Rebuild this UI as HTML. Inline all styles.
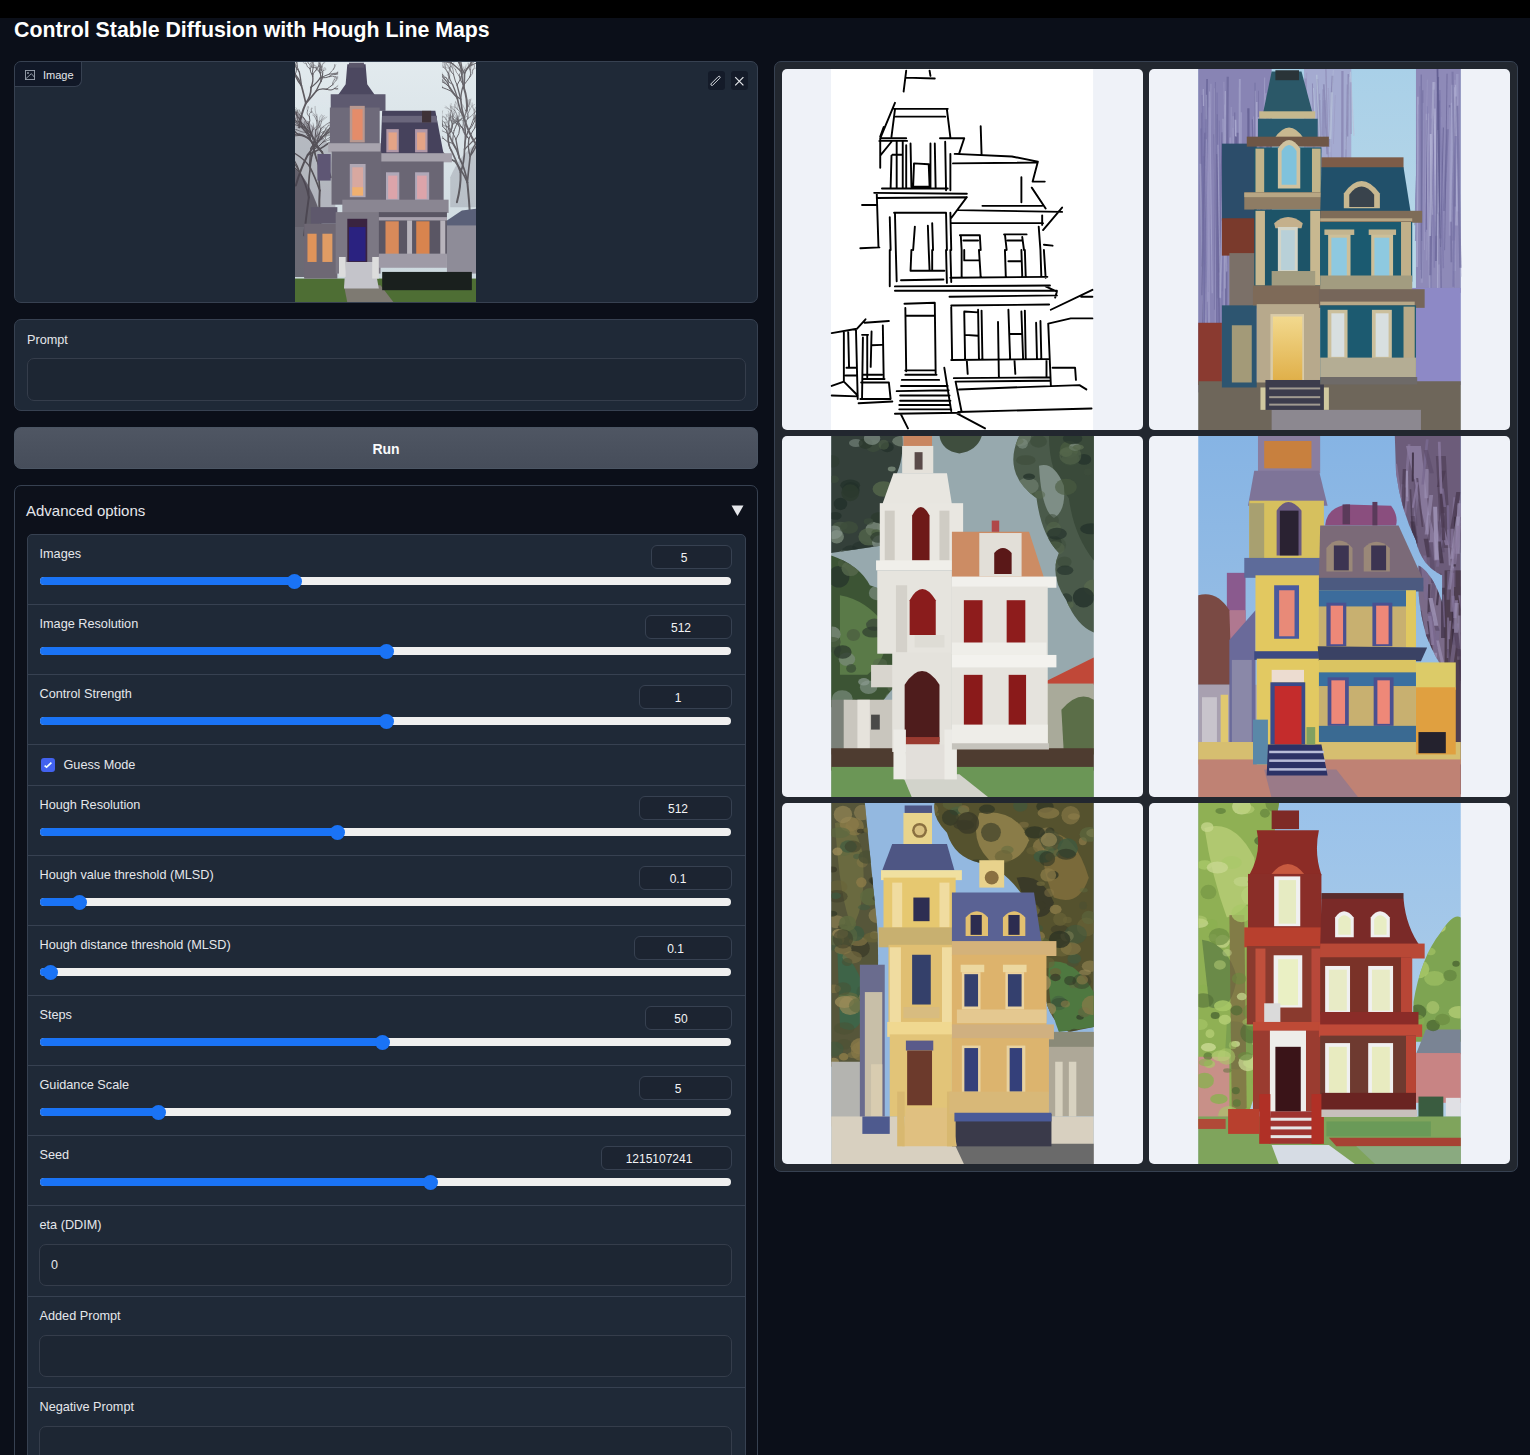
<!DOCTYPE html>
<html><head><meta charset="utf-8">
<style>
*{box-sizing:border-box;margin:0;padding:0}
html,body{width:1530px;height:1455px;overflow:hidden;background:#0b0f19;font-family:"Liberation Sans",sans-serif;color:#e5e7eb}
.abs{position:absolute}
#topbar{left:0;top:0;width:1530px;height:17.5px;background:#000}
#title{left:14px;top:17.5px;font-size:21.3px;font-weight:bold;color:#fff;white-space:nowrap;line-height:25px}
.block{position:absolute;background:#1f2937;border:1px solid #374151;border-radius:7px;overflow:hidden}
.lbl{position:absolute;font-size:12.7px;color:#e5e7eb;white-space:nowrap;line-height:15px}
.input{position:absolute;border:1px solid #353d4b;border-radius:7px;background:#1d2633}
.numbox{position:absolute;border:1px solid #374151;border-radius:6px;height:24px;font-size:12px;color:#f3f4f6;text-align:center;line-height:23px;padding-right:15px;padding-top:0.7px;background:#1c2431}
.track{position:absolute;left:40px;width:691px;height:8px;border-radius:4px;background:#efefef;overflow:hidden}
.fill{position:absolute;left:0;top:0;height:8px;background:#1a73f5}
.thumb{position:absolute;width:15px;height:15px;border-radius:7.5px;background:#1a73f5}
.sep{position:absolute;left:0;width:718px;height:1px;background:#374151}
.cell{position:absolute;width:361px;height:361px;background:#eff2f8;border-radius:5px;overflow:hidden}

</style></head><body>
<div id="topbar" class="abs"></div>
<div id="title" class="abs">Control Stable Diffusion with Hough Line Maps</div>

<!-- Image block -->
<div class="block" style="left:14px;top:61px;width:744px;height:242px;">
  <div class="abs" style="left:0;top:0;width:67px;height:25px;border-right:1px solid #374151;border-bottom:1px solid #374151;border-bottom-right-radius:7px;background:#111827"></div>
  <svg class="abs" style="left:9.5px;top:7.5px" width="10" height="10" viewBox="0 0 11 11"><rect x="0.5" y="0.5" width="10" height="10" fill="none" stroke="#9ca3af" stroke-width="1"/><circle cx="3.3" cy="3.3" r="1" fill="#9ca3af"/><path d="M0.5 10 L7 4 L10.5 8" fill="none" stroke="#9ca3af" stroke-width="1"/></svg>
  <div class="lbl" style="left:28px;top:5.5px;font-size:11px">Image</div>
  <svg class="abs" style="left:280px;top:0px;width:181px;height:240px" viewBox="5 6 1090 1445">
<defs><linearGradient id="ins" x1="0" y1="0" x2="0" y2="1"><stop offset="0" stop-color="#e2eaee"/><stop offset="1" stop-color="#c9d6dc"/></linearGradient></defs>
<rect x="5" y="0" width="1090" height="1455" fill="url(#ins)"/>
<!-- bare trees -->
<path d="M5,300 Q120,380 220,520 L250,900 L150,1000 L5,1000 Z" fill="#8a8690" opacity="0.45"/>
<path d="M1095,500 Q1000,560 940,700 L940,880 L1095,880 Z" fill="#8a8a94" opacity="0.35"/>
<defs><clipPath id="inL"><rect x="5" y="0" width="260" height="1300"/></clipPath><clipPath id="inR"><rect x="890" y="0" width="210" height="950"/></clipPath></defs><g stroke="#3e383e" fill="none" opacity="0.8" stroke-linecap="round" clip-path="url(#inL)"><path d="M60,1050 Q72,938 88,822" stroke-width="12.0"/><path d="M88,822 Q83,742 97,644" stroke-width="10.0"/><path d="M97,644 Q101,572 129,512" stroke-width="8.0"/><path d="M129,512 Q148,464 159,410" stroke-width="6.0"/><path d="M159,410 Q194,377 222,364" stroke-width="4.0"/><path d="M222,364 Q233,372 271,356" stroke-width="2.0"/><path d="M222,364 Q244,341 269,330" stroke-width="2.0"/><path d="M159,410 Q144,383 134,334" stroke-width="4.0"/><path d="M134,334 Q120,310 95,304" stroke-width="2.0"/><path d="M134,334 Q124,291 126,273" stroke-width="2.0"/><path d="M129,512 Q149,475 171,439" stroke-width="6.0"/><path d="M171,439 Q179,422 205,390" stroke-width="4.0"/><path d="M205,390 Q211,387 224,354" stroke-width="2.0"/><path d="M205,390 Q220,393 240,374" stroke-width="2.0"/><path d="M171,439 Q183,414 220,407" stroke-width="4.0"/><path d="M220,407 Q228,388 245,372" stroke-width="2.0"/><path d="M220,407 Q230,411 258,401" stroke-width="2.0"/><path d="M220,407 Q220,391 235,363" stroke-width="2.0"/><path d="M171,439 Q190,424 232,410" stroke-width="4.0"/><path d="M232,410 Q250,424 281,412" stroke-width="2.0"/><path d="M232,410 Q243,404 253,370" stroke-width="2.0"/><path d="M232,410 Q245,392 280,401" stroke-width="2.0"/><path d="M97,644 Q95,583 119,533" stroke-width="8.0"/><path d="M119,533 Q148,518 174,488" stroke-width="6.0"/><path d="M174,488 Q210,476 217,473" stroke-width="4.0"/><path d="M217,473 Q246,468 253,469" stroke-width="2.0"/><path d="M217,473 Q221,473 250,465" stroke-width="2.0"/><path d="M174,488 Q205,462 216,461" stroke-width="4.0"/><path d="M216,461 Q222,436 229,427" stroke-width="2.0"/><path d="M216,461 Q226,453 234,429" stroke-width="2.0"/><path d="M216,461 Q230,465 247,451" stroke-width="2.0"/><path d="M174,488 Q194,475 193,441" stroke-width="4.0"/><path d="M193,441 Q198,410 184,402" stroke-width="2.0"/><path d="M193,441 Q209,440 205,409" stroke-width="2.0"/><path d="M193,441 Q199,432 213,414" stroke-width="2.0"/><path d="M119,533 Q112,498 97,466" stroke-width="6.0"/><path d="M97,466 Q86,428 83,415" stroke-width="4.0"/><path d="M83,415 Q62,387 60,387" stroke-width="2.0"/><path d="M83,415 Q79,410 75,375" stroke-width="2.0"/><path d="M97,466 Q93,439 112,415" stroke-width="4.0"/><path d="M112,415 Q126,408 137,393" stroke-width="2.0"/><path d="M112,415 Q132,392 139,386" stroke-width="2.0"/><path d="M112,415 Q124,390 114,373" stroke-width="2.0"/><path d="M97,466 Q114,441 110,421" stroke-width="4.0"/><path d="M110,421 Q115,394 104,390" stroke-width="2.0"/><path d="M110,421 Q115,409 117,385" stroke-width="2.0"/><path d="M88,822 Q72,737 32,668" stroke-width="10.0"/><path d="M32,668 Q12,604 -31,558" stroke-width="8.0"/><path d="M-31,558 Q-22,504 -18,468" stroke-width="6.0"/><path d="M-18,468 Q-33,443 -40,416" stroke-width="4.0"/><path d="M-40,416 Q-38,400 -54,380" stroke-width="2.0"/><path d="M-40,416 Q-39,388 -32,374" stroke-width="2.0"/><path d="M-18,468 Q-24,441 -11,407" stroke-width="4.0"/><path d="M-11,407 Q-35,377 -30,365" stroke-width="2.0"/><path d="M-11,407 Q-7,396 -7,364" stroke-width="2.0"/><path d="M-18,468 Q-22,443 -7,410" stroke-width="4.0"/><path d="M-7,410 Q-10,394 -16,373" stroke-width="2.0"/><path d="M-7,410 Q4,382 -11,371" stroke-width="2.0"/><path d="M-7,410 Q-0,390 -13,373" stroke-width="2.0"/><path d="M-31,558 Q-39,508 -25,457" stroke-width="6.0"/><path d="M-25,457 Q-32,407 -20,383" stroke-width="4.0"/><path d="M-20,383 Q-32,371 -52,336" stroke-width="2.0"/><path d="M-20,383 Q-12,348 20,340" stroke-width="2.0"/><path d="M-25,457 Q-12,437 -12,396" stroke-width="4.0"/><path d="M-12,396 Q-14,387 -9,353" stroke-width="2.0"/><path d="M-12,396 Q-0,381 18,361" stroke-width="2.0"/><path d="M32,668 Q-27,619 -63,580" stroke-width="8.0"/><path d="M-63,580 Q-81,536 -115,497" stroke-width="6.0"/><path d="M-115,497 Q-152,464 -177,456" stroke-width="4.0"/><path d="M-177,456 Q-200,421 -195,400" stroke-width="2.0"/><path d="M-177,456 Q-209,439 -219,429" stroke-width="2.0"/><path d="M-115,497 Q-155,470 -170,459" stroke-width="4.0"/><path d="M-170,459 Q-175,446 -208,430" stroke-width="2.0"/><path d="M-170,459 Q-170,432 -195,425" stroke-width="2.0"/><path d="M-115,497 Q-142,466 -157,441" stroke-width="4.0"/><path d="M-157,441 Q-169,428 -191,410" stroke-width="2.0"/><path d="M-157,441 Q-172,425 -182,398" stroke-width="2.0"/><path d="M-63,580 Q-59,538 -80,500" stroke-width="6.0"/><path d="M-80,500 Q-110,462 -112,447" stroke-width="4.0"/><path d="M-112,447 Q-98,420 -111,407" stroke-width="2.0"/><path d="M-112,447 Q-126,436 -150,427" stroke-width="2.0"/><path d="M-112,447 Q-121,416 -116,408" stroke-width="2.0"/><path d="M-80,500 Q-85,477 -101,450" stroke-width="4.0"/><path d="M-101,450 Q-122,451 -128,425" stroke-width="2.0"/><path d="M-101,450 Q-123,433 -120,414" stroke-width="2.0"/><path d="M-101,450 Q-100,426 -91,412" stroke-width="2.0"/><path d="M-63,580 Q-73,528 -99,493" stroke-width="6.0"/><path d="M-99,493 Q-111,450 -102,427" stroke-width="4.0"/><path d="M-102,427 Q-102,418 -116,382" stroke-width="2.0"/><path d="M-102,427 Q-100,414 -102,382" stroke-width="2.0"/><path d="M-102,427 Q-105,414 -95,387" stroke-width="2.0"/><path d="M-99,493 Q-116,478 -139,440" stroke-width="4.0"/><path d="M-139,440 Q-131,411 -142,393" stroke-width="2.0"/><path d="M-139,440 Q-177,436 -187,422" stroke-width="2.0"/><path d="M-139,440 Q-142,433 -162,403" stroke-width="2.0"/><path d="M32,668 Q12,624 -29,585" stroke-width="8.0"/><path d="M-29,585 Q-62,540 -71,520" stroke-width="6.0"/><path d="M-71,520 Q-109,513 -118,497" stroke-width="4.0"/><path d="M-118,497 Q-140,475 -146,469" stroke-width="2.0"/><path d="M-118,497 Q-150,492 -155,480" stroke-width="2.0"/><path d="M-71,520 Q-64,504 -79,460" stroke-width="4.0"/><path d="M-79,460 Q-109,434 -109,432" stroke-width="2.0"/><path d="M-79,460 Q-80,441 -75,420" stroke-width="2.0"/><path d="M-79,460 Q-88,424 -76,415" stroke-width="2.0"/><path d="M-71,520 Q-91,508 -116,491" stroke-width="4.0"/><path d="M-116,491 Q-138,472 -142,468" stroke-width="2.0"/><path d="M-116,491 Q-133,475 -149,466" stroke-width="2.0"/><path d="M-29,585 Q-64,570 -76,537" stroke-width="6.0"/><path d="M-76,537 Q-77,500 -94,489" stroke-width="4.0"/><path d="M-94,489 Q-79,468 -87,450" stroke-width="2.0"/><path d="M-94,489 Q-93,476 -114,461" stroke-width="2.0"/><path d="M-76,537 Q-111,516 -125,518" stroke-width="4.0"/><path d="M-125,518 Q-157,516 -165,515" stroke-width="2.0"/><path d="M-125,518 Q-151,528 -158,527" stroke-width="2.0"/><path d="M-76,537 Q-89,503 -90,494" stroke-width="4.0"/><path d="M-90,494 Q-97,465 -77,463" stroke-width="2.0"/><path d="M-90,494 Q-102,474 -85,461" stroke-width="2.0"/><path d="M-29,585 Q-52,551 -55,510" stroke-width="6.0"/><path d="M-55,510 Q-46,480 -53,446" stroke-width="4.0"/><path d="M-53,446 Q-53,421 -66,407" stroke-width="2.0"/><path d="M-53,446 Q-76,434 -75,411" stroke-width="2.0"/><path d="M-55,510 Q-83,500 -108,474" stroke-width="4.0"/><path d="M-108,474 Q-116,458 -125,433" stroke-width="2.0"/><path d="M-108,474 Q-124,491 -152,478" stroke-width="2.0"/><path d="M-55,510 Q-82,481 -86,459" stroke-width="4.0"/><path d="M-86,459 Q-111,452 -114,431" stroke-width="2.0"/><path d="M-86,459 Q-89,458 -105,427" stroke-width="2.0"/><path d="M-86,459 Q-89,438 -92,422" stroke-width="2.0"/><path d="M160,1000 Q146,904 154,780" stroke-width="12.0"/><path d="M154,780 Q124,694 92,633" stroke-width="10.0"/><path d="M92,633 Q59,589 2,555" stroke-width="8.0"/><path d="M2,555 Q-50,559 -89,538" stroke-width="6.0"/><path d="M-89,538 Q-126,525 -143,506" stroke-width="4.0"/><path d="M-143,506 Q-154,508 -182,485" stroke-width="2.0"/><path d="M-143,506 Q-158,475 -168,473" stroke-width="2.0"/><path d="M-89,538 Q-137,545 -157,542" stroke-width="4.0"/><path d="M-157,542 Q-192,542 -204,551" stroke-width="2.0"/><path d="M-157,542 Q-169,518 -200,517" stroke-width="2.0"/><path d="M2,555 Q-23,523 -22,477" stroke-width="6.0"/><path d="M-22,477 Q-13,442 -20,418" stroke-width="4.0"/><path d="M-20,418 Q1,394 1,385" stroke-width="2.0"/><path d="M-20,418 Q-5,408 -16,375" stroke-width="2.0"/><path d="M-20,418 Q-0,386 -4,379" stroke-width="2.0"/><path d="M-22,477 Q-44,442 -55,434" stroke-width="4.0"/><path d="M-55,434 Q-63,418 -63,397" stroke-width="2.0"/><path d="M-55,434 Q-66,437 -93,417" stroke-width="2.0"/><path d="M92,633 Q96,569 101,525" stroke-width="8.0"/><path d="M101,525 Q130,490 151,474" stroke-width="6.0"/><path d="M151,474 Q180,474 191,447" stroke-width="4.0"/><path d="M191,447 Q198,452 227,445" stroke-width="2.0"/><path d="M191,447 Q213,442 221,437" stroke-width="2.0"/><path d="M151,474 Q163,472 187,444" stroke-width="4.0"/><path d="M187,444 Q200,430 202,418" stroke-width="2.0"/><path d="M187,444 Q194,446 215,428" stroke-width="2.0"/><path d="M187,444 Q210,429 215,435" stroke-width="2.0"/><path d="M101,525 Q108,506 141,469" stroke-width="6.0"/><path d="M141,469 Q136,441 159,424" stroke-width="4.0"/><path d="M159,424 Q183,401 179,397" stroke-width="2.0"/><path d="M159,424 Q166,399 160,388" stroke-width="2.0"/><path d="M159,424 Q158,397 176,391" stroke-width="2.0"/><path d="M141,469 Q149,451 180,451" stroke-width="4.0"/><path d="M180,451 Q187,434 210,439" stroke-width="2.0"/><path d="M180,451 Q196,455 212,449" stroke-width="2.0"/><path d="M180,451 Q183,430 194,425" stroke-width="2.0"/><path d="M101,525 Q131,475 133,454" stroke-width="6.0"/><path d="M133,454 Q150,434 174,426" stroke-width="4.0"/><path d="M174,426 Q199,432 214,426" stroke-width="2.0"/><path d="M174,426 Q196,424 192,398" stroke-width="2.0"/><path d="M133,454 Q149,429 144,398" stroke-width="4.0"/><path d="M144,398 Q157,374 150,358" stroke-width="2.0"/><path d="M144,398 Q130,378 134,361" stroke-width="2.0"/><path d="M154,780 Q147,688 146,622" stroke-width="10.0"/><path d="M146,622 Q119,562 121,520" stroke-width="8.0"/><path d="M121,520 Q117,474 104,445" stroke-width="6.0"/><path d="M104,445 Q107,419 84,400" stroke-width="4.0"/><path d="M84,400 Q68,376 80,362" stroke-width="2.0"/><path d="M84,400 Q80,385 88,364" stroke-width="2.0"/><path d="M104,445 Q93,411 79,398" stroke-width="4.0"/><path d="M79,398 Q71,378 65,366" stroke-width="2.0"/><path d="M79,398 Q59,378 63,366" stroke-width="2.0"/><path d="M79,398 Q88,393 86,363" stroke-width="2.0"/><path d="M121,520 Q98,492 89,446" stroke-width="6.0"/><path d="M89,446 Q72,420 61,404" stroke-width="4.0"/><path d="M61,404 Q70,378 52,371" stroke-width="2.0"/><path d="M61,404 Q61,377 62,365" stroke-width="2.0"/><path d="M89,446 Q81,420 52,405" stroke-width="4.0"/><path d="M52,405 Q22,390 21,385" stroke-width="2.0"/><path d="M52,405 Q51,387 23,376" stroke-width="2.0"/><path d="M52,405 Q33,400 17,397" stroke-width="2.0"/><path d="M146,622 Q121,552 116,501" stroke-width="8.0"/><path d="M116,501 Q94,479 70,431" stroke-width="6.0"/><path d="M70,431 Q52,431 14,414" stroke-width="4.0"/><path d="M14,414 Q4,418 -25,395" stroke-width="2.0"/><path d="M14,414 Q-17,407 -27,419" stroke-width="2.0"/><path d="M70,431 Q59,412 32,391" stroke-width="4.0"/><path d="M32,391 Q28,388 12,359" stroke-width="2.0"/><path d="M32,391 Q16,367 1,363" stroke-width="2.0"/><path d="M116,501 Q130,450 131,415" stroke-width="6.0"/><path d="M131,415 Q153,381 154,364" stroke-width="4.0"/><path d="M154,364 Q168,357 186,338" stroke-width="2.0"/><path d="M154,364 Q167,351 181,328" stroke-width="2.0"/><path d="M154,364 Q149,333 166,323" stroke-width="2.0"/><path d="M131,415 Q160,400 164,365" stroke-width="4.0"/><path d="M164,365 Q165,358 170,328" stroke-width="2.0"/><path d="M164,365 Q190,341 197,337" stroke-width="2.0"/><path d="M131,415 Q145,380 135,359" stroke-width="4.0"/><path d="M135,359 Q120,332 118,322" stroke-width="2.0"/><path d="M135,359 Q128,327 111,324" stroke-width="2.0"/><path d="M135,359 Q145,337 137,320" stroke-width="2.0"/><path d="M10,750 Q37,651 82,564" stroke-width="12.0"/><path d="M82,564 Q154,536 205,496" stroke-width="10.0"/><path d="M205,496 Q261,500 315,495" stroke-width="8.0"/><path d="M315,495 Q351,487 397,478" stroke-width="6.0"/><path d="M397,478 Q418,494 447,495" stroke-width="4.0"/><path d="M447,495 Q468,506 476,523" stroke-width="2.0"/><path d="M447,495 Q473,491 475,515" stroke-width="2.0"/><path d="M397,478 Q421,464 456,476" stroke-width="4.0"/><path d="M456,476 Q469,478 492,466" stroke-width="2.0"/><path d="M456,476 Q470,462 493,467" stroke-width="2.0"/><path d="M456,476 Q470,488 502,477" stroke-width="2.0"/><path d="M315,495 Q359,501 402,491" stroke-width="6.0"/><path d="M402,491 Q425,514 453,512" stroke-width="4.0"/><path d="M453,512 Q453,533 481,540" stroke-width="2.0"/><path d="M453,512 Q472,511 486,533" stroke-width="2.0"/><path d="M402,491 Q434,480 465,497" stroke-width="4.0"/><path d="M465,497 Q473,484 508,498" stroke-width="2.0"/><path d="M465,497 Q503,490 512,489" stroke-width="2.0"/><path d="M465,497 Q473,500 502,527" stroke-width="2.0"/><path d="M205,496 Q259,484 296,476" stroke-width="8.0"/><path d="M296,476 Q316,465 337,425" stroke-width="6.0"/><path d="M337,425 Q347,402 340,379" stroke-width="4.0"/><path d="M340,379 Q319,376 324,350" stroke-width="2.0"/><path d="M340,379 Q343,376 323,352" stroke-width="2.0"/><path d="M337,425 Q338,411 364,388" stroke-width="4.0"/><path d="M364,388 Q383,367 390,364" stroke-width="2.0"/><path d="M364,388 Q366,386 386,369" stroke-width="2.0"/><path d="M364,388 Q375,374 395,378" stroke-width="2.0"/><path d="M296,476 Q328,464 352,456" stroke-width="6.0"/><path d="M352,456 Q372,460 390,437" stroke-width="4.0"/><path d="M390,437 Q403,419 417,424" stroke-width="2.0"/><path d="M390,437 Q401,436 419,420" stroke-width="2.0"/><path d="M352,456 Q355,445 387,428" stroke-width="4.0"/><path d="M387,428 Q409,411 408,408" stroke-width="2.0"/><path d="M387,428 Q392,404 399,398" stroke-width="2.0"/><path d="M352,456 Q385,469 396,472" stroke-width="4.0"/><path d="M396,472 Q410,471 426,481" stroke-width="2.0"/><path d="M396,472 Q401,458 429,470" stroke-width="2.0"/><path d="M296,476 Q339,473 362,470" stroke-width="6.0"/><path d="M362,470 Q372,479 402,480" stroke-width="4.0"/><path d="M402,480 Q420,504 428,500" stroke-width="2.0"/><path d="M402,480 Q426,477 426,502" stroke-width="2.0"/><path d="M402,480 Q420,462 434,469" stroke-width="2.0"/><path d="M362,470 Q380,463 404,483" stroke-width="4.0"/><path d="M404,483 Q405,477 430,494" stroke-width="2.0"/><path d="M404,483 Q433,486 435,477" stroke-width="2.0"/><path d="M82,564 Q120,507 179,449" stroke-width="10.0"/><path d="M179,449 Q220,406 236,359" stroke-width="8.0"/><path d="M236,359 Q241,328 264,294" stroke-width="6.0"/><path d="M264,294 Q284,285 305,268" stroke-width="4.0"/><path d="M305,268 Q323,281 340,269" stroke-width="2.0"/><path d="M305,268 Q309,255 320,234" stroke-width="2.0"/><path d="M305,268 Q317,250 335,250" stroke-width="2.0"/><path d="M264,294 Q282,267 286,248" stroke-width="4.0"/><path d="M286,248 Q303,254 314,233" stroke-width="2.0"/><path d="M286,248 Q288,225 309,225" stroke-width="2.0"/><path d="M286,248 Q310,233 313,224" stroke-width="2.0"/><path d="M264,294 Q255,261 267,249" stroke-width="4.0"/><path d="M267,249 Q279,222 274,222" stroke-width="2.0"/><path d="M267,249 Q271,234 256,219" stroke-width="2.0"/><path d="M236,359 Q274,335 296,317" stroke-width="6.0"/><path d="M296,317 Q321,319 349,297" stroke-width="4.0"/><path d="M349,297 Q370,287 370,267" stroke-width="2.0"/><path d="M349,297 Q362,289 385,302" stroke-width="2.0"/><path d="M349,297 Q374,301 386,306" stroke-width="2.0"/><path d="M296,317 Q322,302 343,304" stroke-width="4.0"/><path d="M343,304 Q357,316 378,310" stroke-width="2.0"/><path d="M343,304 Q364,302 373,317" stroke-width="2.0"/><path d="M179,449 Q216,419 269,406" stroke-width="8.0"/><path d="M269,406 Q282,378 301,349" stroke-width="6.0"/><path d="M301,349 Q318,318 321,311" stroke-width="4.0"/><path d="M321,311 Q342,295 334,287" stroke-width="2.0"/><path d="M321,311 Q321,309 346,290" stroke-width="2.0"/><path d="M301,349 Q292,343 302,307" stroke-width="4.0"/><path d="M302,307 Q320,299 311,279" stroke-width="2.0"/><path d="M302,307 Q312,298 298,279" stroke-width="2.0"/><path d="M269,406 Q293,394 317,360" stroke-width="6.0"/><path d="M317,360 Q329,341 363,346" stroke-width="4.0"/><path d="M363,346 Q382,336 389,321" stroke-width="2.0"/><path d="M363,346 Q386,354 394,335" stroke-width="2.0"/><path d="M363,346 Q375,337 398,357" stroke-width="2.0"/><path d="M317,360 Q334,339 355,339" stroke-width="4.0"/><path d="M355,339 Q384,343 389,344" stroke-width="2.0"/><path d="M355,339 Q373,330 379,325" stroke-width="2.0"/><path d="M355,339 Q381,332 382,340" stroke-width="2.0"/><path d="M269,406 Q320,397 345,417" stroke-width="6.0"/><path d="M345,417 Q373,446 397,450" stroke-width="4.0"/><path d="M397,450 Q405,482 413,486" stroke-width="2.0"/><path d="M397,450 Q406,462 433,467" stroke-width="2.0"/><path d="M345,417 Q366,409 396,417" stroke-width="4.0"/><path d="M396,417 Q404,408 426,393" stroke-width="2.0"/><path d="M396,417 Q410,402 427,404" stroke-width="2.0"/><path d="M220,700 Q196,626 168,549" stroke-width="12.0"/><path d="M168,549 Q125,506 94,473" stroke-width="10.0"/><path d="M94,473 Q56,448 33,448" stroke-width="8.0"/><path d="M33,448 Q9,430 1,418" stroke-width="6.0"/><path d="M1,418 Q1,424 -24,401" stroke-width="4.0"/><path d="M-24,401 Q-22,383 -30,381" stroke-width="2.0"/><path d="M-24,401 Q-49,395 -44,389" stroke-width="2.0"/><path d="M1,418 Q-22,408 -29,409" stroke-width="4.0"/><path d="M-29,409 Q-29,415 -42,393" stroke-width="2.0"/><path d="M-29,409 Q-41,407 -45,392" stroke-width="2.0"/><path d="M33,448 Q11,438 -1,422" stroke-width="6.0"/><path d="M-1,422 Q-11,421 -25,404" stroke-width="4.0"/><path d="M-25,404 Q-30,386 -44,397" stroke-width="2.0"/><path d="M-25,404 Q-40,392 -31,382" stroke-width="2.0"/><path d="M-25,404 Q-19,391 -30,385" stroke-width="2.0"/><path d="M-1,422 Q-7,424 -9,397" stroke-width="4.0"/><path d="M-9,397 Q-19,373 -10,378" stroke-width="2.0"/><path d="M-9,397 Q-2,378 -9,379" stroke-width="2.0"/><path d="M-9,397 Q0,381 -15,380" stroke-width="2.0"/><path d="M33,448 Q0,452 -17,451" stroke-width="6.0"/><path d="M-17,451 Q-29,452 -50,444" stroke-width="4.0"/><path d="M-50,444 Q-62,457 -74,445" stroke-width="2.0"/><path d="M-50,444 Q-65,445 -70,438" stroke-width="2.0"/><path d="M-17,451 Q-40,473 -47,475" stroke-width="4.0"/><path d="M-47,475 Q-55,485 -63,500" stroke-width="2.0"/><path d="M-47,475 Q-54,489 -70,493" stroke-width="2.0"/><path d="M94,473 Q90,445 67,398" stroke-width="8.0"/><path d="M67,398 Q52,367 24,363" stroke-width="6.0"/><path d="M24,363 Q18,347 13,323" stroke-width="4.0"/><path d="M13,323 Q23,295 24,292" stroke-width="2.0"/><path d="M13,323 Q21,314 17,296" stroke-width="2.0"/><path d="M13,323 Q15,307 8,291" stroke-width="2.0"/><path d="M24,363 Q23,334 16,327" stroke-width="4.0"/><path d="M16,327 Q6,305 11,303" stroke-width="2.0"/><path d="M16,327 Q7,313 11,301" stroke-width="2.0"/><path d="M67,398 Q42,381 15,365" stroke-width="6.0"/><path d="M15,365 Q11,350 -19,342" stroke-width="4.0"/><path d="M-19,342 Q-44,333 -43,333" stroke-width="2.0"/><path d="M-19,342 Q-26,329 -29,318" stroke-width="2.0"/><path d="M15,365 Q8,362 -2,328" stroke-width="4.0"/><path d="M-2,328 Q1,325 -25,315" stroke-width="2.0"/><path d="M-2,328 Q-8,323 -22,305" stroke-width="2.0"/><path d="M-2,328 Q-12,302 -25,306" stroke-width="2.0"/><path d="M15,365 Q-6,356 -21,337" stroke-width="4.0"/><path d="M-21,337 Q-40,324 -34,307" stroke-width="2.0"/><path d="M-21,337 Q-47,342 -50,321" stroke-width="2.0"/><path d="M-21,337 Q-38,329 -56,327" stroke-width="2.0"/><path d="M94,473 Q68,448 33,441" stroke-width="8.0"/><path d="M33,441 Q5,429 -17,430" stroke-width="6.0"/><path d="M-17,430 Q-24,426 -53,424" stroke-width="4.0"/><path d="M-53,424 Q-55,432 -76,414" stroke-width="2.0"/><path d="M-53,424 Q-71,426 -76,422" stroke-width="2.0"/><path d="M-17,430 Q-25,431 -49,446" stroke-width="4.0"/><path d="M-49,446 Q-66,467 -71,462" stroke-width="2.0"/><path d="M-49,446 Q-54,457 -74,454" stroke-width="2.0"/><path d="M-49,446 Q-52,447 -74,448" stroke-width="2.0"/><path d="M33,441 Q19,445 -18,440" stroke-width="6.0"/><path d="M-18,440 Q-30,417 -52,418" stroke-width="4.0"/><path d="M-52,418 Q-50,413 -77,404" stroke-width="2.0"/><path d="M-52,418 Q-52,403 -72,396" stroke-width="2.0"/><path d="M-18,440 Q-27,447 -53,445" stroke-width="4.0"/><path d="M-53,445 Q-75,438 -74,456" stroke-width="2.0"/><path d="M-53,445 Q-52,446 -72,464" stroke-width="2.0"/><path d="M-53,445 Q-54,448 -73,465" stroke-width="2.0"/><path d="M168,549 Q137,511 110,453" stroke-width="10.0"/><path d="M110,453 Q94,425 88,384" stroke-width="8.0"/><path d="M88,384 Q100,359 92,335" stroke-width="6.0"/><path d="M92,335 Q72,323 80,299" stroke-width="4.0"/><path d="M80,299 Q95,271 82,272" stroke-width="2.0"/><path d="M80,299 Q71,274 85,277" stroke-width="2.0"/><path d="M92,335 Q84,313 106,306" stroke-width="4.0"/><path d="M106,306 Q100,280 109,284" stroke-width="2.0"/><path d="M106,306 Q96,295 104,282" stroke-width="2.0"/><path d="M88,384 Q75,378 58,343" stroke-width="6.0"/><path d="M58,343 Q41,337 30,322" stroke-width="4.0"/><path d="M30,322 Q13,325 14,306" stroke-width="2.0"/><path d="M30,322 Q37,320 20,297" stroke-width="2.0"/><path d="M58,343 Q43,325 41,316" stroke-width="4.0"/><path d="M41,316 Q47,316 31,298" stroke-width="2.0"/><path d="M41,316 Q26,304 31,294" stroke-width="2.0"/><path d="M110,453 Q85,410 53,396" stroke-width="8.0"/><path d="M53,396 Q41,360 24,339" stroke-width="6.0"/><path d="M24,339 Q9,308 -9,300" stroke-width="4.0"/><path d="M-9,300 Q-15,285 -39,287" stroke-width="2.0"/><path d="M-9,300 Q-33,293 -37,287" stroke-width="2.0"/><path d="M-9,300 Q-18,306 -38,290" stroke-width="2.0"/><path d="M24,339 Q20,317 -12,311" stroke-width="4.0"/><path d="M-12,311 Q-38,299 -40,301" stroke-width="2.0"/><path d="M-12,311 Q-16,299 -33,288" stroke-width="2.0"/><path d="M53,396 Q29,390 -1,382" stroke-width="6.0"/><path d="M-1,382 Q-8,377 -40,391" stroke-width="4.0"/><path d="M-40,391 Q-45,407 -58,415" stroke-width="2.0"/><path d="M-40,391 Q-49,412 -57,412" stroke-width="2.0"/><path d="M-40,391 Q-41,391 -65,407" stroke-width="2.0"/><path d="M-1,382 Q-24,379 -34,395" stroke-width="4.0"/><path d="M-34,395 Q-43,388 -54,406" stroke-width="2.0"/><path d="M-34,395 Q-59,413 -56,413" stroke-width="2.0"/><path d="M110,453 Q68,435 47,399" stroke-width="8.0"/><path d="M47,399 Q45,366 34,348" stroke-width="6.0"/><path d="M34,348 Q32,337 13,313" stroke-width="4.0"/><path d="M13,313 Q12,314 -10,298" stroke-width="2.0"/><path d="M13,313 Q9,311 1,286" stroke-width="2.0"/><path d="M13,313 Q3,295 -11,300" stroke-width="2.0"/><path d="M34,348 Q42,321 21,309" stroke-width="4.0"/><path d="M21,309 Q17,288 11,281" stroke-width="2.0"/><path d="M21,309 Q2,316 -3,294" stroke-width="2.0"/><path d="M47,399 Q17,381 -0,360" stroke-width="6.0"/><path d="M-0,360 Q-22,356 -42,341" stroke-width="4.0"/><path d="M-42,341 Q-38,316 -61,312" stroke-width="2.0"/><path d="M-42,341 Q-70,318 -71,318" stroke-width="2.0"/><path d="M-0,360 Q-6,333 -39,333" stroke-width="4.0"/><path d="M-39,333 Q-68,323 -70,334" stroke-width="2.0"/><path d="M-39,333 Q-50,320 -54,299" stroke-width="2.0"/><path d="M-39,333 Q-57,326 -63,304" stroke-width="2.0"/><path d="M30,400 Q40,321 70,255" stroke-width="12.0"/><path d="M70,255 Q62,217 44,149" stroke-width="10.0"/><path d="M44,149 Q24,126 4,83" stroke-width="8.0"/><path d="M4,83 Q20,61 10,27" stroke-width="6.0"/><path d="M10,27 Q8,11 -7,-6" stroke-width="4.0"/><path d="M-7,-6 Q-3,-30 -3,-31" stroke-width="2.0"/><path d="M-7,-6 Q-21,-6 -5,-30" stroke-width="2.0"/><path d="M-7,-6 Q-19,-24 -11,-32" stroke-width="2.0"/><path d="M10,27 Q-10,-7 -6,-13" stroke-width="4.0"/><path d="M-6,-13 Q-3,-18 -24,-38" stroke-width="2.0"/><path d="M-6,-13 Q-1,-30 -22,-42" stroke-width="2.0"/><path d="M-6,-13 Q-17,-30 -1,-46" stroke-width="2.0"/><path d="M4,83 Q-8,71 -42,54" stroke-width="6.0"/><path d="M-42,54 Q-55,45 -64,24" stroke-width="4.0"/><path d="M-64,24 Q-74,10 -84,12" stroke-width="2.0"/><path d="M-64,24 Q-59,19 -82,7" stroke-width="2.0"/><path d="M-64,24 Q-58,8 -69,-4" stroke-width="2.0"/><path d="M-42,54 Q-60,51 -69,28" stroke-width="4.0"/><path d="M-69,28 Q-79,19 -84,3" stroke-width="2.0"/><path d="M-69,28 Q-67,20 -74,1" stroke-width="2.0"/><path d="M-69,28 Q-69,34 -96,23" stroke-width="2.0"/><path d="M44,149 Q37,94 31,67" stroke-width="8.0"/><path d="M31,67 Q13,29 -11,20" stroke-width="6.0"/><path d="M-11,20 Q-33,5 -43,-12" stroke-width="4.0"/><path d="M-43,-12 Q-62,-9 -73,-31" stroke-width="2.0"/><path d="M-43,-12 Q-69,-0 -73,-18" stroke-width="2.0"/><path d="M-11,20 Q-28,20 -46,-2" stroke-width="4.0"/><path d="M-46,-2 Q-52,-5 -65,-27" stroke-width="2.0"/><path d="M-46,-2 Q-52,-16 -55,-27" stroke-width="2.0"/><path d="M-46,-2 Q-45,-18 -69,-17" stroke-width="2.0"/><path d="M31,67 Q15,37 16,10" stroke-width="6.0"/><path d="M16,10 Q1,-0 -17,-17" stroke-width="4.0"/><path d="M-17,-17 Q-43,-12 -39,-37" stroke-width="2.0"/><path d="M-17,-17 Q-33,-43 -31,-46" stroke-width="2.0"/><path d="M-17,-17 Q-36,-38 -30,-47" stroke-width="2.0"/><path d="M16,10 Q21,1 3,-35" stroke-width="4.0"/><path d="M3,-35 Q-10,-50 -17,-57" stroke-width="2.0"/><path d="M3,-35 Q-12,-60 -10,-62" stroke-width="2.0"/><path d="M3,-35 Q-9,-40 -17,-60" stroke-width="2.0"/><path d="M44,149 Q31,107 4,77" stroke-width="8.0"/><path d="M4,77 Q-22,68 -23,31" stroke-width="6.0"/><path d="M-23,31 Q-8,25 -20,-7" stroke-width="4.0"/><path d="M-20,-7 Q-0,-27 -6,-30" stroke-width="2.0"/><path d="M-20,-7 Q-14,-21 -30,-36" stroke-width="2.0"/><path d="M-23,31 Q-43,19 -59,13" stroke-width="4.0"/><path d="M-59,13 Q-77,-10 -79,-7" stroke-width="2.0"/><path d="M-59,13 Q-73,-8 -84,-1" stroke-width="2.0"/><path d="M4,77 Q-19,49 -41,51" stroke-width="6.0"/><path d="M-41,51 Q-58,30 -76,39" stroke-width="4.0"/><path d="M-76,39 Q-85,24 -103,33" stroke-width="2.0"/><path d="M-76,39 Q-79,27 -93,18" stroke-width="2.0"/><path d="M-41,51 Q-50,47 -62,20" stroke-width="4.0"/><path d="M-62,20 Q-56,-1 -77,-1" stroke-width="2.0"/><path d="M-62,20 Q-58,6 -78,-0" stroke-width="2.0"/><path d="M-62,20 Q-75,6 -61,-7" stroke-width="2.0"/><path d="M70,255 Q103,219 132,182" stroke-width="10.0"/><path d="M132,182 Q146,150 162,122" stroke-width="8.0"/><path d="M162,122 Q174,112 171,81" stroke-width="6.0"/><path d="M171,81 Q167,72 166,54" stroke-width="4.0"/><path d="M166,54 Q161,48 168,34" stroke-width="2.0"/><path d="M166,54 Q151,56 152,41" stroke-width="2.0"/><path d="M166,54 Q161,57 165,36" stroke-width="2.0"/><path d="M171,81 Q180,58 162,55" stroke-width="4.0"/><path d="M162,55 Q179,55 170,34" stroke-width="2.0"/><path d="M162,55 Q162,49 148,44" stroke-width="2.0"/><path d="M162,55 Q173,53 160,37" stroke-width="2.0"/><path d="M171,81 Q159,65 178,55" stroke-width="4.0"/><path d="M178,55 Q198,59 189,43" stroke-width="2.0"/><path d="M178,55 Q177,34 185,39" stroke-width="2.0"/><path d="M162,122 Q169,95 156,70" stroke-width="6.0"/><path d="M156,70 Q146,61 156,32" stroke-width="4.0"/><path d="M156,32 Q164,24 152,8" stroke-width="2.0"/><path d="M156,32 Q152,2 155,2" stroke-width="2.0"/><path d="M156,70 Q144,62 128,40" stroke-width="4.0"/><path d="M128,40 Q112,44 100,31" stroke-width="2.0"/><path d="M128,40 Q113,37 104,24" stroke-width="2.0"/><path d="M128,40 Q108,46 101,34" stroke-width="2.0"/><path d="M162,122 Q161,100 157,71" stroke-width="6.0"/><path d="M157,71 Q145,53 136,42" stroke-width="4.0"/><path d="M136,42 Q143,29 121,23" stroke-width="2.0"/><path d="M136,42 Q138,47 119,23" stroke-width="2.0"/><path d="M157,71 Q146,68 158,38" stroke-width="4.0"/><path d="M158,38 Q156,37 149,15" stroke-width="2.0"/><path d="M158,38 Q163,14 157,18" stroke-width="2.0"/><path d="M157,71 Q150,52 166,32" stroke-width="4.0"/><path d="M166,32 Q169,8 185,10" stroke-width="2.0"/><path d="M166,32 Q177,5 182,5" stroke-width="2.0"/><path d="M132,182 Q152,162 196,170" stroke-width="8.0"/><path d="M196,170 Q212,158 233,142" stroke-width="6.0"/><path d="M233,142 Q240,129 251,118" stroke-width="4.0"/><path d="M251,118 Q246,116 268,101" stroke-width="2.0"/><path d="M251,118 Q255,96 259,97" stroke-width="2.0"/><path d="M233,142 Q224,139 242,112" stroke-width="4.0"/><path d="M242,112 Q238,117 260,96" stroke-width="2.0"/><path d="M242,112 Q248,95 236,91" stroke-width="2.0"/><path d="M196,170 Q225,182 242,166" stroke-width="6.0"/><path d="M242,166 Q249,174 278,161" stroke-width="4.0"/><path d="M278,161 Q296,158 302,160" stroke-width="2.0"/><path d="M278,161 Q285,151 307,167" stroke-width="2.0"/><path d="M242,166 Q259,154 269,144" stroke-width="4.0"/><path d="M269,144 Q274,129 291,143" stroke-width="2.0"/><path d="M269,144 Q275,120 282,125" stroke-width="2.0"/><path d="M242,166 Q267,164 275,179" stroke-width="4.0"/><path d="M275,179 Q286,176 300,177" stroke-width="2.0"/><path d="M275,179 Q298,181 295,197" stroke-width="2.0"/><path d="M70,255 Q101,214 102,158" stroke-width="10.0"/><path d="M102,158 Q140,129 156,102" stroke-width="8.0"/><path d="M156,102 Q173,94 213,78" stroke-width="6.0"/><path d="M213,78 Q225,76 258,72" stroke-width="4.0"/><path d="M258,72 Q282,72 287,65" stroke-width="2.0"/><path d="M258,72 Q279,58 292,71" stroke-width="2.0"/><path d="M258,72 Q261,57 280,52" stroke-width="2.0"/><path d="M213,78 Q227,56 237,49" stroke-width="4.0"/><path d="M237,49 Q242,41 245,20" stroke-width="2.0"/><path d="M237,49 Q247,28 251,22" stroke-width="2.0"/><path d="M237,49 Q253,35 244,22" stroke-width="2.0"/><path d="M156,102 Q197,102 212,94" stroke-width="6.0"/><path d="M212,94 Q233,88 248,95" stroke-width="4.0"/><path d="M248,95 Q271,99 271,93" stroke-width="2.0"/><path d="M248,95 Q263,102 274,97" stroke-width="2.0"/><path d="M248,95 Q254,115 266,109" stroke-width="2.0"/><path d="M212,94 Q220,74 246,78" stroke-width="4.0"/><path d="M246,78 Q264,85 272,75" stroke-width="2.0"/><path d="M246,78 Q245,87 268,69" stroke-width="2.0"/><path d="M246,78 Q263,78 267,63" stroke-width="2.0"/><path d="M212,94 Q227,77 246,81" stroke-width="4.0"/><path d="M246,81 Q263,87 273,75" stroke-width="2.0"/><path d="M246,81 Q251,85 270,67" stroke-width="2.0"/><path d="M102,158 Q118,115 111,91" stroke-width="8.0"/><path d="M111,91 Q95,62 95,46" stroke-width="6.0"/><path d="M95,46 Q112,43 101,16" stroke-width="4.0"/><path d="M101,16 Q110,16 91,-5" stroke-width="2.0"/><path d="M101,16 Q111,8 103,-5" stroke-width="2.0"/><path d="M95,46 Q103,21 85,12" stroke-width="4.0"/><path d="M85,12 Q70,1 72,-7" stroke-width="2.0"/><path d="M85,12 Q73,2 82,-15" stroke-width="2.0"/><path d="M95,46 Q77,42 72,16" stroke-width="4.0"/><path d="M72,16 Q52,20 53,-2" stroke-width="2.0"/><path d="M72,16 Q59,14 72,-7" stroke-width="2.0"/><path d="M111,91 Q107,71 114,39" stroke-width="6.0"/><path d="M114,39 Q125,25 107,2" stroke-width="4.0"/><path d="M107,2 Q111,-21 105,-28" stroke-width="2.0"/><path d="M107,2 Q108,-9 94,-19" stroke-width="2.0"/><path d="M114,39 Q107,25 117,-1" stroke-width="4.0"/><path d="M117,-1 Q99,-23 109,-31" stroke-width="2.0"/><path d="M117,-1 Q107,-25 124,-25" stroke-width="2.0"/><path d="M117,-1 Q117,-6 133,-25" stroke-width="2.0"/><path d="M111,91 Q110,73 132,54" stroke-width="6.0"/><path d="M132,54 Q126,39 150,32" stroke-width="4.0"/><path d="M150,32 Q167,29 169,27" stroke-width="2.0"/><path d="M150,32 Q164,35 159,17" stroke-width="2.0"/><path d="M150,32 Q144,19 154,11" stroke-width="2.0"/><path d="M132,54 Q146,41 147,29" stroke-width="4.0"/><path d="M147,29 Q162,19 150,10" stroke-width="2.0"/><path d="M147,29 Q141,25 147,8" stroke-width="2.0"/><path d="M147,29 Q151,5 158,10" stroke-width="2.0"/></g><g stroke="#3e383e" fill="none" opacity="0.75" stroke-linecap="round" clip-path="url(#inR)"><path d="M1060,950 Q1054,839 1043,731" stroke-width="12.0"/><path d="M1043,731 Q1051,650 1060,572" stroke-width="10.0"/><path d="M1060,572 Q1044,531 1052,468" stroke-width="8.0"/><path d="M1052,468 Q1072,422 1088,402" stroke-width="6.0"/><path d="M1088,402 Q1093,378 1095,348" stroke-width="4.0"/><path d="M1095,348 Q1119,320 1118,321" stroke-width="2.0"/><path d="M1095,348 Q1110,338 1108,309" stroke-width="2.0"/><path d="M1088,402 Q1101,376 1096,353" stroke-width="4.0"/><path d="M1096,353 Q1087,353 1079,325" stroke-width="2.0"/><path d="M1096,353 Q1095,352 1116,323" stroke-width="2.0"/><path d="M1052,468 Q1021,432 1015,404" stroke-width="6.0"/><path d="M1015,404 Q1001,397 976,363" stroke-width="4.0"/><path d="M976,363 Q963,358 945,347" stroke-width="2.0"/><path d="M976,363 Q949,359 948,332" stroke-width="2.0"/><path d="M1015,404 Q996,398 970,371" stroke-width="4.0"/><path d="M970,371 Q942,351 931,358" stroke-width="2.0"/><path d="M970,371 Q971,358 947,339" stroke-width="2.0"/><path d="M970,371 Q941,349 936,351" stroke-width="2.0"/><path d="M1052,468 Q1021,446 1014,407" stroke-width="6.0"/><path d="M1014,407 Q1009,383 978,377" stroke-width="4.0"/><path d="M978,377 Q980,374 958,346" stroke-width="2.0"/><path d="M978,377 Q978,368 950,360" stroke-width="2.0"/><path d="M1014,407 Q1021,372 1017,358" stroke-width="4.0"/><path d="M1017,358 Q1021,339 1039,331" stroke-width="2.0"/><path d="M1017,358 Q1022,352 1037,333" stroke-width="2.0"/><path d="M1017,358 Q1013,339 1025,325" stroke-width="2.0"/><path d="M1060,572 Q1071,526 1102,481" stroke-width="8.0"/><path d="M1102,481 Q1120,441 1127,413" stroke-width="6.0"/><path d="M1127,413 Q1115,396 1109,360" stroke-width="4.0"/><path d="M1109,360 Q1118,347 1105,321" stroke-width="2.0"/><path d="M1109,360 Q1109,330 1109,320" stroke-width="2.0"/><path d="M1127,413 Q1123,383 1136,365" stroke-width="4.0"/><path d="M1136,365 Q1131,354 1134,330" stroke-width="2.0"/><path d="M1136,365 Q1128,345 1144,330" stroke-width="2.0"/><path d="M1102,481 Q1126,456 1129,419" stroke-width="6.0"/><path d="M1129,419 Q1143,418 1158,387" stroke-width="4.0"/><path d="M1158,387 Q1166,380 1172,359" stroke-width="2.0"/><path d="M1158,387 Q1171,383 1170,358" stroke-width="2.0"/><path d="M1158,387 Q1176,369 1169,362" stroke-width="2.0"/><path d="M1129,419 Q1156,392 1155,384" stroke-width="4.0"/><path d="M1155,384 Q1156,370 1160,356" stroke-width="2.0"/><path d="M1155,384 Q1181,364 1181,365" stroke-width="2.0"/><path d="M1155,384 Q1167,379 1165,358" stroke-width="2.0"/><path d="M1129,419 Q1155,402 1167,381" stroke-width="4.0"/><path d="M1167,381 Q1179,366 1171,344" stroke-width="2.0"/><path d="M1167,381 Q1183,384 1201,367" stroke-width="2.0"/><path d="M1167,381 Q1163,362 1180,346" stroke-width="2.0"/><path d="M1060,572 Q1096,527 1111,467" stroke-width="8.0"/><path d="M1111,467 Q1123,423 1140,399" stroke-width="6.0"/><path d="M1140,399 Q1147,386 1169,350" stroke-width="4.0"/><path d="M1169,350 Q1183,351 1199,326" stroke-width="2.0"/><path d="M1169,350 Q1167,338 1173,311" stroke-width="2.0"/><path d="M1140,399 Q1174,368 1181,365" stroke-width="4.0"/><path d="M1181,365 Q1184,360 1215,357" stroke-width="2.0"/><path d="M1181,365 Q1198,353 1219,365" stroke-width="2.0"/><path d="M1111,467 Q1128,433 1158,393" stroke-width="6.0"/><path d="M1158,393 Q1184,361 1184,329" stroke-width="4.0"/><path d="M1184,329 Q1215,327 1220,295" stroke-width="2.0"/><path d="M1184,329 Q1187,304 1182,285" stroke-width="2.0"/><path d="M1158,393 Q1169,394 1210,366" stroke-width="4.0"/><path d="M1210,366 Q1238,370 1245,351" stroke-width="2.0"/><path d="M1210,366 Q1214,339 1243,338" stroke-width="2.0"/><path d="M1111,467 Q1109,415 1130,390" stroke-width="6.0"/><path d="M1130,390 Q1132,353 1154,338" stroke-width="4.0"/><path d="M1154,338 Q1167,323 1165,300" stroke-width="2.0"/><path d="M1154,338 Q1158,315 1156,297" stroke-width="2.0"/><path d="M1130,390 Q1124,365 1143,332" stroke-width="4.0"/><path d="M1143,332 Q1150,316 1175,302" stroke-width="2.0"/><path d="M1143,332 Q1153,321 1164,294" stroke-width="2.0"/><path d="M1043,731 Q1009,655 967,604" stroke-width="10.0"/><path d="M967,604 Q913,572 885,542" stroke-width="8.0"/><path d="M885,542 Q853,539 819,528" stroke-width="6.0"/><path d="M819,528 Q790,525 780,516" stroke-width="4.0"/><path d="M780,516 Q775,518 753,498" stroke-width="2.0"/><path d="M780,516 Q760,516 747,516" stroke-width="2.0"/><path d="M780,516 Q786,509 764,494" stroke-width="2.0"/><path d="M819,528 Q786,517 782,499" stroke-width="4.0"/><path d="M782,499 Q776,493 747,488" stroke-width="2.0"/><path d="M782,499 Q764,483 765,471" stroke-width="2.0"/><path d="M885,542 Q837,538 811,542" stroke-width="6.0"/><path d="M811,542 Q798,536 760,524" stroke-width="4.0"/><path d="M760,524 Q745,509 737,493" stroke-width="2.0"/><path d="M760,524 Q737,519 731,507" stroke-width="2.0"/><path d="M760,524 Q743,519 724,517" stroke-width="2.0"/><path d="M811,542 Q802,542 766,517" stroke-width="4.0"/><path d="M766,517 Q751,529 731,523" stroke-width="2.0"/><path d="M766,517 Q739,523 725,521" stroke-width="2.0"/><path d="M885,542 Q880,518 868,479" stroke-width="6.0"/><path d="M868,479 Q857,447 870,435" stroke-width="4.0"/><path d="M870,435 Q871,407 880,405" stroke-width="2.0"/><path d="M870,435 Q881,433 890,413" stroke-width="2.0"/><path d="M868,479 Q851,460 833,442" stroke-width="4.0"/><path d="M833,442 Q831,437 827,402" stroke-width="2.0"/><path d="M833,442 Q822,422 799,427" stroke-width="2.0"/><path d="M833,442 Q810,438 814,416" stroke-width="2.0"/><path d="M868,479 Q879,442 863,428" stroke-width="4.0"/><path d="M863,428 Q867,395 843,392" stroke-width="2.0"/><path d="M863,428 Q843,418 846,396" stroke-width="2.0"/><path d="M967,604 Q915,579 861,557" stroke-width="8.0"/><path d="M861,557 Q813,557 783,543" stroke-width="6.0"/><path d="M783,543 Q757,554 739,565" stroke-width="4.0"/><path d="M739,565 Q722,577 707,585" stroke-width="2.0"/><path d="M739,565 Q715,563 718,589" stroke-width="2.0"/><path d="M739,565 Q733,592 715,595" stroke-width="2.0"/><path d="M783,543 Q741,538 724,560" stroke-width="4.0"/><path d="M724,560 Q703,577 692,587" stroke-width="2.0"/><path d="M724,560 Q703,547 685,551" stroke-width="2.0"/><path d="M861,557 Q818,574 771,575" stroke-width="6.0"/><path d="M771,575 Q748,610 726,624" stroke-width="4.0"/><path d="M726,624 Q720,635 686,640" stroke-width="2.0"/><path d="M726,624 Q730,651 704,667" stroke-width="2.0"/><path d="M726,624 Q698,640 677,636" stroke-width="2.0"/><path d="M771,575 Q734,584 702,576" stroke-width="4.0"/><path d="M702,576 Q692,583 665,602" stroke-width="2.0"/><path d="M702,576 Q690,564 660,555" stroke-width="2.0"/><path d="M771,575 Q746,551 716,545" stroke-width="4.0"/><path d="M716,545 Q699,532 690,502" stroke-width="2.0"/><path d="M716,545 Q690,519 687,504" stroke-width="2.0"/><path d="M1043,731 Q1028,645 995,584" stroke-width="10.0"/><path d="M995,584 Q982,530 954,487" stroke-width="8.0"/><path d="M954,487 Q956,446 963,418" stroke-width="6.0"/><path d="M963,418 Q975,387 983,372" stroke-width="4.0"/><path d="M983,372 Q984,356 1009,344" stroke-width="2.0"/><path d="M983,372 Q987,359 1009,354" stroke-width="2.0"/><path d="M963,418 Q973,395 983,372" stroke-width="4.0"/><path d="M983,372 Q990,352 985,335" stroke-width="2.0"/><path d="M983,372 Q983,374 1010,351" stroke-width="2.0"/><path d="M954,487 Q931,452 936,415" stroke-width="6.0"/><path d="M936,415 Q956,403 947,362" stroke-width="4.0"/><path d="M947,362 Q951,352 932,326" stroke-width="2.0"/><path d="M947,362 Q964,357 959,328" stroke-width="2.0"/><path d="M936,415 Q908,393 905,369" stroke-width="4.0"/><path d="M905,369 Q889,362 875,338" stroke-width="2.0"/><path d="M905,369 Q875,359 875,338" stroke-width="2.0"/><path d="M995,584 Q984,532 974,472" stroke-width="8.0"/><path d="M974,472 Q964,444 929,396" stroke-width="6.0"/><path d="M929,396 Q904,398 878,371" stroke-width="4.0"/><path d="M878,371 Q853,357 845,343" stroke-width="2.0"/><path d="M878,371 Q844,376 836,378" stroke-width="2.0"/><path d="M878,371 Q871,357 841,373" stroke-width="2.0"/><path d="M929,396 Q935,363 937,340" stroke-width="4.0"/><path d="M937,340 Q961,332 968,311" stroke-width="2.0"/><path d="M937,340 Q939,314 928,300" stroke-width="2.0"/><path d="M974,472 Q998,436 997,405" stroke-width="6.0"/><path d="M997,405 Q983,373 980,359" stroke-width="4.0"/><path d="M980,359 Q952,353 951,335" stroke-width="2.0"/><path d="M980,359 Q965,358 952,339" stroke-width="2.0"/><path d="M980,359 Q971,353 980,327" stroke-width="2.0"/><path d="M997,405 Q984,387 989,349" stroke-width="4.0"/><path d="M989,349 Q977,346 963,317" stroke-width="2.0"/><path d="M989,349 Q999,316 990,309" stroke-width="2.0"/><path d="M995,584 Q985,540 954,496" stroke-width="8.0"/><path d="M954,496 Q918,491 899,467" stroke-width="6.0"/><path d="M899,467 Q866,465 856,455" stroke-width="4.0"/><path d="M856,455 Q852,440 835,434" stroke-width="2.0"/><path d="M856,455 Q846,449 824,448" stroke-width="2.0"/><path d="M899,467 Q886,446 874,428" stroke-width="4.0"/><path d="M874,428 Q867,422 846,412" stroke-width="2.0"/><path d="M874,428 Q875,398 858,396" stroke-width="2.0"/><path d="M954,496 Q937,455 928,440" stroke-width="6.0"/><path d="M928,440 Q904,424 886,418" stroke-width="4.0"/><path d="M886,418 Q876,418 855,417" stroke-width="2.0"/><path d="M886,418 Q872,431 856,424" stroke-width="2.0"/><path d="M928,440 Q911,425 917,397" stroke-width="4.0"/><path d="M917,397 Q902,366 917,366" stroke-width="2.0"/><path d="M917,397 Q929,379 915,364" stroke-width="2.0"/><path d="M980,850 Q1005,756 1002,671" stroke-width="12.0"/><path d="M1002,671 Q1025,611 1026,532" stroke-width="10.0"/><path d="M1026,532 Q1075,483 1100,458" stroke-width="8.0"/><path d="M1100,458 Q1150,456 1172,435" stroke-width="6.0"/><path d="M1172,435 Q1190,428 1217,405" stroke-width="4.0"/><path d="M1217,405 Q1238,403 1259,397" stroke-width="2.0"/><path d="M1217,405 Q1238,402 1260,406" stroke-width="2.0"/><path d="M1172,435 Q1189,427 1227,421" stroke-width="4.0"/><path d="M1227,421 Q1256,417 1270,419" stroke-width="2.0"/><path d="M1227,421 Q1246,405 1255,387" stroke-width="2.0"/><path d="M1172,435 Q1201,436 1223,421" stroke-width="4.0"/><path d="M1223,421 Q1241,407 1259,404" stroke-width="2.0"/><path d="M1223,421 Q1234,408 1258,395" stroke-width="2.0"/><path d="M1223,421 Q1240,427 1258,414" stroke-width="2.0"/><path d="M1100,458 Q1102,435 1113,385" stroke-width="6.0"/><path d="M1113,385 Q1134,358 1134,332" stroke-width="4.0"/><path d="M1134,332 Q1130,310 1140,297" stroke-width="2.0"/><path d="M1134,332 Q1120,299 1127,288" stroke-width="2.0"/><path d="M1113,385 Q1106,370 1117,333" stroke-width="4.0"/><path d="M1117,333 Q1143,308 1138,308" stroke-width="2.0"/><path d="M1117,333 Q1126,325 1138,307" stroke-width="2.0"/><path d="M1026,532 Q1028,465 1047,425" stroke-width="8.0"/><path d="M1047,425 Q1074,393 1088,361" stroke-width="6.0"/><path d="M1088,361 Q1083,348 1107,311" stroke-width="4.0"/><path d="M1107,311 Q1118,293 1129,287" stroke-width="2.0"/><path d="M1107,311 Q1116,305 1111,274" stroke-width="2.0"/><path d="M1088,361 Q1080,339 1102,308" stroke-width="4.0"/><path d="M1102,308 Q1096,289 1111,271" stroke-width="2.0"/><path d="M1102,308 Q1109,303 1125,275" stroke-width="2.0"/><path d="M1047,425 Q1068,389 1079,353" stroke-width="6.0"/><path d="M1079,353 Q1094,344 1104,308" stroke-width="4.0"/><path d="M1104,308 Q1123,309 1127,281" stroke-width="2.0"/><path d="M1104,308 Q1118,292 1129,276" stroke-width="2.0"/><path d="M1079,353 Q1095,342 1121,309" stroke-width="4.0"/><path d="M1121,309 Q1144,295 1139,272" stroke-width="2.0"/><path d="M1121,309 Q1136,280 1130,268" stroke-width="2.0"/><path d="M1121,309 Q1143,300 1164,300" stroke-width="2.0"/><path d="M1079,353 Q1090,320 1084,295" stroke-width="4.0"/><path d="M1084,295 Q1089,280 1107,263" stroke-width="2.0"/><path d="M1084,295 Q1068,265 1071,252" stroke-width="2.0"/><path d="M1084,295 Q1061,268 1063,258" stroke-width="2.0"/><path d="M1026,532 Q1031,477 1031,420" stroke-width="8.0"/><path d="M1031,420 Q1015,364 1026,336" stroke-width="6.0"/><path d="M1026,336 Q1014,319 982,289" stroke-width="4.0"/><path d="M982,289 Q974,271 941,277" stroke-width="2.0"/><path d="M982,289 Q987,263 974,248" stroke-width="2.0"/><path d="M982,289 Q962,279 972,242" stroke-width="2.0"/><path d="M1026,336 Q1043,314 1041,274" stroke-width="4.0"/><path d="M1041,274 Q1047,249 1045,234" stroke-width="2.0"/><path d="M1041,274 Q1036,266 1054,232" stroke-width="2.0"/><path d="M1026,336 Q1031,295 1047,275" stroke-width="4.0"/><path d="M1047,275 Q1043,265 1060,234" stroke-width="2.0"/><path d="M1047,275 Q1066,249 1065,228" stroke-width="2.0"/><path d="M1047,275 Q1064,239 1058,232" stroke-width="2.0"/><path d="M1031,420 Q1024,372 1046,345" stroke-width="6.0"/><path d="M1046,345 Q1040,316 1058,290" stroke-width="4.0"/><path d="M1058,290 Q1051,267 1057,249" stroke-width="2.0"/><path d="M1058,290 Q1069,267 1086,261" stroke-width="2.0"/><path d="M1046,345 Q1063,340 1086,312" stroke-width="4.0"/><path d="M1086,312 Q1098,296 1099,279" stroke-width="2.0"/><path d="M1086,312 Q1091,299 1117,288" stroke-width="2.0"/><path d="M1086,312 Q1093,310 1104,284" stroke-width="2.0"/><path d="M1046,345 Q1049,307 1032,298" stroke-width="4.0"/><path d="M1032,298 Q1043,293 1045,261" stroke-width="2.0"/><path d="M1032,298 Q1017,271 1015,264" stroke-width="2.0"/><path d="M1032,298 Q1044,294 1039,267" stroke-width="2.0"/><path d="M1031,420 Q1000,398 984,352" stroke-width="6.0"/><path d="M984,352 Q952,339 948,301" stroke-width="4.0"/><path d="M948,301 Q938,299 912,271" stroke-width="2.0"/><path d="M948,301 Q938,281 945,256" stroke-width="2.0"/><path d="M948,301 Q939,286 908,280" stroke-width="2.0"/><path d="M984,352 Q989,333 967,298" stroke-width="4.0"/><path d="M967,298 Q969,277 966,262" stroke-width="2.0"/><path d="M967,298 Q954,280 939,267" stroke-width="2.0"/><path d="M967,298 Q946,283 938,274" stroke-width="2.0"/><path d="M1002,671 Q976,598 947,540" stroke-width="10.0"/><path d="M947,540 Q923,501 927,445" stroke-width="8.0"/><path d="M927,445 Q954,422 954,379" stroke-width="6.0"/><path d="M954,379 Q933,354 941,326" stroke-width="4.0"/><path d="M941,326 Q937,299 953,294" stroke-width="2.0"/><path d="M941,326 Q943,291 944,283" stroke-width="2.0"/><path d="M954,379 Q968,354 984,343" stroke-width="4.0"/><path d="M984,343 Q997,323 1011,329" stroke-width="2.0"/><path d="M984,343 Q1001,318 996,310" stroke-width="2.0"/><path d="M954,379 Q964,354 953,333" stroke-width="4.0"/><path d="M953,333 Q952,323 968,305" stroke-width="2.0"/><path d="M953,333 Q948,321 961,299" stroke-width="2.0"/><path d="M927,445 Q949,427 953,383" stroke-width="6.0"/><path d="M953,383 Q973,358 994,361" stroke-width="4.0"/><path d="M994,361 Q1014,337 1021,342" stroke-width="2.0"/><path d="M994,361 Q1007,352 1017,339" stroke-width="2.0"/><path d="M953,383 Q971,366 997,355" stroke-width="4.0"/><path d="M997,355 Q1006,351 1025,339" stroke-width="2.0"/><path d="M997,355 Q1018,350 1010,320" stroke-width="2.0"/><path d="M947,540 Q925,506 929,453" stroke-width="8.0"/><path d="M929,453 Q921,411 894,392" stroke-width="6.0"/><path d="M894,392 Q899,379 878,348" stroke-width="4.0"/><path d="M878,348 Q853,343 846,328" stroke-width="2.0"/><path d="M878,348 Q869,334 849,327" stroke-width="2.0"/><path d="M894,392 Q891,367 890,339" stroke-width="4.0"/><path d="M890,339 Q885,328 894,300" stroke-width="2.0"/><path d="M890,339 Q868,324 875,301" stroke-width="2.0"/><path d="M929,453 Q920,420 933,391" stroke-width="6.0"/><path d="M933,391 Q923,373 933,346" stroke-width="4.0"/><path d="M933,346 Q933,344 913,320" stroke-width="2.0"/><path d="M933,346 Q951,339 941,320" stroke-width="2.0"/><path d="M933,346 Q933,344 928,316" stroke-width="2.0"/><path d="M933,391 Q925,357 915,351" stroke-width="4.0"/><path d="M915,351 Q910,343 921,322" stroke-width="2.0"/><path d="M915,351 Q909,338 892,333" stroke-width="2.0"/><path d="M915,351 Q913,334 896,331" stroke-width="2.0"/><path d="M1095,500 Q1050,437 1024,345" stroke-width="12.0"/><path d="M1024,345 Q1007,286 1003,230" stroke-width="10.0"/><path d="M1003,230 Q967,211 947,182" stroke-width="8.0"/><path d="M947,182 Q930,166 926,133" stroke-width="6.0"/><path d="M926,133 Q923,119 903,103" stroke-width="4.0"/><path d="M903,103 Q902,85 890,77" stroke-width="2.0"/><path d="M903,103 Q884,107 894,80" stroke-width="2.0"/><path d="M903,103 Q905,83 877,88" stroke-width="2.0"/><path d="M926,133 Q936,105 935,98" stroke-width="4.0"/><path d="M935,98 Q917,83 926,78" stroke-width="2.0"/><path d="M935,98 Q945,77 928,72" stroke-width="2.0"/><path d="M926,133 Q920,114 931,96" stroke-width="4.0"/><path d="M931,96 Q932,97 927,71" stroke-width="2.0"/><path d="M931,96 Q927,75 924,68" stroke-width="2.0"/><path d="M947,182 Q917,168 894,160" stroke-width="6.0"/><path d="M894,160 Q888,159 852,163" stroke-width="4.0"/><path d="M852,163 Q848,169 824,173" stroke-width="2.0"/><path d="M852,163 Q847,167 824,179" stroke-width="2.0"/><path d="M852,163 Q848,167 819,165" stroke-width="2.0"/><path d="M894,160 Q883,132 874,126" stroke-width="4.0"/><path d="M874,126 Q854,119 862,100" stroke-width="2.0"/><path d="M874,126 Q861,125 852,112" stroke-width="2.0"/><path d="M1003,230 Q994,194 981,145" stroke-width="8.0"/><path d="M981,145 Q1003,110 1006,93" stroke-width="6.0"/><path d="M1006,93 Q1016,78 1025,53" stroke-width="4.0"/><path d="M1025,53 Q1030,49 1053,38" stroke-width="2.0"/><path d="M1025,53 Q1036,40 1036,23" stroke-width="2.0"/><path d="M1006,93 Q1015,62 1023,59" stroke-width="4.0"/><path d="M1023,59 Q1017,35 1019,34" stroke-width="2.0"/><path d="M1023,59 Q1036,55 1030,36" stroke-width="2.0"/><path d="M981,145 Q970,127 960,82" stroke-width="6.0"/><path d="M960,82 Q946,73 936,40" stroke-width="4.0"/><path d="M936,40 Q921,31 916,13" stroke-width="2.0"/><path d="M936,40 Q935,27 916,14" stroke-width="2.0"/><path d="M936,40 Q950,33 938,7" stroke-width="2.0"/><path d="M960,82 Q948,74 933,44" stroke-width="4.0"/><path d="M933,44 Q919,43 905,34" stroke-width="2.0"/><path d="M933,44 Q923,30 912,14" stroke-width="2.0"/><path d="M960,82 Q960,48 950,36" stroke-width="4.0"/><path d="M950,36 Q950,19 962,8" stroke-width="2.0"/><path d="M950,36 Q933,10 945,6" stroke-width="2.0"/><path d="M1003,230 Q1006,174 1020,147" stroke-width="8.0"/><path d="M1020,147 Q1039,123 1058,96" stroke-width="6.0"/><path d="M1058,96 Q1070,68 1062,50" stroke-width="4.0"/><path d="M1062,50 Q1054,26 1064,13" stroke-width="2.0"/><path d="M1062,50 Q1061,39 1079,20" stroke-width="2.0"/><path d="M1058,96 Q1082,77 1076,54" stroke-width="4.0"/><path d="M1076,54 Q1094,27 1082,18" stroke-width="2.0"/><path d="M1076,54 Q1094,40 1085,26" stroke-width="2.0"/><path d="M1076,54 Q1078,44 1108,38" stroke-width="2.0"/><path d="M1058,96 Q1069,78 1056,48" stroke-width="4.0"/><path d="M1056,48 Q1045,40 1049,12" stroke-width="2.0"/><path d="M1056,48 Q1067,40 1056,13" stroke-width="2.0"/><path d="M1056,48 Q1052,29 1046,13" stroke-width="2.0"/><path d="M1020,147 Q996,111 993,88" stroke-width="6.0"/><path d="M993,88 Q971,66 971,51" stroke-width="4.0"/><path d="M971,51 Q964,44 955,25" stroke-width="2.0"/><path d="M971,51 Q970,52 947,31" stroke-width="2.0"/><path d="M993,88 Q1009,72 998,48" stroke-width="4.0"/><path d="M998,48 Q996,46 984,23" stroke-width="2.0"/><path d="M998,48 Q1006,34 1008,24" stroke-width="2.0"/><path d="M1024,345 Q995,294 983,226" stroke-width="10.0"/><path d="M983,226 Q969,206 937,159" stroke-width="8.0"/><path d="M937,159 Q913,134 890,124" stroke-width="6.0"/><path d="M890,124 Q857,107 846,109" stroke-width="4.0"/><path d="M846,109 Q834,127 814,119" stroke-width="2.0"/><path d="M846,109 Q837,113 825,89" stroke-width="2.0"/><path d="M890,124 Q856,116 847,108" stroke-width="4.0"/><path d="M847,108 Q827,91 822,93" stroke-width="2.0"/><path d="M847,108 Q840,95 818,95" stroke-width="2.0"/><path d="M937,159 Q931,137 910,115" stroke-width="6.0"/><path d="M910,115 Q911,114 887,86" stroke-width="4.0"/><path d="M887,86 Q899,90 887,63" stroke-width="2.0"/><path d="M887,86 Q892,66 868,73" stroke-width="2.0"/><path d="M910,115 Q896,107 879,88" stroke-width="4.0"/><path d="M879,88 Q864,79 861,65" stroke-width="2.0"/><path d="M879,88 Q862,85 866,59" stroke-width="2.0"/><path d="M879,88 Q865,85 871,63" stroke-width="2.0"/><path d="M937,159 Q925,148 893,114" stroke-width="6.0"/><path d="M893,114 Q866,106 859,92" stroke-width="4.0"/><path d="M859,92 Q867,93 848,64" stroke-width="2.0"/><path d="M859,92 Q847,82 848,64" stroke-width="2.0"/><path d="M859,92 Q840,86 833,76" stroke-width="2.0"/><path d="M893,114 Q868,99 855,86" stroke-width="4.0"/><path d="M855,86 Q828,72 822,80" stroke-width="2.0"/><path d="M855,86 Q855,85 825,65" stroke-width="2.0"/><path d="M855,86 Q861,59 837,55" stroke-width="2.0"/><path d="M983,226 Q977,197 954,142" stroke-width="8.0"/><path d="M954,142 Q933,108 930,76" stroke-width="6.0"/><path d="M930,76 Q923,53 902,40" stroke-width="4.0"/><path d="M902,40 Q888,44 878,19" stroke-width="2.0"/><path d="M902,40 Q895,30 895,10" stroke-width="2.0"/><path d="M902,40 Q892,39 884,9" stroke-width="2.0"/><path d="M930,76 Q932,65 941,33" stroke-width="4.0"/><path d="M941,33 Q939,31 950,-0" stroke-width="2.0"/><path d="M941,33 Q924,15 934,-2" stroke-width="2.0"/><path d="M930,76 Q913,65 908,24" stroke-width="4.0"/><path d="M908,24 Q897,13 899,-11" stroke-width="2.0"/><path d="M908,24 Q913,1 892,-9" stroke-width="2.0"/><path d="M954,142 Q931,134 915,101" stroke-width="6.0"/><path d="M915,101 Q887,99 885,73" stroke-width="4.0"/><path d="M885,73 Q860,66 856,60" stroke-width="2.0"/><path d="M885,73 Q862,61 865,55" stroke-width="2.0"/><path d="M915,101 Q905,87 882,74" stroke-width="4.0"/><path d="M882,74 Q872,49 874,42" stroke-width="2.0"/><path d="M882,74 Q883,57 867,50" stroke-width="2.0"/><path d="M882,74 Q881,79 858,57" stroke-width="2.0"/><path d="M1040,300 Q1045,230 1022,161" stroke-width="12.0"/><path d="M1022,161 Q1025,132 1026,74" stroke-width="10.0"/><path d="M1026,74 Q1041,40 1068,24" stroke-width="8.0"/><path d="M1068,24 Q1089,16 1112,7" stroke-width="6.0"/><path d="M1112,7 Q1139,14 1143,9" stroke-width="4.0"/><path d="M1143,9 Q1149,12 1166,9" stroke-width="2.0"/><path d="M1143,9 Q1161,-1 1164,18" stroke-width="2.0"/><path d="M1112,7 Q1116,7 1147,2" stroke-width="4.0"/><path d="M1147,2 Q1172,-7 1175,2" stroke-width="2.0"/><path d="M1147,2 Q1152,-18 1167,-16" stroke-width="2.0"/><path d="M1068,24 Q1074,-2 1105,-6" stroke-width="6.0"/><path d="M1105,-6 Q1126,-6 1140,-19" stroke-width="4.0"/><path d="M1140,-19 Q1140,-13 1164,-26" stroke-width="2.0"/><path d="M1140,-19 Q1148,-30 1164,-38" stroke-width="2.0"/><path d="M1105,-6 Q1119,-29 1116,-41" stroke-width="4.0"/><path d="M1116,-41 Q1125,-62 1119,-66" stroke-width="2.0"/><path d="M1116,-41 Q1126,-50 1125,-63" stroke-width="2.0"/><path d="M1026,74 Q999,32 996,12" stroke-width="8.0"/><path d="M996,12 Q981,-22 969,-30" stroke-width="6.0"/><path d="M969,-30 Q955,-49 941,-47" stroke-width="4.0"/><path d="M941,-47 Q945,-68 920,-60" stroke-width="2.0"/><path d="M941,-47 Q941,-40 926,-61" stroke-width="2.0"/><path d="M969,-30 Q951,-42 957,-63" stroke-width="4.0"/><path d="M957,-63 Q945,-65 950,-85" stroke-width="2.0"/><path d="M957,-63 Q950,-67 960,-87" stroke-width="2.0"/><path d="M996,12 Q968,-13 971,-25" stroke-width="6.0"/><path d="M971,-25 Q959,-39 940,-41" stroke-width="4.0"/><path d="M940,-41 Q937,-33 917,-46" stroke-width="2.0"/><path d="M940,-41 Q926,-39 918,-39" stroke-width="2.0"/><path d="M940,-41 Q930,-33 919,-51" stroke-width="2.0"/><path d="M971,-25 Q960,-54 963,-55" stroke-width="4.0"/><path d="M963,-55 Q950,-52 945,-68" stroke-width="2.0"/><path d="M963,-55 Q972,-59 962,-79" stroke-width="2.0"/><path d="M1026,74 Q1044,36 1061,21" stroke-width="8.0"/><path d="M1061,21 Q1060,16 1086,-13" stroke-width="6.0"/><path d="M1086,-13 Q1088,-35 1111,-36" stroke-width="4.0"/><path d="M1111,-36 Q1132,-39 1134,-38" stroke-width="2.0"/><path d="M1111,-36 Q1110,-50 1124,-53" stroke-width="2.0"/><path d="M1086,-13 Q1110,-28 1110,-32" stroke-width="4.0"/><path d="M1110,-32 Q1129,-32 1122,-48" stroke-width="2.0"/><path d="M1110,-32 Q1114,-45 1122,-53" stroke-width="2.0"/><path d="M1061,21 Q1075,0 1075,-23" stroke-width="6.0"/><path d="M1075,-23 Q1086,-26 1096,-45" stroke-width="4.0"/><path d="M1096,-45 Q1099,-58 1115,-51" stroke-width="2.0"/><path d="M1096,-45 Q1115,-46 1109,-64" stroke-width="2.0"/><path d="M1075,-23 Q1082,-53 1085,-54" stroke-width="4.0"/><path d="M1085,-54 Q1086,-51 1099,-68" stroke-width="2.0"/><path d="M1085,-54 Q1097,-51 1083,-75" stroke-width="2.0"/><path d="M1061,21 Q1072,-12 1068,-24" stroke-width="6.0"/><path d="M1068,-24 Q1080,-24 1064,-52" stroke-width="4.0"/><path d="M1064,-52 Q1078,-65 1073,-73" stroke-width="2.0"/><path d="M1064,-52 Q1083,-61 1073,-69" stroke-width="2.0"/><path d="M1068,-24 Q1062,-47 1076,-56" stroke-width="4.0"/><path d="M1076,-56 Q1067,-65 1076,-77" stroke-width="2.0"/><path d="M1076,-56 Q1062,-66 1071,-77" stroke-width="2.0"/><path d="M1076,-56 Q1086,-53 1083,-79" stroke-width="2.0"/><path d="M1022,161 Q1009,102 1009,67" stroke-width="10.0"/><path d="M1009,67 Q1001,23 990,8" stroke-width="8.0"/><path d="M990,8 Q973,-22 969,-29" stroke-width="6.0"/><path d="M969,-29 Q955,-27 950,-54" stroke-width="4.0"/><path d="M950,-54 Q956,-53 948,-76" stroke-width="2.0"/><path d="M950,-54 Q933,-65 945,-74" stroke-width="2.0"/><path d="M950,-54 Q937,-64 933,-67" stroke-width="2.0"/><path d="M969,-29 Q957,-51 948,-52" stroke-width="4.0"/><path d="M948,-52 Q950,-67 926,-62" stroke-width="2.0"/><path d="M948,-52 Q941,-50 932,-71" stroke-width="2.0"/><path d="M990,8 Q984,-22 967,-30" stroke-width="6.0"/><path d="M967,-30 Q965,-59 961,-58" stroke-width="4.0"/><path d="M961,-58 Q964,-74 961,-78" stroke-width="2.0"/><path d="M961,-58 Q963,-66 964,-77" stroke-width="2.0"/><path d="M967,-30 Q950,-39 962,-65" stroke-width="4.0"/><path d="M962,-65 Q970,-67 957,-88" stroke-width="2.0"/><path d="M962,-65 Q948,-87 952,-85" stroke-width="2.0"/><path d="M962,-65 Q959,-78 948,-87" stroke-width="2.0"/><path d="M1009,67 Q1014,47 1002,0" stroke-width="8.0"/><path d="M1002,0 Q1019,-11 1020,-38" stroke-width="6.0"/><path d="M1020,-38 Q1020,-48 1029,-66" stroke-width="4.0"/><path d="M1029,-66 Q1050,-70 1043,-84" stroke-width="2.0"/><path d="M1029,-66 Q1032,-66 1032,-89" stroke-width="2.0"/><path d="M1020,-38 Q1004,-43 1014,-72" stroke-width="4.0"/><path d="M1014,-72 Q1022,-90 1025,-93" stroke-width="2.0"/><path d="M1014,-72 Q1030,-82 1021,-98" stroke-width="2.0"/><path d="M1014,-72 Q1020,-94 1004,-93" stroke-width="2.0"/><path d="M1002,0 Q1001,-19 1019,-40" stroke-width="6.0"/><path d="M1019,-40 Q1033,-55 1031,-73" stroke-width="4.0"/><path d="M1031,-73 Q1047,-73 1038,-98" stroke-width="2.0"/><path d="M1031,-73 Q1024,-78 1043,-93" stroke-width="2.0"/><path d="M1019,-40 Q1023,-45 1014,-68" stroke-width="4.0"/><path d="M1014,-68 Q1012,-87 1021,-84" stroke-width="2.0"/><path d="M1014,-68 Q1015,-86 1014,-87" stroke-width="2.0"/><path d="M1009,67 Q980,38 954,16" stroke-width="8.0"/><path d="M954,16 Q936,5 919,-30" stroke-width="6.0"/><path d="M919,-30 Q893,-38 885,-53" stroke-width="4.0"/><path d="M885,-53 Q862,-55 860,-70" stroke-width="2.0"/><path d="M885,-53 Q885,-50 865,-73" stroke-width="2.0"/><path d="M919,-30 Q897,-53 890,-56" stroke-width="4.0"/><path d="M890,-56 Q884,-74 875,-78" stroke-width="2.0"/><path d="M890,-56 Q868,-45 866,-61" stroke-width="2.0"/><path d="M954,16 Q925,1 906,-10" stroke-width="6.0"/><path d="M906,-10 Q881,-8 862,-13" stroke-width="4.0"/><path d="M862,-13 Q842,-34 834,-27" stroke-width="2.0"/><path d="M862,-13 Q855,-11 831,-16" stroke-width="2.0"/><path d="M862,-13 Q862,-3 837,3" stroke-width="2.0"/><path d="M906,-10 Q893,-38 891,-45" stroke-width="4.0"/><path d="M891,-45 Q898,-71 896,-69" stroke-width="2.0"/><path d="M891,-45 Q898,-56 888,-70" stroke-width="2.0"/><path d="M891,-45 Q881,-45 889,-72" stroke-width="2.0"/><path d="M906,-10 Q886,-27 884,-39" stroke-width="4.0"/><path d="M884,-39 Q866,-36 862,-54" stroke-width="2.0"/><path d="M884,-39 Q873,-39 875,-61" stroke-width="2.0"/><path d="M954,16 Q935,8 902,4" stroke-width="6.0"/><path d="M902,4 Q896,1 863,-12" stroke-width="4.0"/><path d="M863,-12 Q841,-19 847,-32" stroke-width="2.0"/><path d="M863,-12 Q837,-21 833,-10" stroke-width="2.0"/><path d="M902,4 Q889,6 863,10" stroke-width="4.0"/><path d="M863,10 Q839,19 839,20" stroke-width="2.0"/><path d="M863,10 Q856,4 837,19" stroke-width="2.0"/><path d="M863,10 Q854,2 834,17" stroke-width="2.0"/><path d="M902,4 Q893,-13 863,-9" stroke-width="4.0"/><path d="M863,-9 Q846,3 835,-5" stroke-width="2.0"/><path d="M863,-9 Q835,-22 834,-14" stroke-width="2.0"/></g>
<path d="M5,650 Q80,700 150,900 L150,1300 L5,1300 Z" fill="#4a4450" opacity="0.75"/>
<!-- right bg house -->
<polygon points="920,960 1010,900 1095,890 1095,1000 920,1000" fill="#5a6078"/>
<rect x="920" y="990" width="175" height="290" fill="#8e8c98"/>
<!-- grass -->
<rect x="5" y="1310" width="1090" height="145" fill="#4e6e34"/>
<polygon points="300,1350 520,1350 600,1455 320,1455" fill="#7e7a72"/>
<rect x="530" y="1270" width="540" height="110" fill="#1a201e"/>
<!-- house main -->
<polygon points="310,140 320,20 430,20 440,140 490,210 260,210" fill="#4c4860"/>
<rect x="330" y="10" width="90" height="30" fill="#5a566a"/>
<rect x="220" y="200" width="330" height="100" fill="#5e5a70"/>
<rect x="215" y="280" width="300" height="220" fill="#6e6a7a"/>
<rect x="335" y="270" width="90" height="220" fill="#b89890"/>
<rect x="350" y="290" width="62" height="185" fill="#e48c6a"/>
<rect x="205" y="495" width="350" height="55" fill="#a8a4ae"/>
<polygon points="530,300 850,300 900,560 520,560" fill="#46425c"/>
<rect x="530" y="330" width="330" height="40" fill="#6a667c"/>
<rect x="555" y="410" width="75" height="140" fill="#b098a8"/>
<rect x="568" y="430" width="50" height="105" fill="#e4a486"/>
<rect x="728" y="410" width="75" height="140" fill="#b098a8"/>
<rect x="740" y="430" width="50" height="105" fill="#e4a486"/>
<rect x="770" y="300" width="55" height="70" fill="#3e3238"/>
<rect x="520" y="555" width="430" height="55" fill="#a6a2ac"/>
<rect x="140" y="560" width="80" height="160" fill="#5e5674"/>
<rect x="225" y="545" width="300" height="320" fill="#6c6876"/>
<rect x="335" y="620" width="95" height="200" fill="#b0a8b4"/>
<rect x="350" y="640" width="65" height="170" fill="#d8a8a0"/>
<rect x="350" y="760" width="65" height="50" fill="#f0b070"/>
<rect x="520" y="605" width="380" height="245" fill="#6a6674"/>
<rect x="553" y="670" width="80" height="170" fill="#b0a8b8"/>
<rect x="566" y="690" width="55" height="140" fill="#dca4aa"/>
<rect x="728" y="670" width="85" height="170" fill="#b0a8b8"/>
<rect x="740" y="690" width="58" height="140" fill="#dca4aa"/>
<rect x="290" y="835" width="640" height="80" fill="#8a8692"/>
<rect x="100" y="880" width="160" height="100" fill="#5e586c"/>
<rect x="60" y="980" width="200" height="330" fill="#6e6874"/>
<rect x="80" y="1040" width="55" height="170" fill="#e0945a"/>
<rect x="170" y="1040" width="60" height="170" fill="#e09c64"/>
<rect x="250" y="910" width="270" height="370" fill="#7c7884"/>
<rect x="320" y="950" width="120" height="260" fill="#3a2440"/>
<rect x="330" y="1000" width="100" height="205" fill="#2a2280"/>
<rect x="510" y="910" width="410" height="260" fill="#5a5664"/>
<rect x="510" y="940" width="410" height="20" fill="#a8a2ae"/>
<rect x="550" y="965" width="80" height="200" fill="#d88a5a"/>
<rect x="735" y="965" width="80" height="200" fill="#d8844e"/>
<rect x="680" y="960" width="30" height="250" fill="#b8b4bc"/>
<rect x="880" y="960" width="30" height="250" fill="#b8b4bc"/>
<rect x="510" y="1160" width="410" height="85" fill="#9e9aa6"/>
<polygon points="310,1210 480,1210 510,1370 300,1370" fill="#c4c4ca"/>
<rect x="270" y="1180" width="40" height="120" fill="#dcdcdc"/>
<rect x="470" y="1180" width="40" height="130" fill="#dcdcdc"/>
</svg>

  <div class="abs" style="left:693px;top:8.5px;width:17px;height:19px;background:#141b29;border-radius:3px"></div>
  <div class="abs" style="left:716px;top:8.5px;width:17px;height:19px;background:#141b29;border-radius:3px"></div>
  <svg class="abs" style="left:693px;top:8.5px" width="17" height="19" viewBox="0 0 17 19"><path d="M3.2 14.2 L2.8 13 L10.2 5.6 Q11.2 4.8 11.9 5.6 Q12.6 6.4 11.6 7.3 L4.4 14.5 Z" fill="none" stroke="#d1d5db" stroke-width="1"/></svg>
  <svg class="abs" style="left:716px;top:8.5px" width="17" height="19" viewBox="0 0 17 19"><path d="M4.2 6.2 L12.4 14.4 M12.4 6.2 L4.2 14.4" stroke="#e5e7eb" stroke-width="1.2"/></svg>
</div>

<!-- Prompt block -->
<div class="block" style="left:14px;top:319px;width:744px;height:92px;">
  <div class="lbl" style="left:12px;top:13px">Prompt</div>
  <div class="input" style="left:12px;top:38px;width:719px;height:43px"></div>
</div>

<!-- Run button -->
<div class="abs" style="left:14px;top:427px;width:744px;height:42px;border-radius:7px;background:linear-gradient(to bottom,#4f5663,#464d5a);border:1px solid #4b5563">
  <div class="abs" style="left:0;top:13px;width:742px;text-align:center;font-weight:bold;font-size:14px;color:#f9fafb;line-height:17px">Run</div>
</div>

<!-- Accordion -->
<div class="abs" style="left:14px;top:485px;width:744px;height:1000px;border:1px solid #374151;border-radius:7px;background:#0d111b">
  <div class="lbl" style="left:11px;top:15.7px;font-size:15px;line-height:18px;color:#e5e7eb">Advanced options</div>
  <svg class="abs" style="left:716px;top:19px" width="13" height="12" viewBox="0 0 13 12"><path d="M0.5 0.5 L12.5 0.5 L6.5 11 Z" fill="#e5e7eb"/></svg>
</div>

<div id="group" class="abs" style="left:27px;top:534px;width:719px;height:1000px;border:1px solid #374151;border-radius:5px;background:#1f2937;overflow:hidden">
<div class="lbl" style="left:11.5px;top:12.3px">Images</div>
<div class="numbox" style="left:623px;top:10px;width:81px">5</div>
<div class="track" style="left:12px;top:42px"><div class="fill" style="width:254px"></div></div>
<div class="thumb" style="left:258.5px;top:38.5px"></div>
<div class="lbl" style="left:11.5px;top:82.3px">Image Resolution</div>
<div class="numbox" style="left:617px;top:80px;width:87px">512</div>
<div class="track" style="left:12px;top:112px"><div class="fill" style="width:346px"></div></div>
<div class="thumb" style="left:350.5px;top:108.5px"></div>
<div class="lbl" style="left:11.5px;top:152.3px">Control Strength</div>
<div class="numbox" style="left:611px;top:150px;width:93px">1</div>
<div class="track" style="left:12px;top:182px"><div class="fill" style="width:346px"></div></div>
<div class="thumb" style="left:350.5px;top:178.5px"></div>
<div class="lbl" style="left:11.5px;top:263.3px">Hough Resolution</div>
<div class="numbox" style="left:611px;top:261px;width:93px">512</div>
<div class="track" style="left:12px;top:293px"><div class="fill" style="width:297px"></div></div>
<div class="thumb" style="left:301.5px;top:289.5px"></div>
<div class="lbl" style="left:11.5px;top:333.3px">Hough value threshold (MLSD)</div>
<div class="numbox" style="left:611px;top:331px;width:93px">0.1</div>
<div class="track" style="left:12px;top:363px"><div class="fill" style="width:39px"></div></div>
<div class="thumb" style="left:43.5px;top:359.5px"></div>
<div class="lbl" style="left:11.5px;top:403.3px">Hough distance threshold (MLSD)</div>
<div class="numbox" style="left:606px;top:401px;width:98px">0.1</div>
<div class="track" style="left:12px;top:433px"><div class="fill" style="width:10px"></div></div>
<div class="thumb" style="left:14.5px;top:429.5px"></div>
<div class="lbl" style="left:11.5px;top:473.3px">Steps</div>
<div class="numbox" style="left:617px;top:471px;width:87px">50</div>
<div class="track" style="left:12px;top:503px"><div class="fill" style="width:342px"></div></div>
<div class="thumb" style="left:346.5px;top:499.5px"></div>
<div class="lbl" style="left:11.5px;top:543.3px">Guidance Scale</div>
<div class="numbox" style="left:611px;top:541px;width:93px">5</div>
<div class="track" style="left:12px;top:573px"><div class="fill" style="width:118px"></div></div>
<div class="thumb" style="left:122.5px;top:569.5px"></div>
<div class="lbl" style="left:11.5px;top:613.3px">Seed</div>
<div class="numbox" style="left:573px;top:611px;width:131px">1215107241</div>
<div class="track" style="left:12px;top:643px"><div class="fill" style="width:390px"></div></div>
<div class="thumb" style="left:394.5px;top:639.5px"></div>
<div class="sep" style="top:69px"></div>
<div class="sep" style="top:139px"></div>
<div class="sep" style="top:209px"></div>
<div class="sep" style="top:250px"></div>
<div class="sep" style="top:320px"></div>
<div class="sep" style="top:390px"></div>
<div class="sep" style="top:460px"></div>
<div class="sep" style="top:530px"></div>
<div class="sep" style="top:600px"></div>
<div class="sep" style="top:670px"></div>
<div class="sep" style="top:761px"></div>
<div class="sep" style="top:852px"></div>
<div class="abs" style="left:13px;top:223px;width:14px;height:14px;border-radius:3px;background:#4262ef"></div>
<svg class="abs" style="left:13px;top:223px" width="14" height="14" viewBox="0 0 14 14"><path d="M3.6 7.6 L5.6 9.2 L10.4 4.6" fill="none" stroke="#f0ffff" stroke-width="1.7"/></svg>
<div class="lbl" style="left:35.5px;top:222.5px">Guess Mode</div>
<div class="lbl" style="left:11.5px;top:683px">eta (DDIM)</div>
<div class="input" style="left:11px;top:709px;width:693px;height:42px"></div>
<div class="lbl" style="left:23px;top:723px;font-size:12.5px">0</div>
<div class="lbl" style="left:11.5px;top:774px">Added Prompt</div>
<div class="input" style="left:11px;top:800px;width:693px;height:42px"></div>
<div class="lbl" style="left:11.5px;top:865px">Negative Prompt</div>
<div class="input" style="left:11px;top:891px;width:693px;height:42px"></div>
</div>

<!-- Gallery -->
<div class="block" style="left:774px;top:61px;width:744px;height:1111px;background:#22272f">
<div class="cell" style="left:7px;top:7px"><svg style="position:absolute;left:48px;top:0;width:265px;height:362px" viewBox="0 0 1530 2090"><rect x="6" y="0" width="1513" height="2090" fill="#fff"/><path d="M440 10 L425 130 M435 50 L605 55 M575 10 L580 40 M375 195 L290 400 M370 230 L680 230 M380 275 L665 275 M375 235 L355 390 M675 235 L695 395 M290 400 L440 400 M635 400 L775 400 M285 415 L445 415 M310 335 L290 390 M355 420 L290 500 M290 400 L290 570 M355 500 L350 690 M385 420 L385 690 M420 420 L420 690 M440 440 L440 690 M465 430 L470 680 M580 430 L580 690 M605 430 L610 690 M665 420 L670 700 M695 490 L695 700 M485 545 L570 550 L575 680 L480 680 L485 545 M360 495 L420 495 M300 690 L680 690 M775 400 L745 490 L720 490 M720 490 L1050 505 L1200 535 M710 545 L1190 540 M1200 535 L1170 650 L1240 650 M870 330 L875 490 M1105 625 L1105 770 M1165 685 L1245 805 M880 790 L1225 790 M255 715 L790 720 M270 745 L790 740 M790 740 L700 860 M270 720 L280 1030 M185 785 L270 785 M175 1035 L285 1030 M740 815 L1340 825 M700 890 L1230 890 M1340 800 L1230 930 M1205 910 L1215 1045 M1225 845 L1225 900 M370 830 L670 830 M375 830 L380 1045 M345 855 L350 1045 M670 830 L675 1045 M695 830 L700 1045 M490 910 L480 1045 M565 905 L570 1045 M590 890 L595 1045 M750 960 L865 960 M755 960 L760 1045 M865 960 L870 1045 M770 990 L855 990 M1005 955 L1135 955 M1010 955 L1020 1045 M1110 970 L1120 1045 M1025 990 L1105 990 M1235 1015 L1285 1020 M345 1045 L345 1255 M380 1045 L385 1225 M470 1045 L465 1165 L660 1165 M570 1045 L575 1165 M590 1045 L590 1165 M410 1220 L655 1215 M670 1045 L675 1235 M695 1045 L700 1230 M695 1205 L1255 1200 M760 1045 L760 1205 M775 1045 L775 1105 L860 1105 M860 1045 L870 1200 M1010 1045 L1015 1200 M1030 1110 L1105 1110 M1105 1045 L1110 1200 M1125 1045 L1130 1200 M1215 1045 L1220 1195 M1235 1045 L1245 1205 M375 1255 L1270 1250 M375 1280 L1310 1280 M690 1315 L1310 1307 M1245 1255 L1310 1285 L1300 1320 M1275 1390 L1515 1275 M1450 1315 L1515 1315 M430 1355 L605 1350 M435 1380 L440 1745 M440 1425 L600 1425 M605 1350 L610 1755 M435 1740 L610 1740 M700 1365 L1265 1360 M700 1375 L705 1680 M700 1680 L1260 1675 M775 1400 L855 1405 M775 1405 L780 1675 M780 1535 L855 1540 M855 1390 L860 1675 M875 1395 L880 1675 M970 1460 L975 1775 M1030 1390 L1040 1675 M1040 1530 L1105 1530 M1105 1400 L1115 1675 M1125 1395 L1130 1670 M1190 1465 L1195 1670 M1215 1455 L1220 1670 M1260 1470 L1390 1440 L1515 1440 M1260 1470 L1275 1825 M790 1685 L795 1760 M1065 1680 L1070 1760 M1250 1680 L1250 1775 M715 1785 L1270 1780 M725 1805 L760 1980 M725 1805 L1265 1800 M745 1850 L1440 1825 L1480 1850 M1285 1725 L1415 1725 L1420 1795 M740 1980 L1510 1960 M375 1990 L750 1985 M410 1995 L450 2075 M735 1990 L895 2075 M660 1725 L700 1975 M435 1765 L615 1765 M415 1795 L630 1795 M410 1830 L680 1830 M385 1860 L685 1855 M405 1885 L690 1885 M405 1915 L695 1915 M400 1940 L695 1940 M400 1965 L700 1965 M10 1525 L155 1500 L205 1445 M200 1465 L340 1455 M80 1515 L80 1805 M105 1515 L110 1725 M150 1505 L160 1905 M185 1535 L220 1535 M190 1550 L185 1905 M215 1535 L215 1780 M240 1515 L235 1720 M240 1595 L300 1593 M305 1480 L310 1790 M95 1725 L150 1725 M90 1770 L150 1770 M190 1765 L300 1765 M195 1790 L315 1790 M10 1830 L80 1805 L160 1885 M10 1885 L160 1890 M180 1810 L340 1810 L350 1905 L175 1905 M165 1930 L360 1920" fill="none" stroke="#000" stroke-width="11" stroke-linecap="round" stroke-linejoin="round"/></svg></div>
<div class="cell" style="left:374px;top:7px"><svg style="position:absolute;left:48px;top:0;width:265px;height:362px" viewBox="0 0 1065 1455">
<defs>
<linearGradient id="i1sky" x1="0" y1="0" x2="0" y2="1"><stop offset="0" stop-color="#a9d0e8"/><stop offset="1" stop-color="#c6dde6"/></linearGradient>
<linearGradient id="i1door" x1="0" y1="0" x2="0" y2="1"><stop offset="0" stop-color="#f2d98e"/><stop offset="1" stop-color="#e0b04a"/></linearGradient>
<pattern id="i1streak" width="46" height="1455" patternUnits="userSpaceOnUse"><rect width="46" height="1455" fill="#8c88b6"/><rect x="4" width="9" height="1455" fill="#a09fc6"/><rect x="22" width="6" height="1455" fill="#7c78aa"/><rect x="34" width="7" height="1455" fill="#9896c0"/></pattern>
<filter id="i1turb" x="0" y="0" width="100%" height="100%"><feTurbulence type="turbulence" baseFrequency="0.05 0.003" numOctaves="2" seed="4"/><feColorMatrix type="matrix" values="0 0 0 0 0.40  0 0 0 0 0.38  0 0 0 0 0.58  4 0 0 0 -0.6"/></filter></defs>
<rect x="5" y="0" width="1055" height="1455" fill="url(#i1sky)"/>
<rect x="5" y="0" width="295" height="1300" fill="#8884b4"/><path d="M99,254 L103,254 L91,818 L87,818 Z" fill="#605c90" opacity="0.73"/><path d="M270,34 L274,34 L262,997 L257,997 Z" fill="#a6a6cc" opacity="0.67"/><path d="M246,87 L249,87 L252,1106 L248,1106 Z" fill="#6e6a9c" opacity="0.66"/><path d="M289,335 L292,335 L294,931 L290,931 Z" fill="#a6a6cc" opacity="0.73"/><path d="M168,40 L176,40 L172,1077 L164,1077 Z" fill="#a6a6cc" opacity="0.72"/><path d="M23,80 L27,80 L35,1134 L32,1134 Z" fill="#b4b4d6" opacity="0.69"/><path d="M274,97 L279,97 L267,873 L261,873 Z" fill="#a6a6cc" opacity="0.62"/><path d="M149,175 L154,175 L143,1097 L138,1097 Z" fill="#6e6a9c" opacity="0.67"/><path d="M225,191 L229,191 L217,800 L213,800 Z" fill="#9c9ac4" opacity="0.72"/><path d="M235,133 L243,133 L246,962 L237,962 Z" fill="#b4b4d6" opacity="0.68"/><path d="M249,185 L259,185 L266,1125 L256,1125 Z" fill="#6e6a9c" opacity="0.62"/><path d="M173,174 L181,174 L176,1153 L169,1153 Z" fill="#9c9ac4" opacity="0.88"/><path d="M108,193 L116,193 L105,893 L97,893 Z" fill="#7a76aa" opacity="0.60"/><path d="M119,31 L128,31 L121,1014 L112,1014 Z" fill="#605c90" opacity="0.55"/><path d="M130,275 L137,275 L149,1293 L142,1293 Z" fill="#9c9ac4" opacity="0.88"/><path d="M49,90 L53,90 L63,901 L59,901 Z" fill="#b4b4d6" opacity="0.57"/><path d="M87,208 L91,208 L105,1097 L101,1097 Z" fill="#7a76aa" opacity="0.78"/><path d="M155,264 L162,264 L171,808 L164,808 Z" fill="#9c9ac4" opacity="0.66"/><path d="M121,247 L125,247 L139,812 L136,812 Z" fill="#6e6a9c" opacity="0.68"/><path d="M37,40 L44,40 L32,1075 L25,1075 Z" fill="#605c90" opacity="0.65"/><path d="M12,239 L22,239 L35,857 L26,857 Z" fill="#7a76aa" opacity="0.74"/><path d="M143,190 L147,190 L146,1288 L142,1288 Z" fill="#b4b4d6" opacity="0.53"/><path d="M35,103 L40,103 L41,1211 L35,1211 Z" fill="#a6a6cc" opacity="0.58"/><path d="M282,269 L288,269 L282,1255 L276,1255 Z" fill="#605c90" opacity="0.76"/><path d="M31,202 L40,202 L49,1252 L40,1252 Z" fill="#7a76aa" opacity="0.71"/><path d="M232,87 L237,87 L246,1202 L241,1202 Z" fill="#a6a6cc" opacity="0.83"/><path d="M220,202 L225,202 L240,965 L235,965 Z" fill="#6e6a9c" opacity="0.82"/><path d="M142,236 L147,236 L161,959 L157,959 Z" fill="#9c9ac4" opacity="0.88"/><path d="M111,88 L116,88 L115,882 L111,882 Z" fill="#a6a6cc" opacity="0.89"/><path d="M183,355 L186,355 L173,959 L170,959 Z" fill="#9c9ac4" opacity="0.76"/><path d="M270,293 L278,293 L276,1029 L268,1029 Z" fill="#a6a6cc" opacity="0.75"/><path d="M30,282 L40,282 L53,1021 L44,1021 Z" fill="#9c9ac4" opacity="0.79"/><path d="M54,59 L58,59 L48,1251 L44,1251 Z" fill="#9c9ac4" opacity="0.83"/><path d="M290,137 L298,137 L284,1065 L276,1065 Z" fill="#a6a6cc" opacity="0.82"/><path d="M216,292 L220,292 L230,852 L226,852 Z" fill="#a6a6cc" opacity="0.58"/><path d="M78,94 L83,94 L85,1085 L80,1085 Z" fill="#7a76aa" opacity="0.83"/><path d="M23,350 L31,350 L29,1124 L20,1124 Z" fill="#605c90" opacity="0.87"/><path d="M151,204 L158,204 L166,790 L159,790 Z" fill="#b4b4d6" opacity="0.74"/><path d="M231,55 L235,55 L237,1102 L233,1102 Z" fill="#6e6a9c" opacity="0.63"/><path d="M156,306 L163,306 L149,835 L143,835 Z" fill="#605c90" opacity="0.58"/><path d="M17,176 L21,176 L19,794 L16,794 Z" fill="#6e6a9c" opacity="0.75"/><path d="M152,270 L159,270 L168,1015 L161,1015 Z" fill="#605c90" opacity="0.70"/><path d="M77,342 L84,342 L96,1262 L89,1262 Z" fill="#605c90" opacity="0.58"/><path d="M135,153 L141,153 L133,944 L127,944 Z" fill="#9c9ac4" opacity="0.53"/><path d="M200,350 L208,350 L213,860 L204,860 Z" fill="#9c9ac4" opacity="0.65"/><path d="M79,182 L83,182 L80,1168 L76,1168 Z" fill="#6e6a9c" opacity="0.69"/><path d="M293,63 L302,63 L299,1004 L290,1004 Z" fill="#605c90" opacity="0.67"/><path d="M109,143 L112,143 L111,956 L107,956 Z" fill="#b4b4d6" opacity="0.51"/><path d="M101,200 L109,200 L123,813 L116,813 Z" fill="#a6a6cc" opacity="0.54"/><path d="M82,304 L86,304 L95,921 L92,921 Z" fill="#a6a6cc" opacity="0.84"/><path d="M202,158 L211,158 L213,1059 L204,1059 Z" fill="#605c90" opacity="0.78"/><path d="M31,268 L34,268 L28,1001 L24,1001 Z" fill="#6e6a9c" opacity="0.51"/><path d="M31,237 L36,237 L46,896 L42,896 Z" fill="#7a76aa" opacity="0.68"/><path d="M104,361 L111,361 L97,919 L90,919 Z" fill="#a6a6cc" opacity="0.78"/><path d="M278,102 L288,102 L292,874 L282,874 Z" fill="#7a76aa" opacity="0.71"/><path d="M65,262 L71,262 L86,921 L80,921 Z" fill="#6e6a9c" opacity="0.51"/><path d="M10,381 L17,381 L30,1047 L23,1047 Z" fill="#a6a6cc" opacity="0.54"/><path d="M243,193 L249,193 L263,1214 L257,1214 Z" fill="#b4b4d6" opacity="0.62"/><path d="M68,77 L72,77 L76,1239 L72,1239 Z" fill="#9c9ac4" opacity="0.66"/><path d="M106,51 L110,51 L121,817 L118,817 Z" fill="#9c9ac4" opacity="0.67"/><path d="M21,149 L29,149 L32,1043 L24,1043 Z" fill="#7a76aa" opacity="0.78"/><path d="M18,105 L22,105 L36,782 L32,782 Z" fill="#7a76aa" opacity="0.89"/><path d="M164,377 L169,377 L159,941 L155,941 Z" fill="#7a76aa" opacity="0.63"/><path d="M29,256 L34,256 L22,909 L17,909 Z" fill="#6e6a9c" opacity="0.83"/><path d="M47,154 L54,154 L46,936 L39,936 Z" fill="#9c9ac4" opacity="0.73"/><path d="M159,256 L167,256 L164,1152 L156,1152 Z" fill="#605c90" opacity="0.63"/><path d="M292,282 L296,282 L305,1114 L301,1114 Z" fill="#6e6a9c" opacity="0.79"/><path d="M154,273 L160,273 L168,1043 L162,1043 Z" fill="#605c90" opacity="0.73"/><path d="M242,268 L245,268 L250,1195 L247,1195 Z" fill="#9c9ac4" opacity="0.78"/><path d="M72,52 L75,52 L71,968 L68,968 Z" fill="#6e6a9c" opacity="0.68"/>
<rect x="430" y="0" width="190" height="420" fill="#a4aad0"/><path d="M466,76 L470,76 L483,313 L480,313 Z" fill="#b8c4dc" opacity="0.75"/><path d="M479,40 L487,40 L493,298 L485,298 Z" fill="#8a88b4" opacity="0.74"/><path d="M580,8 L589,8 L589,391 L579,391 Z" fill="#8a88b4" opacity="0.88"/><path d="M607,32 L613,32 L602,324 L596,324 Z" fill="#b8c4dc" opacity="0.70"/><path d="M432,38 L441,38 L444,368 L435,368 Z" fill="#8a88b4" opacity="0.63"/><path d="M489,99 L495,99 L492,265 L486,265 Z" fill="#8a88b4" opacity="0.56"/><path d="M506,61 L513,61 L528,343 L520,343 Z" fill="#8a88b4" opacity="0.85"/><path d="M614,11 L619,11 L633,268 L628,268 Z" fill="#b8c4dc" opacity="0.89"/><path d="M462,58 L466,58 L474,402 L470,402 Z" fill="#8a88b4" opacity="0.84"/><path d="M554,106 L557,106 L550,301 L547,301 Z" fill="#9a98c0" opacity="0.60"/><path d="M478,23 L484,23 L496,292 L490,292 Z" fill="#b8c4dc" opacity="0.73"/><path d="M491,125 L496,125 L501,337 L495,337 Z" fill="#8a88b4" opacity="0.54"/><path d="M516,1 L520,1 L530,400 L527,400 Z" fill="#8a88b4" opacity="0.87"/><path d="M438,15 L443,15 L433,284 L428,284 Z" fill="#9a98c0" opacity="0.53"/><path d="M525,76 L530,76 L543,382 L539,382 Z" fill="#9a98c0" opacity="0.54"/><path d="M541,27 L548,27 L535,314 L527,314 Z" fill="#8a88b4" opacity="0.90"/><path d="M437,115 L445,115 L443,389 L434,389 Z" fill="#b8c4dc" opacity="0.65"/><path d="M546,4 L549,4 L536,335 L532,335 Z" fill="#b8c4dc" opacity="0.54"/><path d="M504,81 L510,81 L507,267 L500,267 Z" fill="#8a88b4" opacity="0.61"/><path d="M614,53 L621,53 L623,261 L616,261 Z" fill="#9a98c0" opacity="0.64"/><path d="M507,126 L517,126 L513,313 L504,313 Z" fill="#8a88b4" opacity="0.66"/><path d="M605,20 L611,20 L608,271 L602,271 Z" fill="#8a88b4" opacity="0.85"/><path d="M516,2 L520,2 L529,345 L525,345 Z" fill="#9a98c0" opacity="0.66"/><path d="M537,93 L546,93 L540,281 L530,281 Z" fill="#b8c4dc" opacity="0.71"/><path d="M602,62 L606,62 L600,387 L596,387 Z" fill="#8a88b4" opacity="0.83"/>
<rect x="880" y="0" width="180" height="900" fill="#8e8ab8"/><path d="M889,143 L892,143 L877,628 L874,628 Z" fill="#7a76aa" opacity="0.82"/><path d="M1012,145 L1018,145 L1026,777 L1019,777 Z" fill="#6e6a9c" opacity="0.69"/><path d="M1022,63 L1031,63 L1039,812 L1030,812 Z" fill="#a6a6cc" opacity="0.89"/><path d="M967,129 L973,129 L976,786 L970,786 Z" fill="#6e6a9c" opacity="0.76"/><path d="M894,69 L898,69 L901,808 L897,808 Z" fill="#7a76aa" opacity="0.55"/><path d="M965,263 L971,263 L977,576 L970,576 Z" fill="#a6a6cc" opacity="0.62"/><path d="M971,126 L977,126 L968,583 L962,583 Z" fill="#605c90" opacity="0.89"/><path d="M1045,124 L1048,124 L1063,835 L1060,835 Z" fill="#b4b4d6" opacity="0.65"/><path d="M1041,20 L1051,20 L1052,573 L1042,573 Z" fill="#9c9ac4" opacity="0.88"/><path d="M903,137 L912,137 L908,859 L899,859 Z" fill="#9c9ac4" opacity="0.70"/><path d="M1034,43 L1040,43 L1038,882 L1033,882 Z" fill="#9c9ac4" opacity="0.62"/><path d="M905,85 L910,85 L905,842 L900,842 Z" fill="#6e6a9c" opacity="0.64"/><path d="M950,53 L960,53 L953,544 L944,544 Z" fill="#9c9ac4" opacity="0.65"/><path d="M949,159 L959,159 L967,670 L957,670 Z" fill="#b4b4d6" opacity="0.84"/><path d="M929,179 L933,179 L925,769 L922,769 Z" fill="#a6a6cc" opacity="0.61"/><path d="M970,101 L974,101 L984,884 L979,884 Z" fill="#6e6a9c" opacity="0.75"/><path d="M1041,148 L1050,148 L1063,799 L1054,799 Z" fill="#6e6a9c" opacity="0.66"/><path d="M988,235 L992,235 L981,715 L977,715 Z" fill="#605c90" opacity="0.69"/><path d="M940,200 L946,200 L943,891 L938,891 Z" fill="#7a76aa" opacity="0.60"/><path d="M965,32 L973,32 L964,772 L956,772 Z" fill="#6e6a9c" opacity="0.86"/><path d="M967,245 L972,245 L970,899 L965,899 Z" fill="#b4b4d6" opacity="0.72"/><path d="M923,150 L927,150 L920,655 L916,655 Z" fill="#7a76aa" opacity="0.73"/><path d="M1036,111 L1044,111 L1036,689 L1027,689 Z" fill="#605c90" opacity="0.61"/><path d="M1012,155 L1019,155 L1019,670 L1012,670 Z" fill="#9c9ac4" opacity="0.75"/><path d="M1032,73 L1036,73 L1041,629 L1036,629 Z" fill="#b4b4d6" opacity="0.67"/><path d="M935,261 L944,261 L950,586 L941,586 Z" fill="#b4b4d6" opacity="0.86"/><path d="M963,0 L970,0 L981,681 L974,681 Z" fill="#605c90" opacity="0.89"/><path d="M924,42 L927,42 L916,728 L912,728 Z" fill="#9c9ac4" opacity="0.83"/><path d="M1003,242 L1012,242 L997,571 L988,571 Z" fill="#6e6a9c" opacity="0.55"/><path d="M980,193 L983,193 L976,886 L973,886 Z" fill="#9c9ac4" opacity="0.75"/><path d="M1003,19 L1007,19 L997,729 L994,729 Z" fill="#605c90" opacity="0.60"/><path d="M1019,145 L1022,145 L1036,899 L1033,899 Z" fill="#7a76aa" opacity="0.76"/><path d="M1036,63 L1042,63 L1048,629 L1042,629 Z" fill="#b4b4d6" opacity="0.62"/><path d="M884,182 L890,182 L882,691 L876,691 Z" fill="#7a76aa" opacity="0.67"/><path d="M945,188 L952,188 L957,799 L951,799 Z" fill="#7a76aa" opacity="0.58"/><path d="M1020,136 L1028,136 L1023,614 L1015,614 Z" fill="#a6a6cc" opacity="0.83"/><path d="M921,205 L925,205 L925,646 L920,646 Z" fill="#605c90" opacity="0.57"/><path d="M919,180 L925,180 L938,882 L932,882 Z" fill="#a6a6cc" opacity="0.52"/><path d="M884,112 L891,112 L888,796 L881,796 Z" fill="#a6a6cc" opacity="0.86"/><path d="M1036,269 L1044,269 L1034,875 L1026,875 Z" fill="#7a76aa" opacity="0.76"/><path d="M972,84 L979,84 L993,801 L987,801 Z" fill="#7a76aa" opacity="0.68"/><path d="M899,22 L903,22 L905,691 L901,691 Z" fill="#6e6a9c" opacity="0.80"/><path d="M947,83 L955,83 L942,829 L933,829 Z" fill="#6e6a9c" opacity="0.69"/><path d="M946,52 L955,52 L941,671 L932,671 Z" fill="#b4b4d6" opacity="0.66"/><path d="M1023,11 L1031,11 L1040,553 L1032,553 Z" fill="#6e6a9c" opacity="0.52"/>
<rect x="860" y="880" width="200" height="390" fill="#8d89c6"/>
<rect x="5" y="1020" width="95" height="250" fill="#8a3a30"/>
<rect x="5" y="1255" width="1055" height="200" fill="#6e665a"/>
<rect x="300" y="1370" width="600" height="85" fill="#8c8890"/>
<!-- left side -->
<rect x="100" y="300" width="140" height="310" fill="#2c4d6a"/>
<rect x="100" y="600" width="140" height="150" fill="#7a3a2c"/>
<rect x="130" y="740" width="110" height="220" fill="#7b7068"/>
<rect x="100" y="950" width="140" height="330" fill="#2d5570"/>
<rect x="140" y="1030" width="80" height="230" fill="#a39a78"/>
<!-- tower -->
<polygon points="300,10 420,10 465,180 265,180" fill="#2b5868"/>
<rect x="315" y="5" width="95" height="40" fill="#2a3438"/>
<rect x="250" y="170" width="225" height="30" fill="#c5b88e"/>
<rect x="245" y="200" width="240" height="90" fill="#285a6e"/>
<path d="M310,280 Q370,190 430,280 Z" fill="#c8b890"/>
<rect x="200" y="272" width="330" height="40" fill="#6e5646"/>
<rect x="230" y="315" width="270" height="190" fill="#1f586c"/>
<rect x="235" y="320" width="35" height="180" fill="#c2b48a"/>
<rect x="462" y="320" width="35" height="180" fill="#c2b48a"/>
<path d="M325,480 L325,320 Q370,250 415,320 L415,480 Z" fill="#cfc2a0"/>
<path d="M340,465 L340,330 Q370,280 400,330 L400,465 Z" fill="#7fc2dc"/>
<rect x="190" y="495" width="350" height="70" fill="#8e7c64"/><rect x="190" y="497" width="350" height="18" fill="#b8a684"/>
<rect x="230" y="565" width="270" height="310" fill="#1d5468"/>
<rect x="235" y="570" width="38" height="300" fill="#c8b890"/>
<rect x="455" y="570" width="40" height="300" fill="#c8b890"/>
<path d="M310,620 Q365,570 425,620 L420,640 L315,640 Z" fill="#c4b08c"/>
<rect x="325" y="635" width="80" height="180" fill="#d2d4c8"/>
<rect x="338" y="648" width="55" height="160" fill="#b8d0d8"/>
<rect x="300" y="812" width="175" height="60" fill="#a29c80"/>
<rect x="225" y="870" width="285" height="80" fill="#7e6a58"/>
<rect x="240" y="945" width="255" height="315" fill="#b7a98c"/>
<rect x="295" y="985" width="135" height="270" fill="#d9cba8"/>
<rect x="305" y="995" width="118" height="255" fill="url(#i1door)"/>
<rect x="275" y="1250" width="235" height="120" fill="#3c3c4c"/>
<rect x="290" y="1280" width="205" height="8" fill="#a09a90"/>
<rect x="290" y="1315" width="205" height="8" fill="#a09a90"/>
<rect x="290" y="1345" width="205" height="8" fill="#a09a90"/>
<rect x="255" y="1280" width="20" height="90" fill="#d0c8a0"/>
<rect x="510" y="1280" width="20" height="90" fill="#d0c8a0"/>
<!-- right wing -->
<rect x="500" y="355" width="330" height="45" fill="#7d5c48"/>
<polygon points="500,395 830,395 860,585 495,585" fill="#21506a"/>
<path d="M590,560 L590,500 Q660,400 735,500 L735,560 Z" fill="#c8b890"/>
<path d="M612,555 L612,505 Q660,440 712,505 L712,555 Z" fill="#39434c"/>
<rect x="495" y="570" width="410" height="48" fill="#7e6c58"/><rect x="495" y="600" width="370" height="12" fill="#b8a684"/>
<rect x="495" y="615" width="370" height="240" fill="#1b5a70"/>
<rect x="820" y="615" width="40" height="240" fill="#c0b08a"/>
<rect x="512" y="645" width="120" height="22" fill="#c4b58f"/>
<rect x="690" y="645" width="110" height="22" fill="#c4b58f"/>
<rect x="527" y="665" width="90" height="175" fill="#cdbf98"/>
<rect x="540" y="678" width="62" height="155" fill="#8ec9e0"/>
<rect x="700" y="665" width="88" height="175" fill="#cdbf98"/>
<rect x="713" y="678" width="60" height="155" fill="#8ec9e0"/>
<rect x="495" y="830" width="370" height="60" fill="#a29c80"/>
<rect x="490" y="885" width="425" height="75" fill="#76665a"/><rect x="495" y="935" width="380" height="15" fill="#b8a888"/>
<rect x="495" y="950" width="385" height="310" fill="#1c5a70"/>
<rect x="830" y="955" width="45" height="220" fill="#b8aa88"/>
<rect x="525" y="968" width="80" height="195" fill="#cbbf9c"/>
<rect x="540" y="982" width="52" height="175" fill="#d8dfe0"/>
<rect x="703" y="968" width="80" height="195" fill="#cbbf9c"/>
<rect x="718" y="982" width="52" height="175" fill="#d8dfe0"/>
<rect x="495" y="1160" width="385" height="80" fill="#b4ad94"/>
<rect x="495" y="1238" width="390" height="30" fill="#6e6a68"/>
</svg>
</div>
<div class="cell" style="left:7px;top:374px"><svg style="position:absolute;left:48px;top:0;width:265px;height:362px" viewBox="0 0 1065 1455">
<rect x="5" y="0" width="1055" height="1455" fill="#97a9ae"/>
<!-- trees -->
<path d="M5,0 L290,0 Q300,120 240,200 Q280,300 210,440 L5,470 Z" fill="#34403a"/>
<path d="M5,480 Q120,520 160,600 Q300,640 350,800 Q330,900 280,980 L200,1080 L5,1090 Z" fill="#3c5434"/>
<path d="M40,640 Q150,660 220,760 Q250,880 150,960 L40,960 Z" fill="#5a7a48"/>
<path d="M760,0 L1060,0 L1060,790 Q990,760 950,660 Q880,560 920,470 Q850,400 830,250 Q690,150 760,0 Z" fill="#4a5a4a"/><path d="M880,0 L1060,0 L1060,500 Q980,400 960,250 Q880,150 880,0 Z" fill="#3a4a3a"/>
<path d="M840,120 Q900,100 940,200 Q950,300 900,330 Q850,300 840,120 Z" fill="#7e8e86"/>
<path d="M440,0 L610,0 Q590,60 520,70 Q450,60 440,0 Z" fill="#3f4e3e"/>
<!-- background right building --><defs><clipPath id="t2"><path d="M5,0 L290,0 Q300,120 240,200 Q280,300 210,440 L5,470 Z"/><path d="M5,480 Q120,520 160,600 Q300,640 350,800 Q330,900 280,980 L200,1080 L5,1090 Z"/><path d="M760,0 L1060,0 L1060,790 Q990,760 950,660 Q880,560 920,470 Q850,400 830,250 Q690,150 760,0 Z"/><path d="M880,0 L1060,0 L1060,500 Q980,400 960,250 Q880,150 880,0 Z"/></clipPath></defs><g clip-path="url(#t2)"><ellipse cx="179" cy="759" rx="34" ry="25" fill="#3e4e3c" opacity="0.85"/><ellipse cx="506" cy="1060" rx="21" ry="16" fill="#8a9a90" opacity="0.45"/><ellipse cx="396" cy="644" rx="17" ry="15" fill="#3e4e3c" opacity="0.82"/><ellipse cx="737" cy="481" rx="45" ry="40" fill="#7a8a7a" opacity="0.70"/><ellipse cx="41" cy="362" rx="30" ry="17" fill="#56684c" opacity="0.46"/><ellipse cx="787" cy="97" rx="39" ry="20" fill="#3e4e3c" opacity="0.67"/><ellipse cx="367" cy="533" rx="21" ry="11" fill="#8a9a90" opacity="0.78"/><ellipse cx="84" cy="217" rx="35" ry="32" fill="#22302a" opacity="0.75"/><ellipse cx="810" cy="639" rx="37" ry="21" fill="#7a8a7a" opacity="0.67"/><ellipse cx="414" cy="375" rx="19" ry="15" fill="#56684c" opacity="0.60"/><ellipse cx="481" cy="424" rx="45" ry="31" fill="#2c3a2e" opacity="0.78"/><ellipse cx="173" cy="788" rx="44" ry="22" fill="#2c3a2e" opacity="0.67"/><ellipse cx="794" cy="244" rx="33" ry="26" fill="#4a5c40" opacity="0.50"/><ellipse cx="712" cy="689" rx="40" ry="27" fill="#8a9a90" opacity="0.69"/><ellipse cx="328" cy="114" rx="17" ry="15" fill="#8a9a90" opacity="0.62"/><ellipse cx="174" cy="40" rx="31" ry="25" fill="#3e4e3c" opacity="0.61"/><ellipse cx="1049" cy="1058" rx="33" ry="31" fill="#7a8a7a" opacity="0.65"/><ellipse cx="709" cy="1030" rx="22" ry="17" fill="#7a8a7a" opacity="0.77"/><ellipse cx="821" cy="531" rx="40" ry="21" fill="#56684c" opacity="0.71"/><ellipse cx="42" cy="273" rx="27" ry="25" fill="#22302a" opacity="0.81"/><ellipse cx="1043" cy="820" rx="29" ry="18" fill="#22302a" opacity="0.66"/><ellipse cx="774" cy="31" rx="21" ry="20" fill="#8a9a90" opacity="0.51"/><ellipse cx="394" cy="850" rx="30" ry="28" fill="#7a8a7a" opacity="0.57"/><ellipse cx="569" cy="304" rx="38" ry="19" fill="#22302a" opacity="0.50"/><ellipse cx="760" cy="291" rx="25" ry="15" fill="#4a5c40" opacity="0.62"/><ellipse cx="726" cy="827" rx="39" ry="22" fill="#3e4e3c" opacity="0.49"/><ellipse cx="104" cy="28" rx="28" ry="16" fill="#8a9a90" opacity="0.50"/><ellipse cx="302" cy="334" rx="43" ry="30" fill="#3e4e3c" opacity="0.70"/><ellipse cx="197" cy="943" rx="21" ry="18" fill="#8a9a90" opacity="0.47"/><ellipse cx="755" cy="961" rx="38" ry="34" fill="#2c3a2e" opacity="0.61"/><ellipse cx="917" cy="438" rx="32" ry="30" fill="#3e4e3c" opacity="0.55"/><ellipse cx="740" cy="345" rx="16" ry="11" fill="#56684c" opacity="0.74"/><ellipse cx="1050" cy="899" rx="39" ry="29" fill="#4a5c40" opacity="0.49"/><ellipse cx="639" cy="559" rx="37" ry="36" fill="#56684c" opacity="0.57"/><ellipse cx="664" cy="834" rx="21" ry="17" fill="#56684c" opacity="0.84"/><ellipse cx="380" cy="350" rx="45" ry="25" fill="#2c3a2e" opacity="0.71"/><ellipse cx="666" cy="888" rx="44" ry="33" fill="#2c3a2e" opacity="0.72"/><ellipse cx="749" cy="518" rx="30" ry="29" fill="#2c3a2e" opacity="0.54"/><ellipse cx="57" cy="477" rx="22" ry="19" fill="#8a9a90" opacity="0.61"/><ellipse cx="456" cy="877" rx="27" ry="18" fill="#3e4e3c" opacity="0.70"/><ellipse cx="1021" cy="94" rx="29" ry="22" fill="#22302a" opacity="0.69"/><ellipse cx="233" cy="495" rx="34" ry="28" fill="#22302a" opacity="0.79"/><ellipse cx="742" cy="751" rx="22" ry="21" fill="#7a8a7a" opacity="0.57"/><ellipse cx="408" cy="577" rx="36" ry="35" fill="#3e4e3c" opacity="0.58"/><ellipse cx="334" cy="430" rx="19" ry="15" fill="#2c3a2e" opacity="0.66"/><ellipse cx="659" cy="413" rx="37" ry="37" fill="#3e4e3c" opacity="0.73"/><ellipse cx="222" cy="369" rx="34" ry="29" fill="#56684c" opacity="0.48"/><ellipse cx="35" cy="566" rx="43" ry="43" fill="#22302a" opacity="0.65"/><ellipse cx="256" cy="757" rx="36" ry="21" fill="#7a8a7a" opacity="0.64"/><ellipse cx="466" cy="679" rx="23" ry="14" fill="#7a8a7a" opacity="0.70"/><ellipse cx="109" cy="1073" rx="21" ry="14" fill="#22302a" opacity="0.82"/><ellipse cx="748" cy="21" rx="30" ry="16" fill="#4a5c40" opacity="0.63"/><ellipse cx="479" cy="1090" rx="43" ry="25" fill="#56684c" opacity="0.53"/><ellipse cx="396" cy="3" rx="20" ry="16" fill="#8a9a90" opacity="0.62"/><ellipse cx="892" cy="340" rx="28" ry="26" fill="#3e4e3c" opacity="0.54"/><ellipse cx="852" cy="928" rx="43" ry="40" fill="#2c3a2e" opacity="0.71"/><ellipse cx="82" cy="479" rx="40" ry="40" fill="#22302a" opacity="0.53"/><ellipse cx="68" cy="897" rx="33" ry="27" fill="#7a8a7a" opacity="0.72"/><ellipse cx="718" cy="168" rx="20" ry="13" fill="#22302a" opacity="0.70"/><ellipse cx="944" cy="78" rx="17" ry="13" fill="#22302a" opacity="0.78"/><ellipse cx="385" cy="388" rx="20" ry="16" fill="#56684c" opacity="0.72"/><ellipse cx="694" cy="174" rx="18" ry="17" fill="#4a5c40" opacity="0.55"/><ellipse cx="215" cy="213" rx="44" ry="31" fill="#56684c" opacity="0.78"/><ellipse cx="230" cy="45" rx="26" ry="20" fill="#22302a" opacity="0.71"/><ellipse cx="27" cy="405" rx="29" ry="27" fill="#7a8a7a" opacity="0.77"/><ellipse cx="961" cy="747" rx="22" ry="19" fill="#4a5c40" opacity="0.66"/><ellipse cx="963" cy="1067" rx="27" ry="26" fill="#22302a" opacity="0.77"/><ellipse cx="17" cy="387" rx="33" ry="27" fill="#8a9a90" opacity="0.60"/><ellipse cx="795" cy="201" rx="44" ry="33" fill="#7a8a7a" opacity="0.53"/><ellipse cx="1058" cy="610" rx="38" ry="33" fill="#56684c" opacity="0.81"/><ellipse cx="258" cy="659" rx="26" ry="21" fill="#8a9a90" opacity="0.59"/><ellipse cx="143" cy="30" rx="28" ry="22" fill="#2c3a2e" opacity="0.84"/><ellipse cx="786" cy="816" rx="21" ry="16" fill="#56684c" opacity="0.81"/><ellipse cx="547" cy="135" rx="22" ry="16" fill="#22302a" opacity="0.64"/><ellipse cx="527" cy="210" rx="21" ry="13" fill="#8a9a90" opacity="0.60"/><ellipse cx="522" cy="292" rx="31" ry="23" fill="#2c3a2e" opacity="0.77"/><ellipse cx="360" cy="484" rx="24" ry="14" fill="#3e4e3c" opacity="0.85"/><ellipse cx="403" cy="433" rx="15" ry="13" fill="#4a5c40" opacity="0.57"/><ellipse cx="883" cy="504" rx="30" ry="28" fill="#4a5c40" opacity="0.77"/><ellipse cx="514" cy="60" rx="26" ry="24" fill="#7a8a7a" opacity="0.58"/><ellipse cx="379" cy="619" rx="28" ry="24" fill="#2c3a2e" opacity="0.80"/><ellipse cx="798" cy="412" rx="23" ry="20" fill="#8a9a90" opacity="0.50"/><ellipse cx="949" cy="655" rx="25" ry="23" fill="#22302a" opacity="0.57"/><ellipse cx="674" cy="161" rx="40" ry="25" fill="#22302a" opacity="0.70"/><ellipse cx="687" cy="565" rx="19" ry="17" fill="#7a8a7a" opacity="0.54"/><ellipse cx="729" cy="369" rx="34" ry="24" fill="#3e4e3c" opacity="0.79"/><ellipse cx="304" cy="289" rx="40" ry="21" fill="#8a9a90" opacity="0.80"/><ellipse cx="696" cy="23" rx="37" ry="29" fill="#7a8a7a" opacity="0.65"/><ellipse cx="572" cy="604" rx="28" ry="14" fill="#56684c" opacity="0.51"/><ellipse cx="429" cy="488" rx="34" ry="30" fill="#4a5c40" opacity="0.54"/><ellipse cx="838" cy="22" rx="34" ry="25" fill="#3e4e3c" opacity="0.76"/><ellipse cx="957" cy="824" rx="25" ry="15" fill="#2c3a2e" opacity="0.77"/><ellipse cx="350" cy="361" rx="21" ry="11" fill="#3e4e3c" opacity="0.53"/><ellipse cx="16" cy="174" rx="20" ry="15" fill="#3e4e3c" opacity="0.66"/><ellipse cx="127" cy="446" rx="38" ry="23" fill="#22302a" opacity="0.53"/><ellipse cx="24" cy="858" rx="22" ry="17" fill="#3e4e3c" opacity="0.53"/><ellipse cx="613" cy="900" rx="31" ry="25" fill="#2c3a2e" opacity="0.61"/><ellipse cx="1017" cy="887" rx="36" ry="34" fill="#7a8a7a" opacity="0.46"/><ellipse cx="531" cy="981" rx="38" ry="30" fill="#3e4e3c" opacity="0.47"/><ellipse cx="681" cy="857" rx="23" ry="17" fill="#56684c" opacity="0.66"/><ellipse cx="178" cy="375" rx="35" ry="29" fill="#7a8a7a" opacity="0.82"/><ellipse cx="314" cy="127" rx="33" ry="24" fill="#8a9a90" opacity="0.77"/><ellipse cx="800" cy="164" rx="24" ry="13" fill="#22302a" opacity="0.72"/><ellipse cx="961" cy="54" rx="37" ry="34" fill="#4a5c40" opacity="0.73"/><ellipse cx="667" cy="521" rx="32" ry="22" fill="#3e4e3c" opacity="0.47"/><ellipse cx="666" cy="669" rx="28" ry="25" fill="#2c3a2e" opacity="0.62"/><ellipse cx="216" cy="35" rx="21" ry="20" fill="#56684c" opacity="0.46"/><ellipse cx="821" cy="935" rx="44" ry="27" fill="#56684c" opacity="0.66"/><ellipse cx="401" cy="308" rx="33" ry="30" fill="#22302a" opacity="0.60"/><ellipse cx="156" cy="405" rx="42" ry="35" fill="#56684c" opacity="0.72"/><ellipse cx="820" cy="743" rx="44" ry="41" fill="#3e4e3c" opacity="0.74"/><ellipse cx="326" cy="616" rx="40" ry="35" fill="#22302a" opacity="0.61"/><ellipse cx="665" cy="300" rx="23" ry="21" fill="#4a5c40" opacity="0.76"/><ellipse cx="248" cy="133" rx="16" ry="10" fill="#7a8a7a" opacity="0.84"/><ellipse cx="532" cy="772" rx="30" ry="30" fill="#22302a" opacity="0.81"/><ellipse cx="407" cy="1021" rx="38" ry="29" fill="#2c3a2e" opacity="0.50"/><ellipse cx="9" cy="102" rx="29" ry="25" fill="#2c3a2e" opacity="0.48"/><ellipse cx="351" cy="194" rx="32" ry="27" fill="#8a9a90" opacity="0.73"/><ellipse cx="441" cy="431" rx="37" ry="21" fill="#56684c" opacity="0.45"/><ellipse cx="437" cy="871" rx="41" ry="30" fill="#56684c" opacity="0.80"/><ellipse cx="285" cy="384" rx="31" ry="26" fill="#22302a" opacity="0.59"/><ellipse cx="672" cy="900" rx="23" ry="21" fill="#2c3a2e" opacity="0.84"/><ellipse cx="51" cy="868" rx="36" ry="27" fill="#2c3a2e" opacity="0.77"/><ellipse cx="188" cy="631" rx="32" ry="29" fill="#8a9a90" opacity="0.58"/><ellipse cx="762" cy="668" rx="21" ry="12" fill="#22302a" opacity="0.57"/><ellipse cx="272" cy="238" rx="27" ry="24" fill="#8a9a90" opacity="0.57"/><ellipse cx="984" cy="45" rx="24" ry="15" fill="#8a9a90" opacity="0.62"/><ellipse cx="928" cy="1096" rx="18" ry="17" fill="#7a8a7a" opacity="0.63"/><ellipse cx="736" cy="863" rx="21" ry="17" fill="#2c3a2e" opacity="0.80"/><ellipse cx="967" cy="93" rx="36" ry="27" fill="#3e4e3c" opacity="0.78"/><ellipse cx="964" cy="678" rx="15" ry="13" fill="#56684c" opacity="0.66"/><ellipse cx="766" cy="2" rx="42" ry="39" fill="#7a8a7a" opacity="0.49"/><ellipse cx="435" cy="1082" rx="41" ry="37" fill="#7a8a7a" opacity="0.75"/><ellipse cx="202" cy="328" rx="38" ry="23" fill="#2c3a2e" opacity="0.82"/><ellipse cx="155" cy="1010" rx="35" ry="27" fill="#8a9a90" opacity="0.59"/><ellipse cx="572" cy="128" rx="31" ry="16" fill="#2c3a2e" opacity="0.71"/><ellipse cx="942" cy="506" rx="29" ry="22" fill="#3e4e3c" opacity="0.71"/><ellipse cx="504" cy="849" rx="36" ry="23" fill="#4a5c40" opacity="0.69"/><ellipse cx="515" cy="462" rx="22" ry="21" fill="#8a9a90" opacity="0.56"/><ellipse cx="714" cy="1075" rx="31" ry="29" fill="#2c3a2e" opacity="0.83"/><ellipse cx="201" cy="916" rx="29" ry="23" fill="#56684c" opacity="0.55"/><ellipse cx="276" cy="952" rx="34" ry="28" fill="#2c3a2e" opacity="0.79"/><ellipse cx="599" cy="69" rx="45" ry="26" fill="#2c3a2e" opacity="0.65"/><ellipse cx="590" cy="1067" rx="38" ry="24" fill="#7a8a7a" opacity="0.73"/><ellipse cx="1056" cy="932" rx="27" ry="22" fill="#3e4e3c" opacity="0.62"/><ellipse cx="21" cy="321" rx="26" ry="16" fill="#22302a" opacity="0.71"/><ellipse cx="280" cy="793" rx="35" ry="24" fill="#56684c" opacity="0.68"/><ellipse cx="948" cy="66" rx="26" ry="18" fill="#56684c" opacity="0.66"/><ellipse cx="547" cy="290" rx="20" ry="19" fill="#8a9a90" opacity="0.52"/><ellipse cx="358" cy="876" rx="22" ry="19" fill="#3e4e3c" opacity="0.58"/><ellipse cx="560" cy="1011" rx="33" ry="17" fill="#2c3a2e" opacity="0.79"/><ellipse cx="512" cy="945" rx="33" ry="19" fill="#7a8a7a" opacity="0.60"/><ellipse cx="324" cy="864" rx="44" ry="25" fill="#4a5c40" opacity="0.60"/><ellipse cx="665" cy="180" rx="39" ry="27" fill="#2c3a2e" opacity="0.72"/><ellipse cx="221" cy="565" rx="20" ry="11" fill="#56684c" opacity="0.47"/><ellipse cx="1024" cy="881" rx="25" ry="18" fill="#22302a" opacity="0.64"/><ellipse cx="94" cy="800" rx="27" ry="24" fill="#4a5c40" opacity="0.68"/><ellipse cx="160" cy="568" rx="18" ry="16" fill="#7a8a7a" opacity="0.61"/><ellipse cx="697" cy="898" rx="38" ry="36" fill="#8a9a90" opacity="0.47"/><ellipse cx="262" cy="1000" rx="38" ry="33" fill="#4a5c40" opacity="0.56"/><ellipse cx="503" cy="299" rx="39" ry="28" fill="#8a9a90" opacity="0.83"/><ellipse cx="783" cy="478" rx="42" ry="40" fill="#8a9a90" opacity="0.53"/><ellipse cx="387" cy="867" rx="38" ry="24" fill="#7a8a7a" opacity="0.46"/><ellipse cx="670" cy="1080" rx="17" ry="10" fill="#7a8a7a" opacity="0.83"/><ellipse cx="500" cy="869" rx="44" ry="29" fill="#3e4e3c" opacity="0.66"/><ellipse cx="85" cy="934" rx="20" ry="18" fill="#2c3a2e" opacity="0.53"/><ellipse cx="668" cy="583" rx="44" ry="33" fill="#7a8a7a" opacity="0.49"/><ellipse cx="550" cy="990" rx="18" ry="14" fill="#22302a" opacity="0.84"/><ellipse cx="525" cy="458" rx="22" ry="14" fill="#3e4e3c" opacity="0.46"/><ellipse cx="689" cy="223" rx="25" ry="17" fill="#22302a" opacity="0.74"/><ellipse cx="604" cy="1020" rx="23" ry="13" fill="#4a5c40" opacity="0.82"/><ellipse cx="930" cy="839" rx="16" ry="14" fill="#8a9a90" opacity="0.55"/><ellipse cx="517" cy="421" rx="25" ry="17" fill="#7a8a7a" opacity="0.75"/><ellipse cx="292" cy="21" rx="42" ry="22" fill="#7a8a7a" opacity="0.67"/><ellipse cx="627" cy="347" rx="36" ry="31" fill="#2c3a2e" opacity="0.68"/><ellipse cx="290" cy="691" rx="17" ry="14" fill="#56684c" opacity="0.52"/><ellipse cx="49" cy="1055" rx="42" ry="33" fill="#8a9a90" opacity="0.56"/><ellipse cx="900" cy="428" rx="31" ry="27" fill="#2c3a2e" opacity="0.55"/><ellipse cx="737" cy="860" rx="39" ry="26" fill="#7a8a7a" opacity="0.64"/><ellipse cx="966" cy="78" rx="44" ry="38" fill="#56684c" opacity="0.55"/><ellipse cx="707" cy="239" rx="20" ry="15" fill="#22302a" opacity="0.70"/><ellipse cx="422" cy="638" rx="15" ry="8" fill="#56684c" opacity="0.83"/><ellipse cx="81" cy="198" rx="40" ry="23" fill="#22302a" opacity="0.68"/><ellipse cx="509" cy="702" rx="40" ry="24" fill="#56684c" opacity="0.79"/><ellipse cx="336" cy="951" rx="19" ry="13" fill="#7a8a7a" opacity="0.72"/><ellipse cx="300" cy="396" rx="26" ry="24" fill="#4a5c40" opacity="0.52"/><ellipse cx="899" cy="375" rx="31" ry="30" fill="#56684c" opacity="0.55"/><ellipse cx="278" cy="596" rx="40" ry="25" fill="#4a5c40" opacity="0.58"/><ellipse cx="169" cy="10" rx="33" ry="26" fill="#8a9a90" opacity="0.63"/><ellipse cx="526" cy="466" rx="40" ry="23" fill="#4a5c40" opacity="0.62"/><ellipse cx="727" cy="251" rx="31" ry="31" fill="#4a5c40" opacity="0.47"/><ellipse cx="513" cy="1040" rx="44" ry="32" fill="#56684c" opacity="0.62"/><ellipse cx="136" cy="988" rx="23" ry="15" fill="#8a9a90" opacity="0.72"/><ellipse cx="76" cy="368" rx="37" ry="25" fill="#3e4e3c" opacity="0.84"/><ellipse cx="912" cy="393" rx="40" ry="24" fill="#22302a" opacity="0.65"/><ellipse cx="1034" cy="894" rx="37" ry="27" fill="#4a5c40" opacity="0.48"/><ellipse cx="186" cy="389" rx="20" ry="14" fill="#4a5c40" opacity="0.79"/><ellipse cx="586" cy="1094" rx="29" ry="29" fill="#2c3a2e" opacity="0.53"/><ellipse cx="332" cy="675" rx="22" ry="11" fill="#56684c" opacity="0.60"/><ellipse cx="719" cy="876" rx="33" ry="17" fill="#22302a" opacity="0.75"/><ellipse cx="415" cy="491" rx="39" ry="36" fill="#22302a" opacity="0.74"/><ellipse cx="81" cy="228" rx="36" ry="34" fill="#2c3a2e" opacity="0.84"/><ellipse cx="724" cy="175" rx="21" ry="15" fill="#4a5c40" opacity="0.48"/><ellipse cx="945" cy="540" rx="33" ry="19" fill="#22302a" opacity="0.62"/><ellipse cx="628" cy="152" rx="35" ry="17" fill="#2c3a2e" opacity="0.68"/><ellipse cx="685" cy="379" rx="38" ry="25" fill="#4a5c40" opacity="0.82"/><ellipse cx="807" cy="950" rx="30" ry="20" fill="#7a8a7a" opacity="0.59"/><ellipse cx="423" cy="788" rx="23" ry="18" fill="#7a8a7a" opacity="0.62"/><ellipse cx="998" cy="45" rx="22" ry="11" fill="#56684c" opacity="0.81"/><ellipse cx="677" cy="505" rx="17" ry="14" fill="#8a9a90" opacity="0.66"/><ellipse cx="410" cy="694" rx="42" ry="34" fill="#2c3a2e" opacity="0.57"/><ellipse cx="512" cy="838" rx="41" ry="38" fill="#56684c" opacity="0.45"/><ellipse cx="1049" cy="373" rx="44" ry="22" fill="#22302a" opacity="0.73"/><ellipse cx="155" cy="344" rx="19" ry="13" fill="#3e4e3c" opacity="0.59"/><ellipse cx="215" cy="804" rx="19" ry="18" fill="#4a5c40" opacity="0.77"/><ellipse cx="542" cy="285" rx="32" ry="19" fill="#2c3a2e" opacity="0.84"/><ellipse cx="386" cy="478" rx="24" ry="16" fill="#56684c" opacity="0.81"/><ellipse cx="843" cy="236" rx="22" ry="16" fill="#56684c" opacity="0.52"/><ellipse cx="305" cy="929" rx="20" ry="19" fill="#3e4e3c" opacity="0.62"/><ellipse cx="443" cy="719" rx="23" ry="18" fill="#3e4e3c" opacity="0.61"/><ellipse cx="411" cy="482" rx="20" ry="16" fill="#8a9a90" opacity="0.85"/><ellipse cx="251" cy="1049" rx="28" ry="19" fill="#7a8a7a" opacity="0.50"/><ellipse cx="601" cy="931" rx="43" ry="34" fill="#56684c" opacity="0.53"/><ellipse cx="714" cy="772" rx="17" ry="9" fill="#4a5c40" opacity="0.59"/><ellipse cx="49" cy="512" rx="18" ry="16" fill="#4a5c40" opacity="0.65"/><ellipse cx="541" cy="1093" rx="40" ry="26" fill="#4a5c40" opacity="0.77"/><ellipse cx="9" cy="797" rx="34" ry="31" fill="#7a8a7a" opacity="0.82"/><ellipse cx="1037" cy="145" rx="16" ry="14" fill="#3e4e3c" opacity="0.66"/><ellipse cx="924" cy="887" rx="21" ry="19" fill="#56684c" opacity="0.53"/><ellipse cx="958" cy="897" rx="19" ry="19" fill="#56684c" opacity="0.77"/><ellipse cx="199" cy="428" rx="30" ry="29" fill="#8a9a90" opacity="0.67"/><ellipse cx="903" cy="452" rx="40" ry="29" fill="#56684c" opacity="0.52"/><ellipse cx="486" cy="1019" rx="33" ry="29" fill="#22302a" opacity="0.76"/><ellipse cx="194" cy="407" rx="32" ry="22" fill="#2c3a2e" opacity="0.66"/><ellipse cx="975" cy="10" rx="39" ry="23" fill="#22302a" opacity="0.56"/><ellipse cx="355" cy="596" rx="44" ry="25" fill="#3e4e3c" opacity="0.77"/><ellipse cx="575" cy="350" rx="27" ry="20" fill="#56684c" opacity="0.46"/><ellipse cx="806" cy="1010" rx="36" ry="26" fill="#2c3a2e" opacity="0.69"/><ellipse cx="317" cy="1074" rx="25" ry="24" fill="#7a8a7a" opacity="0.64"/><ellipse cx="305" cy="243" rx="17" ry="9" fill="#3e4e3c" opacity="0.77"/><ellipse cx="82" cy="533" rx="36" ry="30" fill="#56684c" opacity="0.82"/><ellipse cx="426" cy="458" rx="40" ry="33" fill="#8a9a90" opacity="0.51"/><ellipse cx="927" cy="681" rx="32" ry="25" fill="#4a5c40" opacity="0.79"/><ellipse cx="658" cy="548" rx="22" ry="19" fill="#2c3a2e" opacity="0.74"/><ellipse cx="449" cy="815" rx="27" ry="26" fill="#3e4e3c" opacity="0.58"/><ellipse cx="723" cy="878" rx="39" ry="22" fill="#2c3a2e" opacity="0.63"/><ellipse cx="664" cy="256" rx="31" ry="31" fill="#2c3a2e" opacity="0.50"/><ellipse cx="524" cy="1028" rx="18" ry="14" fill="#2c3a2e" opacity="0.84"/><ellipse cx="6" cy="828" rx="38" ry="21" fill="#4a5c40" opacity="0.75"/><ellipse cx="970" cy="808" rx="40" ry="26" fill="#22302a" opacity="0.66"/><ellipse cx="247" cy="1012" rx="15" ry="14" fill="#56684c" opacity="0.65"/><ellipse cx="752" cy="522" rx="32" ry="27" fill="#22302a" opacity="0.79"/><ellipse cx="1019" cy="649" rx="43" ry="40" fill="#22302a" opacity="0.78"/><ellipse cx="289" cy="521" rx="34" ry="27" fill="#7a8a7a" opacity="0.80"/><ellipse cx="946" cy="830" rx="21" ry="14" fill="#2c3a2e" opacity="0.78"/><ellipse cx="329" cy="445" rx="31" ry="24" fill="#2c3a2e" opacity="0.82"/><ellipse cx="977" cy="848" rx="22" ry="14" fill="#7a8a7a" opacity="0.60"/><ellipse cx="857" cy="647" rx="20" ry="12" fill="#7a8a7a" opacity="0.46"/><ellipse cx="948" cy="205" rx="44" ry="33" fill="#4a5c40" opacity="0.62"/><ellipse cx="610" cy="948" rx="20" ry="11" fill="#2c3a2e" opacity="0.55"/></g>
<polygon points="860,990 1060,890 1060,1000 870,1000" fill="#c04838"/>
<rect x="865" y="995" width="195" height="265" fill="#a9aa9a"/>
<path d="M930,1100 Q1000,1020 1060,1060 L1060,1280 L940,1280 Z" fill="#5b6e48"/>
<!-- porch left --><rect x="5" y="1060" width="60" height="220" fill="#7a8078"/>
<rect x="55" y="1060" width="205" height="280" fill="#c9c6be"/>
<rect x="110" y="1060" width="50" height="280" fill="#e6e3dc"/>
<rect x="165" y="1120" width="35" height="60" fill="#4a4a48"/>
<rect x="165" y="920" width="110" height="90" fill="#d8d5ce"/>
<!-- hedges/lawn -->
<rect x="5" y="1255" width="1055" height="90" fill="#4e3c30"/>
<rect x="5" y="1330" width="1055" height="125" fill="#6b9656"/>
<polygon points="290,1360 520,1360 640,1455 330,1455" fill="#d2d3cb"/>
<!-- tower -->
<rect x="295" y="0" width="115" height="45" fill="#c98660"/>
<rect x="290" y="40" width="125" height="110" fill="#e4e1da"/>
<rect x="340" y="65" width="32" height="70" fill="#5a4a48"/>
<polygon points="255,150 470,150 490,275 210,275" fill="#e8e6e0"/>
<rect x="200" y="270" width="335" height="240" fill="#e9e7e1"/>
<rect x="220" y="300" width="40" height="200" fill="#cfccc4"/>
<rect x="440" y="300" width="40" height="200" fill="#cfccc4"/>
<path d="M330,500 L330,320 Q365,250 400,320 L400,500 Z" fill="#6e1a18"/>
<rect x="185" y="500" width="355" height="40" fill="#f0efea"/>
<rect x="190" y="540" width="300" height="335" fill="#e6e4de"/>
<rect x="265" y="600" width="45" height="270" fill="#d4d1ca"/>
<path d="M320,800 L320,660 Q370,570 425,660 L425,800 Z" fill="#8a1c1c"/>
<rect x="340" y="800" width="120" height="50" fill="#dedcd5"/>
<rect x="250" y="870" width="240" height="400" fill="#e4e2dc"/>
<path d="M300,1230 L300,1000 Q370,890 440,1000 L440,1230 Z" fill="#4e1c1c"/>
<rect x="300" y="1210" width="140" height="30" fill="#9a3a30"/>
<polygon points="305,1240 480,1240 510,1380 295,1380" fill="#e2dfda"/>
<rect x="255" y="1180" width="50" height="200" fill="#ecebe6"/>
<rect x="460" y="1180" width="50" height="200" fill="#ecebe6"/>
<!-- right wing -->
<polygon points="490,385 800,385 860,570 490,570" fill="#cc8c64"/>
<rect x="600" y="390" width="170" height="175" fill="#e2dfd8"/>
<path d="M660,555 L660,470 Q695,430 730,470 L730,555 Z" fill="#5a1818"/>
<rect x="650" y="340" width="30" height="45" fill="#b04848"/>
<rect x="490" y="565" width="420" height="45" fill="#f1f0ec"/>
<rect x="490" y="605" width="385" height="650" fill="#e5e3dd"/>
<rect x="538" y="660" width="75" height="175" fill="#8e1c1c"/>
<rect x="710" y="660" width="75" height="175" fill="#8e1c1c"/>
<rect x="490" y="830" width="380" height="50" fill="#efeee9"/>
<rect x="490" y="880" width="420" height="50" fill="#f3f2ee"/>
<rect x="538" y="960" width="75" height="205" fill="#8a1a1a"/>
<rect x="718" y="960" width="70" height="205" fill="#8a1a1a"/>
<rect x="490" y="1160" width="385" height="85" fill="#eeede8"/>
<rect x="490" y="1235" width="390" height="25" fill="#c5c3bc"/>
</svg>
</div>
<div class="cell" style="left:374px;top:374px"><svg style="position:absolute;left:48px;top:0;width:265px;height:362px" viewBox="0 0 1065 1455">
<defs><linearGradient id="i3sky" x1="0" y1="0" x2="0" y2="1"><stop offset="0" stop-color="#86b4e4"/><stop offset="1" stop-color="#a2c4e4"/></linearGradient></defs>
<rect x="5" y="0" width="1055" height="1455" fill="url(#i3sky)"/>
<path d="M795,0 L1060,0 L1060,1440 L990,1440 L985,560 Q900,520 880,420 Q820,300 800,150 Z" fill="#6c5c7a"/><path d="M890,520 Q960,560 1000,720 L1000,950 Q960,900 920,800 Q880,650 890,520 Z" fill="#7a6a88"/><rect x="995" y="540" width="65" height="900" fill="#4e3e50"/>
<path d="M840,40 L900,40 L930,300 L980,500 L950,500 Z" fill="#9a8ab0" opacity="0.6"/>
<path d="M960,80 L1000,80 L1020,450 L980,450 Z" fill="#504058" opacity="0.7"/>
<defs><clipPath id="t3"><path d="M795,0 L1060,0 L1060,1440 L990,1440 L985,560 Q900,520 880,420 Q820,300 800,150 Z"/><path d="M890,520 Q960,560 1000,720 L1000,950 Q960,900 920,800 Q880,650 890,520 Z"/><rect x="995" y="540" width="65" height="900"/></clipPath></defs><g clip-path="url(#t3)"><path d="M793,112 L804,112 L827,282 L816,282 Z" fill="#8a7aa0" opacity="0.71"/><path d="M982,140 L1000,140 L982,205 L964,205 Z" fill="#4a3a52" opacity="0.71"/><path d="M911,413 L929,413 L942,487 L924,487 Z" fill="#4a3a52" opacity="0.86"/><path d="M882,206 L893,206 L878,361 L868,361 Z" fill="#8a7aa0" opacity="0.59"/><path d="M948,547 L965,547 L947,742 L930,742 Z" fill="#5e4e6c" opacity="0.56"/><path d="M1005,376 L1012,376 L1020,521 L1012,521 Z" fill="#a094b8" opacity="0.59"/><path d="M1005,730 L1013,730 L1013,892 L1004,892 Z" fill="#8a7aa0" opacity="0.61"/><path d="M869,572 L881,572 L904,736 L892,736 Z" fill="#5e4e6c" opacity="0.89"/><path d="M1058,790 L1068,790 L1090,878 L1080,878 Z" fill="#3e3044" opacity="0.84"/><path d="M870,174 L876,174 L886,361 L879,361 Z" fill="#5e4e6c" opacity="0.54"/><path d="M898,910 L912,910 L892,1129 L878,1129 Z" fill="#8a7aa0" opacity="0.58"/><path d="M880,403 L887,403 L867,577 L860,577 Z" fill="#5e4e6c" opacity="0.89"/><path d="M822,194 L832,194 L831,368 L821,368 Z" fill="#8a7aa0" opacity="0.70"/><path d="M1003,278 L1013,278 L1018,436 L1007,436 Z" fill="#7a6a90" opacity="0.84"/><path d="M921,797 L934,797 L922,937 L909,937 Z" fill="#4a3a52" opacity="0.81"/><path d="M1056,349 L1062,349 L1059,469 L1053,469 Z" fill="#5e4e6c" opacity="0.90"/><path d="M826,567 L839,567 L853,775 L840,775 Z" fill="#8a7aa0" opacity="0.88"/><path d="M1024,689 L1037,689 L1038,839 L1025,839 Z" fill="#3e3044" opacity="0.84"/><path d="M898,524 L913,524 L929,658 L914,658 Z" fill="#7a6a90" opacity="0.63"/><path d="M890,523 L900,523 L910,613 L900,613 Z" fill="#5e4e6c" opacity="0.73"/><path d="M835,853 L842,853 L830,981 L822,981 Z" fill="#8a7aa0" opacity="0.85"/><path d="M845,890 L855,890 L867,1044 L857,1044 Z" fill="#5e4e6c" opacity="0.83"/><path d="M799,615 L816,615 L812,716 L796,716 Z" fill="#8a7aa0" opacity="0.78"/><path d="M847,33 L858,33 L844,207 L833,207 Z" fill="#8a7aa0" opacity="0.64"/><path d="M978,368 L994,368 L1013,439 L998,439 Z" fill="#8a7aa0" opacity="0.78"/><path d="M1030,452 L1044,452 L1020,617 L1007,617 Z" fill="#a094b8" opacity="0.69"/><path d="M870,474 L876,474 L865,534 L859,534 Z" fill="#a094b8" opacity="0.61"/><path d="M1030,246 L1040,246 L1027,449 L1017,449 Z" fill="#8a7aa0" opacity="0.56"/><path d="M961,768 L977,768 L961,936 L945,936 Z" fill="#7a6a90" opacity="0.65"/><path d="M936,941 L951,941 L941,1084 L927,1084 Z" fill="#5e4e6c" opacity="0.66"/><path d="M973,554 L982,554 L969,680 L960,680 Z" fill="#3e3044" opacity="0.78"/><path d="M803,955 L817,955 L832,1066 L818,1066 Z" fill="#4a3a52" opacity="0.52"/><path d="M857,492 L875,492 L865,574 L847,574 Z" fill="#4a3a52" opacity="0.82"/><path d="M1042,225 L1059,225 L1035,373 L1018,373 Z" fill="#4a3a52" opacity="0.82"/><path d="M909,480 L921,480 L937,650 L925,650 Z" fill="#7a6a90" opacity="0.79"/><path d="M881,169 L889,169 L910,366 L903,366 Z" fill="#4a3a52" opacity="0.66"/><path d="M1025,619 L1033,619 L1042,714 L1034,714 Z" fill="#4a3a52" opacity="0.84"/><path d="M800,730 L812,730 L826,855 L815,855 Z" fill="#7a6a90" opacity="0.88"/><path d="M929,319 L938,319 L936,420 L927,420 Z" fill="#4a3a52" opacity="0.55"/><path d="M948,871 L965,871 L963,951 L946,951 Z" fill="#a094b8" opacity="0.61"/><path d="M882,919 L897,919 L894,1113 L879,1113 Z" fill="#3e3044" opacity="0.77"/><path d="M882,186 L891,186 L872,288 L863,288 Z" fill="#8a7aa0" opacity="0.84"/><path d="M981,310 L995,310 L974,442 L960,442 Z" fill="#8a7aa0" opacity="0.54"/><path d="M1006,542 L1018,542 L1015,658 L1003,658 Z" fill="#7a6a90" opacity="0.56"/><path d="M859,322 L875,322 L889,431 L873,431 Z" fill="#4a3a52" opacity="0.55"/><path d="M981,610 L997,610 L998,812 L981,812 Z" fill="#3e3044" opacity="0.73"/><path d="M838,140 L848,140 L850,262 L840,262 Z" fill="#a094b8" opacity="0.84"/><path d="M1053,259 L1060,259 L1070,417 L1063,417 Z" fill="#8a7aa0" opacity="0.56"/><path d="M1049,721 L1064,721 L1062,899 L1047,899 Z" fill="#a094b8" opacity="0.57"/><path d="M914,133 L931,133 L930,250 L914,250 Z" fill="#a094b8" opacity="0.58"/><path d="M920,13 L931,13 L912,195 L902,195 Z" fill="#7a6a90" opacity="0.84"/><path d="M834,708 L849,708 L871,862 L856,862 Z" fill="#5e4e6c" opacity="0.55"/><path d="M1037,754 L1054,754 L1032,910 L1016,910 Z" fill="#8a7aa0" opacity="0.51"/><path d="M804,981 L817,981 L812,1079 L800,1079 Z" fill="#5e4e6c" opacity="0.62"/><path d="M804,298 L820,298 L803,368 L787,368 Z" fill="#a094b8" opacity="0.62"/><path d="M965,344 L978,344 L996,467 L983,467 Z" fill="#5e4e6c" opacity="0.78"/><path d="M1033,325 L1042,325 L1040,525 L1031,525 Z" fill="#3e3044" opacity="0.81"/><path d="M931,427 L949,427 L959,591 L941,591 Z" fill="#5e4e6c" opacity="0.75"/><path d="M855,214 L861,214 L869,391 L863,391 Z" fill="#3e3044" opacity="0.54"/><path d="M1037,660 L1049,660 L1038,775 L1026,775 Z" fill="#8a7aa0" opacity="0.78"/><path d="M1044,277 L1054,277 L1077,491 L1067,491 Z" fill="#5e4e6c" opacity="0.69"/><path d="M983,375 L995,375 L972,526 L960,526 Z" fill="#7a6a90" opacity="0.69"/><path d="M881,805 L898,805 L899,940 L881,940 Z" fill="#4a3a52" opacity="0.78"/><path d="M1046,856 L1061,856 L1075,995 L1060,995 Z" fill="#3e3044" opacity="0.51"/><path d="M855,688 L873,688 L885,899 L867,899 Z" fill="#5e4e6c" opacity="0.66"/><path d="M814,245 L825,245 L834,344 L823,344 Z" fill="#8a7aa0" opacity="0.88"/><path d="M825,657 L838,657 L826,761 L813,761 Z" fill="#4a3a52" opacity="0.61"/><path d="M1056,861 L1063,861 L1061,984 L1055,984 Z" fill="#4a3a52" opacity="0.72"/><path d="M910,954 L922,954 L944,1122 L932,1122 Z" fill="#5e4e6c" opacity="0.57"/><path d="M882,950 L895,950 L876,1070 L863,1070 Z" fill="#8a7aa0" opacity="0.60"/><path d="M809,671 L821,671 L806,779 L795,779 Z" fill="#a094b8" opacity="0.54"/><path d="M804,569 L816,569 L820,638 L807,638 Z" fill="#4a3a52" opacity="0.56"/><path d="M822,558 L829,558 L820,630 L813,630 Z" fill="#8a7aa0" opacity="0.81"/><path d="M1056,326 L1072,326 L1097,445 L1081,445 Z" fill="#3e3044" opacity="0.52"/><path d="M835,434 L852,434 L839,580 L821,580 Z" fill="#a094b8" opacity="0.69"/><path d="M975,227 L988,227 L998,419 L985,419 Z" fill="#4a3a52" opacity="0.83"/><path d="M1059,605 L1068,605 L1066,701 L1057,701 Z" fill="#4a3a52" opacity="0.56"/><path d="M943,875 L951,875 L955,1021 L948,1021 Z" fill="#7a6a90" opacity="0.53"/><path d="M858,344 L874,344 L895,509 L879,509 Z" fill="#3e3044" opacity="0.70"/><path d="M816,561 L824,561 L840,621 L832,621 Z" fill="#8a7aa0" opacity="0.60"/><path d="M925,745 L933,745 L948,862 L940,862 Z" fill="#3e3044" opacity="0.78"/><path d="M882,821 L891,821 L881,926 L872,926 Z" fill="#a094b8" opacity="0.85"/><path d="M982,211 L992,211 L1001,285 L991,285 Z" fill="#7a6a90" opacity="0.73"/><path d="M1023,642 L1035,642 L1055,853 L1042,853 Z" fill="#7a6a90" opacity="0.82"/><path d="M941,717 L957,717 L975,783 L959,783 Z" fill="#5e4e6c" opacity="0.78"/><path d="M929,596 L938,596 L935,713 L926,713 Z" fill="#3e3044" opacity="0.74"/><path d="M960,822 L972,822 L994,915 L981,915 Z" fill="#a094b8" opacity="0.63"/><path d="M930,651 L947,651 L970,763 L953,763 Z" fill="#a094b8" opacity="0.79"/><path d="M896,701 L902,701 L915,775 L909,775 Z" fill="#3e3044" opacity="0.59"/><path d="M905,910 L916,910 L933,1022 L922,1022 Z" fill="#7a6a90" opacity="0.54"/><path d="M1014,743 L1022,743 L1017,817 L1008,817 Z" fill="#8a7aa0" opacity="0.67"/><path d="M929,707 L943,707 L967,852 L953,852 Z" fill="#7a6a90" opacity="0.72"/><path d="M854,911 L865,911 L854,1128 L843,1128 Z" fill="#3e3044" opacity="0.84"/><path d="M1027,732 L1044,732 L1061,885 L1044,885 Z" fill="#4a3a52" opacity="0.66"/><path d="M928,722 L942,722 L954,840 L940,840 Z" fill="#8a7aa0" opacity="0.76"/><path d="M964,424 L980,424 L992,511 L976,511 Z" fill="#3e3044" opacity="0.72"/><path d="M1020,550 L1034,550 L1032,706 L1018,706 Z" fill="#8a7aa0" opacity="0.68"/><path d="M800,463 L810,463 L798,572 L788,572 Z" fill="#7a6a90" opacity="0.66"/><path d="M1042,324 L1058,324 L1033,493 L1017,493 Z" fill="#a094b8" opacity="0.65"/><path d="M798,917 L813,917 L806,1023 L792,1023 Z" fill="#8a7aa0" opacity="0.59"/><path d="M968,23 L979,23 L987,232 L976,232 Z" fill="#8a7aa0" opacity="0.83"/><path d="M1047,270 L1064,270 L1056,473 L1038,473 Z" fill="#a094b8" opacity="0.64"/><path d="M1004,856 L1012,856 L1025,971 L1017,971 Z" fill="#5e4e6c" opacity="0.74"/><path d="M867,906 L876,906 L877,1104 L868,1104 Z" fill="#5e4e6c" opacity="0.52"/><path d="M864,66 L872,66 L871,183 L863,183 Z" fill="#3e3044" opacity="0.88"/><path d="M911,56 L928,56 L952,150 L935,150 Z" fill="#5e4e6c" opacity="0.67"/><path d="M1035,671 L1052,671 L1050,791 L1033,791 Z" fill="#a094b8" opacity="0.60"/><path d="M870,490 L878,490 L891,574 L883,574 Z" fill="#7a6a90" opacity="0.74"/><path d="M827,133 L840,133 L835,291 L821,291 Z" fill="#4a3a52" opacity="0.72"/><path d="M1026,532 L1039,532 L1039,607 L1027,607 Z" fill="#7a6a90" opacity="0.52"/><path d="M916,897 L933,897 L924,1013 L906,1013 Z" fill="#3e3044" opacity="0.84"/><path d="M866,965 L883,965 L858,1180 L841,1180 Z" fill="#a094b8" opacity="0.84"/><path d="M949,284 L965,284 L972,497 L956,497 Z" fill="#a094b8" opacity="0.86"/><path d="M1050,640 L1060,640 L1085,781 L1074,781 Z" fill="#8a7aa0" opacity="0.67"/><path d="M840,244 L849,244 L826,430 L817,430 Z" fill="#8a7aa0" opacity="0.66"/><path d="M934,237 L949,237 L931,396 L915,396 Z" fill="#a094b8" opacity="0.57"/><path d="M872,517 L881,517 L867,660 L858,660 Z" fill="#5e4e6c" opacity="0.66"/><path d="M986,637 L993,637 L998,769 L992,769 Z" fill="#7a6a90" opacity="0.70"/><path d="M1044,361 L1061,361 L1041,515 L1023,515 Z" fill="#8a7aa0" opacity="0.72"/><path d="M875,818 L892,818 L889,1016 L872,1016 Z" fill="#a094b8" opacity="0.79"/></g><rect x="120" y="550" width="75" height="260" fill="#8a5a8e"/><rect x="120" y="700" width="75" height="120" fill="#b07890"/>
<path d="M5,640 Q80,620 130,700 L140,1000 L5,1000 Z" fill="#7a4a44"/>
<rect x="5" y="1000" width="235" height="300" fill="#a8a0b0"/><polygon points="130,820 235,700 235,1300 130,1300" fill="#6a6a9a"/>
<rect x="20" y="1050" width="60" height="200" fill="#c8c4cc"/>
<rect x="140" y="900" width="80" height="370" fill="#8a88a8"/>
<rect x="95" y="1040" width="30" height="270" fill="#e0c870"/>
<!-- ground -->
<rect x="5" y="1230" width="1055" height="90" fill="#d6be70"/>
<rect x="5" y="1300" width="1055" height="155" fill="#bf8274"/>
<polygon points="270,1340 560,1340 650,1455 300,1455" fill="#9a7a88"/>
<!-- right building -->
<rect x="880" y="910" width="160" height="110" fill="#dccb68"/>
<rect x="880" y="1010" width="160" height="270" fill="#e0a040"/>
<rect x="890" y="1190" width="110" height="85" fill="#24222e"/>
<!-- tower -->
<rect x="245" y="0" width="250" height="150" fill="#8a7ea0"/><rect x="270" y="20" width="190" height="110" fill="#c8803e"/>


<polygon points="230,140 490,140 525,280 205,280" fill="#7e7498"/>
<rect x="210" y="260" width="300" height="240" fill="#d6c05e"/>
<rect x="210" y="270" width="60" height="230" fill="#a8a070"/>
<path d="M320,480 L320,300 Q365,230 420,300 L420,480 Z" fill="#6a5a80"/>
<rect x="333" y="300" width="75" height="180" fill="#2a2232"/>
<rect x="190" y="490" width="350" height="80" fill="#5d6b9a"/>
<rect x="235" y="560" width="255" height="320" fill="#e2c860"/>
<rect x="310" y="600" width="100" height="215" fill="#4a5a9e"/>
<rect x="330" y="620" width="62" height="185" fill="#e88a78"/>
<rect x="230" y="865" width="260" height="35" fill="#3d4a82"/>
<rect x="240" y="895" width="255" height="425" fill="#e2c962"/>
<rect x="225" y="1140" width="60" height="180" fill="#5a88a8"/>
<rect x="300" y="940" width="130" height="50" fill="#ecdcd0"/>
<rect x="295" y="990" width="140" height="250" fill="#3a4a8a"/>
<rect x="312" y="1005" width="108" height="235" fill="#c42c2c"/>
<polygon points="285,1240 500,1240 525,1365 280,1365" fill="#2c3266"/>
<rect x="290" y="1265" width="220" height="10" fill="#b8bcd8"/>
<rect x="290" y="1300" width="225" height="10" fill="#b8bcd8"/>
<rect x="290" y="1335" width="230" height="10" fill="#b8bcd8"/>
<rect x="440" y="1170" width="35" height="70" fill="#80a060"/>
<!-- right wing -->
<path d="M515,360 Q520,290 600,275 L780,280 Q810,320 800,360 Z" fill="#8a4e7e"/>
<rect x="585" y="275" width="30" height="80" fill="#5a3a5a"/>
<rect x="705" y="265" width="20" height="95" fill="#5a3a5a"/>
<polygon points="495,360 810,360 910,580 490,580" fill="#7b6a78"/>
<path d="M520,545 L520,450 Q570,390 625,450 L625,545 Z" fill="#9a8878"/>
<rect x="550" y="440" width="60" height="100" fill="#3c3452"/>
<path d="M670,545 L670,450 Q720,400 775,450 L775,545 Z" fill="#9a8878"/>
<rect x="700" y="440" width="60" height="100" fill="#3c3452"/>
<rect x="490" y="570" width="420" height="55" fill="#4c5a80"/>
<rect x="490" y="620" width="390" height="230" fill="#c8b070"/>
<rect x="490" y="620" width="390" height="65" fill="#3c6c9c"/>
<rect x="520" y="670" width="80" height="175" fill="#4a5090"/>
<rect x="537" y="682" width="50" height="155" fill="#ee8878"/>
<rect x="705" y="670" width="80" height="175" fill="#4a5090"/>
<rect x="720" y="682" width="50" height="155" fill="#ee8878"/>
<rect x="840" y="620" width="40" height="230" fill="#e0c860"/>
<polygon points="485,845 925,850 900,905 490,905" fill="#3a4264"/>
<rect x="490" y="900" width="390" height="55" fill="#dac462"/>
<rect x="490" y="950" width="390" height="60" fill="#3a70a0"/>
<rect x="490" y="1005" width="390" height="165" fill="#c8b070"/>
<rect x="525" y="970" width="85" height="195" fill="#4a5090"/>
<rect x="540" y="982" width="55" height="175" fill="#ee8878"/>
<rect x="710" y="970" width="80" height="195" fill="#4a5090"/>
<rect x="725" y="982" width="50" height="175" fill="#ee8878"/>
<rect x="490" y="1165" width="390" height="65" fill="#3a6a92"/>
</svg>
</div>
<div class="cell" style="left:7px;top:741px"><svg style="position:absolute;left:48px;top:0;width:265px;height:362px" viewBox="0 0 1065 1455">
<rect x="5" y="0" width="1055" height="1455" fill="#93b8e0"/>
<!-- trees -->
<path d="M5,0 L140,0 Q170,300 190,500 Q200,700 180,900 Q150,1050 130,1060 L5,1060 Z" fill="#56563a"/>
<path d="M20,80 Q100,60 130,200 Q150,400 90,500 Q40,400 20,80 Z" fill="#6a6a40"/>
<path d="M30,600 Q110,620 150,800 Q120,950 40,900 Z" fill="#3e6448"/>
<path d="M420,0 L1060,0 L1060,900 L960,920 Q880,880 860,760 Q820,620 850,560 Q820,420 780,380 Q700,260 600,240 Q500,220 470,120 Q410,60 420,0 Z" fill="#55522e"/>
<path d="M600,40 Q750,20 800,150 Q760,260 640,230 Q560,150 600,40 Z" fill="#8a7c48"/><path d="M750,300 Q850,280 900,400 Q880,480 800,450 Z" fill="#3a3a28"/>
<path d="M860,120 Q980,100 1040,300 Q1000,420 900,380 Q840,250 860,120 Z" fill="#7a6a3a"/>
<path d="M880,640 Q980,620 1060,760 L1060,900 L920,920 Q870,800 880,640 Z" fill="#4e7840"/>
<!-- left background houses --><defs><clipPath id="t4"><path d="M5,0 L140,0 Q170,300 190,500 Q200,700 180,900 Q150,1050 130,1060 L5,1060 Z"/><path d="M420,0 L1060,0 L1060,900 L960,920 Q880,880 860,760 Q820,620 850,560 Q820,420 780,380 Q700,260 600,240 Q500,220 470,120 Q410,60 420,0 Z"/></clipPath></defs><g clip-path="url(#t4)"><ellipse cx="1016" cy="154" rx="16" ry="16" fill="#8a7a48" opacity="0.73"/><ellipse cx="785" cy="966" rx="39" ry="21" fill="#5e6a40" opacity="0.83"/><ellipse cx="342" cy="661" rx="43" ry="36" fill="#9a8a58" opacity="0.73"/><ellipse cx="56" cy="970" rx="33" ry="21" fill="#4a5034" opacity="0.52"/><ellipse cx="123" cy="584" rx="37" ry="37" fill="#3a3a28" opacity="0.73"/><ellipse cx="651" cy="284" rx="44" ry="29" fill="#8a7a48" opacity="0.56"/><ellipse cx="290" cy="761" rx="28" ry="19" fill="#3a3a28" opacity="0.62"/><ellipse cx="270" cy="313" rx="41" ry="29" fill="#8a7a48" opacity="0.57"/><ellipse cx="399" cy="641" rx="24" ry="19" fill="#9a8a58" opacity="0.75"/><ellipse cx="954" cy="470" rx="18" ry="13" fill="#6a6438" opacity="0.62"/><ellipse cx="430" cy="1022" rx="44" ry="33" fill="#9a8a58" opacity="0.45"/><ellipse cx="489" cy="213" rx="16" ry="11" fill="#8a7a48" opacity="0.58"/><ellipse cx="382" cy="210" rx="16" ry="12" fill="#4a5034" opacity="0.71"/><ellipse cx="112" cy="215" rx="19" ry="11" fill="#3e5a40" opacity="0.47"/><ellipse cx="132" cy="778" rx="19" ry="12" fill="#3e5a40" opacity="0.64"/><ellipse cx="74" cy="785" rx="44" ry="24" fill="#5e6a40" opacity="0.83"/><ellipse cx="24" cy="550" rx="34" ry="23" fill="#8a7a48" opacity="0.70"/><ellipse cx="635" cy="770" rx="20" ry="11" fill="#4a5034" opacity="0.59"/><ellipse cx="130" cy="238" rx="23" ry="21" fill="#8a7a48" opacity="0.46"/><ellipse cx="799" cy="639" rx="34" ry="24" fill="#6a6438" opacity="0.74"/><ellipse cx="981" cy="918" rx="16" ry="11" fill="#3a3a28" opacity="0.53"/><ellipse cx="800" cy="699" rx="16" ry="14" fill="#9a8a58" opacity="0.64"/><ellipse cx="268" cy="254" rx="23" ry="12" fill="#8a7a48" opacity="0.52"/><ellipse cx="1020" cy="351" rx="16" ry="9" fill="#5e6a40" opacity="0.47"/><ellipse cx="519" cy="33" rx="38" ry="19" fill="#3e5a40" opacity="0.79"/><ellipse cx="251" cy="588" rx="19" ry="13" fill="#3a3a28" opacity="0.73"/><ellipse cx="647" cy="118" rx="40" ry="39" fill="#2e3424" opacity="0.56"/><ellipse cx="896" cy="289" rx="23" ry="17" fill="#2e3424" opacity="0.79"/><ellipse cx="543" cy="766" rx="40" ry="39" fill="#4a5034" opacity="0.65"/><ellipse cx="367" cy="963" rx="17" ry="14" fill="#4a5034" opacity="0.73"/><ellipse cx="95" cy="1013" rx="25" ry="13" fill="#8a7a48" opacity="0.53"/><ellipse cx="387" cy="1048" rx="15" ry="10" fill="#3a3a28" opacity="0.50"/><ellipse cx="540" cy="57" rx="34" ry="18" fill="#6a6438" opacity="0.82"/><ellipse cx="277" cy="333" rx="24" ry="23" fill="#2e3424" opacity="0.58"/><ellipse cx="718" cy="872" rx="17" ry="10" fill="#2e3424" opacity="0.72"/><ellipse cx="9" cy="267" rx="19" ry="12" fill="#3a3a28" opacity="0.82"/><ellipse cx="124" cy="998" rx="40" ry="38" fill="#8a7a48" opacity="0.64"/><ellipse cx="443" cy="389" rx="39" ry="26" fill="#4a5034" opacity="0.80"/><ellipse cx="1017" cy="412" rx="16" ry="16" fill="#4a5034" opacity="0.49"/><ellipse cx="873" cy="827" rx="32" ry="23" fill="#5e6a40" opacity="0.85"/><ellipse cx="870" cy="125" rx="29" ry="27" fill="#9a8a58" opacity="0.48"/><ellipse cx="363" cy="419" rx="42" ry="34" fill="#3e5a40" opacity="0.62"/><ellipse cx="573" cy="434" rx="29" ry="27" fill="#3e5a40" opacity="0.59"/><ellipse cx="307" cy="11" rx="17" ry="10" fill="#3e5a40" opacity="0.75"/><ellipse cx="89" cy="620" rx="39" ry="25" fill="#8a7a48" opacity="0.46"/><ellipse cx="976" cy="644" rx="24" ry="15" fill="#4a5034" opacity="0.82"/><ellipse cx="361" cy="438" rx="32" ry="19" fill="#9a8a58" opacity="0.72"/><ellipse cx="481" cy="879" rx="28" ry="25" fill="#4a5034" opacity="0.76"/><ellipse cx="243" cy="583" rx="35" ry="28" fill="#4a5034" opacity="0.69"/><ellipse cx="260" cy="506" rx="39" ry="39" fill="#6a6438" opacity="0.68"/><ellipse cx="245" cy="457" rx="19" ry="16" fill="#3a3a28" opacity="0.67"/><ellipse cx="537" cy="716" rx="18" ry="16" fill="#4a5034" opacity="0.61"/><ellipse cx="113" cy="556" rx="37" ry="19" fill="#8a7a48" opacity="0.63"/><ellipse cx="858" cy="174" rx="43" ry="33" fill="#8a7a48" opacity="0.73"/><ellipse cx="281" cy="133" rx="20" ry="17" fill="#5e6a40" opacity="0.72"/><ellipse cx="572" cy="358" rx="39" ry="25" fill="#8a7a48" opacity="0.75"/><ellipse cx="678" cy="676" rx="26" ry="13" fill="#9a8a58" opacity="0.70"/><ellipse cx="359" cy="474" rx="37" ry="23" fill="#9a8a58" opacity="0.56"/><ellipse cx="606" cy="675" rx="23" ry="20" fill="#2e3424" opacity="0.82"/><ellipse cx="544" cy="995" rx="36" ry="27" fill="#8a7a48" opacity="0.63"/><ellipse cx="864" cy="14" rx="35" ry="25" fill="#2e3424" opacity="0.70"/><ellipse cx="907" cy="428" rx="24" ry="19" fill="#8a7a48" opacity="0.82"/><ellipse cx="1059" cy="121" rx="29" ry="17" fill="#9a8a58" opacity="0.78"/><ellipse cx="485" cy="182" rx="16" ry="9" fill="#5e6a40" opacity="0.62"/><ellipse cx="687" cy="536" rx="23" ry="19" fill="#2e3424" opacity="0.74"/><ellipse cx="393" cy="90" rx="29" ry="18" fill="#4a5034" opacity="0.62"/><ellipse cx="165" cy="892" rx="38" ry="34" fill="#2e3424" opacity="0.74"/><ellipse cx="16" cy="989" rx="39" ry="30" fill="#3e5a40" opacity="0.53"/><ellipse cx="228" cy="808" rx="16" ry="8" fill="#3e5a40" opacity="0.50"/><ellipse cx="374" cy="123" rx="22" ry="15" fill="#9a8a58" opacity="0.52"/><ellipse cx="278" cy="1003" rx="38" ry="31" fill="#9a8a58" opacity="0.50"/><ellipse cx="919" cy="150" rx="19" ry="17" fill="#4a5034" opacity="0.82"/><ellipse cx="725" cy="383" rx="45" ry="36" fill="#5e6a40" opacity="0.72"/><ellipse cx="591" cy="246" rx="34" ry="19" fill="#2e3424" opacity="0.55"/><ellipse cx="1018" cy="1025" rx="22" ry="11" fill="#3e5a40" opacity="0.78"/><ellipse cx="314" cy="132" rx="18" ry="17" fill="#3a3a28" opacity="0.72"/><ellipse cx="835" cy="536" rx="29" ry="22" fill="#8a7a48" opacity="0.75"/><ellipse cx="812" cy="192" rx="23" ry="15" fill="#6a6438" opacity="0.47"/><ellipse cx="576" cy="260" rx="32" ry="24" fill="#4a5034" opacity="0.84"/><ellipse cx="294" cy="353" rx="44" ry="23" fill="#6a6438" opacity="0.68"/><ellipse cx="31" cy="337" rx="39" ry="27" fill="#6a6438" opacity="0.59"/><ellipse cx="549" cy="552" rx="26" ry="25" fill="#2e3424" opacity="0.61"/><ellipse cx="267" cy="845" rx="18" ry="12" fill="#9a8a58" opacity="0.58"/><ellipse cx="286" cy="400" rx="19" ry="12" fill="#2e3424" opacity="0.56"/><ellipse cx="81" cy="813" rx="44" ry="39" fill="#9a8a58" opacity="0.67"/><ellipse cx="187" cy="890" rx="18" ry="10" fill="#4a5034" opacity="0.76"/><ellipse cx="253" cy="474" rx="18" ry="12" fill="#3e5a40" opacity="0.63"/><ellipse cx="1031" cy="498" rx="39" ry="38" fill="#6a6438" opacity="0.65"/><ellipse cx="727" cy="1031" rx="39" ry="30" fill="#3e5a40" opacity="0.67"/><ellipse cx="1045" cy="656" rx="33" ry="23" fill="#9a8a58" opacity="0.55"/><ellipse cx="507" cy="547" rx="19" ry="14" fill="#5e6a40" opacity="0.73"/><ellipse cx="606" cy="404" rx="16" ry="13" fill="#3a3a28" opacity="0.64"/><ellipse cx="1005" cy="861" rx="15" ry="10" fill="#2e3424" opacity="0.64"/><ellipse cx="58" cy="200" rx="21" ry="13" fill="#5e6a40" opacity="0.47"/><ellipse cx="99" cy="95" rx="37" ry="36" fill="#8a7a48" opacity="0.68"/><ellipse cx="854" cy="561" rx="33" ry="18" fill="#5e6a40" opacity="0.47"/><ellipse cx="418" cy="208" rx="18" ry="9" fill="#6a6438" opacity="0.84"/><ellipse cx="867" cy="216" rx="30" ry="24" fill="#4a5034" opacity="0.49"/><ellipse cx="178" cy="311" rx="23" ry="15" fill="#3a3a28" opacity="0.67"/><ellipse cx="379" cy="248" rx="26" ry="18" fill="#5e6a40" opacity="0.55"/><ellipse cx="980" cy="54" rx="24" ry="13" fill="#8a7a48" opacity="0.70"/><ellipse cx="980" cy="732" rx="19" ry="13" fill="#5e6a40" opacity="0.66"/><ellipse cx="103" cy="524" rx="35" ry="31" fill="#3e5a40" opacity="0.82"/><ellipse cx="314" cy="175" rx="41" ry="21" fill="#4a5034" opacity="0.55"/><ellipse cx="801" cy="430" rx="43" ry="28" fill="#6a6438" opacity="0.84"/><ellipse cx="875" cy="642" rx="28" ry="22" fill="#6a6438" opacity="0.58"/><ellipse cx="170" cy="989" rx="34" ry="23" fill="#9a8a58" opacity="0.47"/><ellipse cx="930" cy="581" rx="42" ry="36" fill="#6a6438" opacity="0.75"/><ellipse cx="354" cy="702" rx="44" ry="38" fill="#8a7a48" opacity="0.70"/><ellipse cx="147" cy="217" rx="33" ry="27" fill="#4a5034" opacity="0.82"/><ellipse cx="953" cy="535" rx="27" ry="22" fill="#9a8a58" opacity="0.81"/><ellipse cx="342" cy="135" rx="42" ry="40" fill="#9a8a58" opacity="0.57"/><ellipse cx="476" cy="695" rx="31" ry="28" fill="#4a5034" opacity="0.84"/><ellipse cx="179" cy="531" rx="19" ry="16" fill="#9a8a58" opacity="0.54"/><ellipse cx="528" cy="872" rx="33" ry="32" fill="#5e6a40" opacity="0.62"/><ellipse cx="884" cy="113" rx="18" ry="15" fill="#2e3424" opacity="0.66"/><ellipse cx="890" cy="163" rx="41" ry="29" fill="#4a5034" opacity="0.79"/><ellipse cx="477" cy="319" rx="30" ry="29" fill="#3e5a40" opacity="0.53"/><ellipse cx="881" cy="361" rx="20" ry="17" fill="#8a7a48" opacity="0.47"/><ellipse cx="403" cy="710" rx="30" ry="23" fill="#6a6438" opacity="0.60"/><ellipse cx="25" cy="477" rx="37" ry="26" fill="#9a8a58" opacity="0.56"/><ellipse cx="442" cy="556" rx="41" ry="38" fill="#8a7a48" opacity="0.83"/><ellipse cx="275" cy="845" rx="30" ry="20" fill="#2e3424" opacity="0.71"/><ellipse cx="709" cy="983" rx="45" ry="44" fill="#6a6438" opacity="0.63"/><ellipse cx="684" cy="1080" rx="30" ry="18" fill="#3e5a40" opacity="0.65"/><ellipse cx="55" cy="1020" rx="19" ry="15" fill="#8a7a48" opacity="0.85"/><ellipse cx="283" cy="410" rx="26" ry="18" fill="#6a6438" opacity="0.74"/><ellipse cx="58" cy="800" rx="39" ry="24" fill="#9a8a58" opacity="0.79"/><ellipse cx="169" cy="874" rx="38" ry="25" fill="#3a3a28" opacity="0.72"/><ellipse cx="989" cy="950" rx="31" ry="19" fill="#9a8a58" opacity="0.67"/><ellipse cx="705" cy="719" rx="43" ry="42" fill="#8a7a48" opacity="0.75"/><ellipse cx="346" cy="523" rx="18" ry="14" fill="#6a6438" opacity="0.66"/><ellipse cx="14" cy="747" rx="30" ry="17" fill="#8a7a48" opacity="0.56"/><ellipse cx="841" cy="745" rx="26" ry="21" fill="#5e6a40" opacity="0.57"/><ellipse cx="923" cy="508" rx="36" ry="19" fill="#3a3a28" opacity="0.53"/><ellipse cx="458" cy="535" rx="25" ry="15" fill="#3e5a40" opacity="0.70"/><ellipse cx="724" cy="866" rx="38" ry="36" fill="#6a6438" opacity="0.84"/><ellipse cx="955" cy="182" rx="41" ry="40" fill="#3e5a40" opacity="0.80"/><ellipse cx="681" cy="579" rx="30" ry="20" fill="#4a5034" opacity="0.54"/><ellipse cx="410" cy="25" rx="25" ry="22" fill="#8a7a48" opacity="0.47"/><ellipse cx="17" cy="562" rx="33" ry="31" fill="#3e5a40" opacity="0.53"/><ellipse cx="841" cy="854" rx="39" ry="33" fill="#5e6a40" opacity="0.45"/><ellipse cx="276" cy="406" rx="38" ry="23" fill="#6a6438" opacity="0.76"/><ellipse cx="1022" cy="841" rx="25" ry="20" fill="#5e6a40" opacity="0.83"/><ellipse cx="265" cy="803" rx="37" ry="21" fill="#6a6438" opacity="0.81"/><ellipse cx="377" cy="324" rx="36" ry="23" fill="#6a6438" opacity="0.46"/><ellipse cx="29" cy="375" rx="42" ry="25" fill="#3a3a28" opacity="0.48"/><ellipse cx="78" cy="85" rx="39" ry="30" fill="#8a7a48" opacity="0.76"/><ellipse cx="319" cy="524" rx="22" ry="13" fill="#3e5a40" opacity="0.51"/><ellipse cx="849" cy="412" rx="18" ry="16" fill="#3a3a28" opacity="0.48"/><ellipse cx="126" cy="319" rx="21" ry="21" fill="#8a7a48" opacity="0.84"/><ellipse cx="335" cy="912" rx="44" ry="33" fill="#6a6438" opacity="0.62"/><ellipse cx="41" cy="525" rx="32" ry="20" fill="#9a8a58" opacity="0.75"/><ellipse cx="396" cy="1029" rx="18" ry="13" fill="#5e6a40" opacity="0.61"/><ellipse cx="153" cy="1075" rx="34" ry="18" fill="#3a3a28" opacity="0.46"/><ellipse cx="304" cy="163" rx="36" ry="32" fill="#3a3a28" opacity="0.53"/><ellipse cx="435" cy="551" rx="32" ry="25" fill="#3e5a40" opacity="0.82"/><ellipse cx="243" cy="779" rx="17" ry="12" fill="#9a8a58" opacity="0.70"/><ellipse cx="568" cy="490" rx="29" ry="15" fill="#9a8a58" opacity="0.83"/><ellipse cx="130" cy="38" rx="34" ry="31" fill="#9a8a58" opacity="0.53"/><ellipse cx="1003" cy="1022" rx="44" ry="36" fill="#6a6438" opacity="0.76"/><ellipse cx="253" cy="398" rx="35" ry="29" fill="#2e3424" opacity="0.83"/><ellipse cx="765" cy="11" rx="29" ry="24" fill="#3e5a40" opacity="0.58"/><ellipse cx="69" cy="639" rx="21" ry="16" fill="#4a5034" opacity="0.62"/><ellipse cx="881" cy="1047" rx="23" ry="17" fill="#9a8a58" opacity="0.51"/><ellipse cx="583" cy="908" rx="34" ry="32" fill="#2e3424" opacity="0.60"/><ellipse cx="135" cy="760" rx="29" ry="27" fill="#3e5a40" opacity="0.81"/><ellipse cx="195" cy="273" rx="18" ry="13" fill="#3e5a40" opacity="0.76"/><ellipse cx="713" cy="188" rx="25" ry="16" fill="#5e6a40" opacity="0.49"/><ellipse cx="124" cy="113" rx="16" ry="10" fill="#3a3a28" opacity="0.76"/><ellipse cx="254" cy="632" rx="38" ry="25" fill="#4a5034" opacity="0.46"/><ellipse cx="181" cy="871" rx="15" ry="11" fill="#3a3a28" opacity="0.80"/><ellipse cx="556" cy="781" rx="35" ry="27" fill="#8a7a48" opacity="0.72"/><ellipse cx="277" cy="540" rx="34" ry="24" fill="#8a7a48" opacity="0.50"/><ellipse cx="137" cy="419" rx="24" ry="12" fill="#3e5a40" opacity="0.54"/><ellipse cx="625" cy="662" rx="28" ry="18" fill="#2e3424" opacity="0.83"/><ellipse cx="74" cy="175" rx="34" ry="25" fill="#3e5a40" opacity="0.65"/><ellipse cx="676" cy="530" rx="27" ry="25" fill="#4a5034" opacity="0.61"/><ellipse cx="109" cy="814" rx="33" ry="29" fill="#5e6a40" opacity="0.57"/><ellipse cx="1053" cy="813" rx="41" ry="39" fill="#8a7a48" opacity="0.70"/><ellipse cx="586" cy="522" rx="18" ry="12" fill="#8a7a48" opacity="0.75"/><ellipse cx="664" cy="552" rx="16" ry="15" fill="#2e3424" opacity="0.49"/><ellipse cx="698" cy="215" rx="36" ry="26" fill="#6a6438" opacity="0.67"/><ellipse cx="925" cy="467" rx="28" ry="27" fill="#6a6438" opacity="0.62"/><ellipse cx="924" cy="802" rx="34" ry="18" fill="#2e3424" opacity="0.49"/><ellipse cx="23" cy="373" rx="21" ry="13" fill="#3e5a40" opacity="0.76"/><ellipse cx="439" cy="639" rx="24" ry="22" fill="#6a6438" opacity="0.62"/><ellipse cx="161" cy="781" rx="45" ry="26" fill="#9a8a58" opacity="0.56"/><ellipse cx="408" cy="672" rx="23" ry="21" fill="#9a8a58" opacity="0.45"/><ellipse cx="296" cy="1064" rx="29" ry="15" fill="#8a7a48" opacity="0.71"/><ellipse cx="985" cy="973" rx="43" ry="27" fill="#2e3424" opacity="0.55"/><ellipse cx="537" cy="26" rx="23" ry="17" fill="#8a7a48" opacity="0.60"/><ellipse cx="14" cy="1039" rx="22" ry="15" fill="#9a8a58" opacity="0.74"/><ellipse cx="1012" cy="717" rx="38" ry="31" fill="#3a3a28" opacity="0.45"/><ellipse cx="987" cy="528" rx="45" ry="39" fill="#3e5a40" opacity="0.50"/><ellipse cx="666" cy="519" rx="40" ry="25" fill="#3e5a40" opacity="0.73"/><ellipse cx="646" cy="744" rx="17" ry="17" fill="#3a3a28" opacity="0.80"/><ellipse cx="173" cy="1060" rx="22" ry="15" fill="#3a3a28" opacity="0.63"/><ellipse cx="52" cy="498" rx="21" ry="11" fill="#3a3a28" opacity="0.58"/><ellipse cx="30" cy="195" rx="20" ry="16" fill="#9a8a58" opacity="0.82"/><ellipse cx="125" cy="978" rx="43" ry="33" fill="#8a7a48" opacity="0.79"/><ellipse cx="919" cy="804" rx="32" ry="29" fill="#3e5a40" opacity="0.48"/><ellipse cx="664" cy="771" rx="43" ry="38" fill="#9a8a58" opacity="0.58"/><ellipse cx="982" cy="626" rx="28" ry="20" fill="#3e5a40" opacity="0.64"/><ellipse cx="852" cy="589" rx="23" ry="13" fill="#9a8a58" opacity="0.74"/><ellipse cx="591" cy="412" rx="35" ry="33" fill="#3a3a28" opacity="0.65"/><ellipse cx="287" cy="129" rx="29" ry="16" fill="#3e5a40" opacity="0.61"/><ellipse cx="151" cy="109" rx="17" ry="11" fill="#6a6438" opacity="0.79"/><ellipse cx="38" cy="119" rx="42" ry="22" fill="#5e6a40" opacity="0.70"/><ellipse cx="391" cy="1024" rx="23" ry="15" fill="#5e6a40" opacity="0.79"/><ellipse cx="1025" cy="681" rx="24" ry="12" fill="#9a8a58" opacity="0.58"/><ellipse cx="682" cy="538" rx="35" ry="24" fill="#8a7a48" opacity="0.67"/><ellipse cx="189" cy="452" rx="34" ry="30" fill="#9a8a58" opacity="0.56"/><ellipse cx="484" cy="59" rx="34" ry="32" fill="#2e3424" opacity="0.63"/><ellipse cx="403" cy="762" rx="37" ry="24" fill="#5e6a40" opacity="0.46"/><ellipse cx="532" cy="540" rx="20" ry="12" fill="#6a6438" opacity="0.48"/><ellipse cx="439" cy="321" rx="24" ry="15" fill="#4a5034" opacity="0.47"/><ellipse cx="792" cy="925" rx="29" ry="27" fill="#5e6a40" opacity="0.79"/><ellipse cx="578" cy="985" rx="33" ry="29" fill="#3e5a40" opacity="0.72"/><ellipse cx="766" cy="978" rx="42" ry="38" fill="#3a3a28" opacity="0.46"/><ellipse cx="878" cy="40" rx="44" ry="23" fill="#8a7a48" opacity="0.72"/><ellipse cx="716" cy="763" rx="35" ry="33" fill="#2e3424" opacity="0.78"/><ellipse cx="730" cy="437" rx="26" ry="19" fill="#3a3a28" opacity="0.79"/><ellipse cx="135" cy="974" rx="30" ry="25" fill="#8a7a48" opacity="0.51"/><ellipse cx="631" cy="25" rx="32" ry="19" fill="#2e3424" opacity="0.71"/><ellipse cx="890" cy="136" rx="23" ry="14" fill="#4a5034" opacity="0.73"/><ellipse cx="688" cy="1014" rx="18" ry="13" fill="#9a8a58" opacity="0.60"/><ellipse cx="949" cy="206" rx="40" ry="22" fill="#2e3424" opacity="0.63"/><ellipse cx="664" cy="1033" rx="27" ry="16" fill="#4a5034" opacity="0.72"/><ellipse cx="528" cy="343" rx="19" ry="17" fill="#4a5034" opacity="0.61"/><ellipse cx="463" cy="722" rx="31" ry="17" fill="#8a7a48" opacity="0.78"/><ellipse cx="882" cy="828" rx="27" ry="24" fill="#9a8a58" opacity="0.65"/><ellipse cx="622" cy="958" rx="40" ry="39" fill="#6a6438" opacity="0.65"/><ellipse cx="52" cy="46" rx="37" ry="35" fill="#9a8a58" opacity="0.66"/><ellipse cx="92" cy="175" rx="33" ry="24" fill="#3a3a28" opacity="0.48"/><ellipse cx="172" cy="1075" rx="18" ry="13" fill="#5e6a40" opacity="0.51"/><ellipse cx="881" cy="193" rx="20" ry="18" fill="#5e6a40" opacity="0.63"/><ellipse cx="538" cy="88" rx="42" ry="21" fill="#3a3a28" opacity="0.71"/><ellipse cx="268" cy="990" rx="23" ry="14" fill="#2e3424" opacity="0.60"/><ellipse cx="492" cy="6" rx="39" ry="22" fill="#5e6a40" opacity="0.49"/><ellipse cx="796" cy="1010" rx="32" ry="27" fill="#2e3424" opacity="0.61"/><ellipse cx="360" cy="534" rx="40" ry="20" fill="#3a3a28" opacity="0.73"/><ellipse cx="1014" cy="711" rx="23" ry="19" fill="#8a7a48" opacity="0.63"/><ellipse cx="779" cy="87" rx="20" ry="12" fill="#8a7a48" opacity="0.47"/><ellipse cx="171" cy="540" rx="36" ry="21" fill="#6a6438" opacity="0.77"/><ellipse cx="856" cy="215" rx="38" ry="25" fill="#3e5a40" opacity="0.82"/><ellipse cx="595" cy="1006" rx="38" ry="36" fill="#6a6438" opacity="0.52"/><ellipse cx="510" cy="1040" rx="35" ry="29" fill="#9a8a58" opacity="0.65"/><ellipse cx="259" cy="890" rx="31" ry="29" fill="#3e5a40" opacity="0.63"/><ellipse cx="674" cy="650" rx="38" ry="30" fill="#3a3a28" opacity="0.66"/><ellipse cx="634" cy="415" rx="18" ry="17" fill="#6a6438" opacity="0.51"/><ellipse cx="523" cy="973" rx="25" ry="19" fill="#4a5034" opacity="0.80"/><ellipse cx="483" cy="230" rx="37" ry="23" fill="#2e3424" opacity="0.79"/><ellipse cx="827" cy="503" rx="29" ry="17" fill="#3e5a40" opacity="0.57"/><ellipse cx="627" cy="761" rx="33" ry="20" fill="#5e6a40" opacity="0.50"/><ellipse cx="307" cy="316" rx="44" ry="40" fill="#3e5a40" opacity="0.78"/><ellipse cx="161" cy="377" rx="40" ry="35" fill="#5e6a40" opacity="0.79"/><ellipse cx="679" cy="726" rx="24" ry="23" fill="#4a5034" opacity="0.58"/><ellipse cx="1040" cy="460" rx="29" ry="27" fill="#5e6a40" opacity="0.52"/><ellipse cx="883" cy="143" rx="43" ry="33" fill="#4a5034" opacity="0.66"/><ellipse cx="307" cy="45" rx="45" ry="37" fill="#4a5034" opacity="0.70"/><ellipse cx="57" cy="906" rx="41" ry="25" fill="#4a5034" opacity="0.52"/><ellipse cx="967" cy="49" rx="37" ry="37" fill="#8a7a48" opacity="0.62"/><ellipse cx="624" cy="279" rx="21" ry="15" fill="#6a6438" opacity="0.53"/><ellipse cx="206" cy="735" rx="22" ry="13" fill="#5e6a40" opacity="0.80"/><ellipse cx="69" cy="533" rx="41" ry="40" fill="#5e6a40" opacity="0.51"/><ellipse cx="52" cy="589" rx="34" ry="20" fill="#8a7a48" opacity="0.56"/><ellipse cx="1042" cy="126" rx="39" ry="30" fill="#5e6a40" opacity="0.62"/><ellipse cx="70" cy="484" rx="35" ry="31" fill="#5e6a40" opacity="0.85"/><ellipse cx="906" cy="680" rx="23" ry="17" fill="#6a6438" opacity="0.73"/><ellipse cx="52" cy="546" rx="41" ry="39" fill="#3a3a28" opacity="0.51"/><ellipse cx="906" cy="701" rx="21" ry="15" fill="#3a3a28" opacity="0.75"/><ellipse cx="301" cy="323" rx="33" ry="32" fill="#3e5a40" opacity="0.55"/><ellipse cx="895" cy="201" rx="24" ry="19" fill="#3e5a40" opacity="0.45"/><ellipse cx="626" cy="575" rx="31" ry="25" fill="#3e5a40" opacity="0.53"/><ellipse cx="965" cy="714" rx="24" ry="19" fill="#2e3424" opacity="0.55"/><ellipse cx="707" cy="705" rx="40" ry="33" fill="#3a3a28" opacity="0.80"/><ellipse cx="883" cy="217" rx="18" ry="16" fill="#6a6438" opacity="0.73"/><ellipse cx="968" cy="586" rx="41" ry="26" fill="#8a7a48" opacity="0.59"/><ellipse cx="554" cy="80" rx="45" ry="44" fill="#3a3a28" opacity="0.81"/><ellipse cx="420" cy="758" rx="24" ry="17" fill="#4a5034" opacity="0.56"/><ellipse cx="366" cy="732" rx="31" ry="19" fill="#4a5034" opacity="0.76"/><ellipse cx="794" cy="586" rx="30" ry="21" fill="#5e6a40" opacity="0.80"/><ellipse cx="771" cy="1061" rx="41" ry="34" fill="#5e6a40" opacity="0.78"/><ellipse cx="194" cy="383" rx="23" ry="14" fill="#3a3a28" opacity="0.54"/><ellipse cx="180" cy="118" rx="21" ry="14" fill="#4a5034" opacity="0.46"/><ellipse cx="424" cy="45" rx="15" ry="8" fill="#6a6438" opacity="0.72"/><ellipse cx="335" cy="516" rx="17" ry="12" fill="#3a3a28" opacity="0.54"/><ellipse cx="353" cy="201" rx="43" ry="35" fill="#5e6a40" opacity="0.64"/><ellipse cx="480" cy="321" rx="32" ry="18" fill="#3e5a40" opacity="0.83"/><ellipse cx="765" cy="468" rx="45" ry="24" fill="#3a3a28" opacity="0.50"/><ellipse cx="331" cy="228" rx="27" ry="14" fill="#8a7a48" opacity="0.65"/><ellipse cx="794" cy="1025" rx="30" ry="28" fill="#9a8a58" opacity="0.49"/><ellipse cx="780" cy="640" rx="31" ry="28" fill="#6a6438" opacity="0.59"/><ellipse cx="873" cy="224" rx="32" ry="30" fill="#2e3424" opacity="0.59"/><ellipse cx="823" cy="118" rx="41" ry="25" fill="#2e3424" opacity="0.75"/><ellipse cx="500" cy="658" rx="44" ry="33" fill="#8a7a48" opacity="0.64"/><ellipse cx="852" cy="723" rx="36" ry="35" fill="#9a8a58" opacity="0.80"/><ellipse cx="877" cy="289" rx="32" ry="27" fill="#8a7a48" opacity="0.77"/><ellipse cx="453" cy="669" rx="33" ry="21" fill="#5e6a40" opacity="0.71"/><ellipse cx="542" cy="550" rx="44" ry="27" fill="#5e6a40" opacity="0.84"/><ellipse cx="398" cy="301" rx="26" ry="25" fill="#3a3a28" opacity="0.73"/><ellipse cx="946" cy="808" rx="19" ry="14" fill="#8a7a48" opacity="0.61"/><ellipse cx="826" cy="810" rx="16" ry="15" fill="#5e6a40" opacity="0.81"/><ellipse cx="880" cy="148" rx="33" ry="28" fill="#9a8a58" opacity="0.65"/><ellipse cx="52" cy="746" rx="33" ry="26" fill="#4a5034" opacity="0.49"/><ellipse cx="7" cy="445" rx="22" ry="12" fill="#2e3424" opacity="0.67"/><ellipse cx="796" cy="429" rx="24" ry="14" fill="#8a7a48" opacity="0.79"/><ellipse cx="509" cy="1081" rx="29" ry="17" fill="#4a5034" opacity="0.79"/><ellipse cx="275" cy="139" rx="38" ry="23" fill="#6a6438" opacity="0.46"/><ellipse cx="820" cy="896" rx="24" ry="14" fill="#3e5a40" opacity="0.53"/><ellipse cx="923" cy="548" rx="43" ry="35" fill="#2e3424" opacity="0.81"/><ellipse cx="847" cy="325" rx="17" ry="9" fill="#6a6438" opacity="0.85"/><ellipse cx="573" cy="674" rx="39" ry="29" fill="#3e5a40" opacity="0.50"/><ellipse cx="368" cy="437" rx="34" ry="27" fill="#5e6a40" opacity="0.60"/><ellipse cx="661" cy="458" rx="32" ry="28" fill="#6a6438" opacity="0.60"/><ellipse cx="318" cy="1045" rx="23" ry="15" fill="#4a5034" opacity="0.63"/><ellipse cx="482" cy="846" rx="19" ry="18" fill="#4a5034" opacity="0.55"/><ellipse cx="800" cy="942" rx="15" ry="10" fill="#5e6a40" opacity="0.58"/><ellipse cx="186" cy="314" rx="24" ry="20" fill="#2e3424" opacity="0.73"/></g>
<rect x="5" y="1040" width="120" height="260" fill="#b4b4b0"/>
<rect x="120" y="650" width="100" height="650" fill="#6a6c8e"/>
<rect x="140" y="760" width="70" height="520" fill="#c8bfa8"/>
<rect x="165" y="1050" width="45" height="210" fill="#d8ccb0"/>
<!-- right pavilion -->
<rect x="880" y="920" width="180" height="340" fill="#aea898"/>
<rect x="880" y="920" width="180" height="60" fill="#8a8a78"/>
<rect x="905" y="1040" width="30" height="220" fill="#d8d2c0"/>
<rect x="960" y="1040" width="30" height="220" fill="#d8d2c0"/>
<!-- ground -->
<rect x="5" y="1260" width="1055" height="195" fill="#d8d0c0"/>
<polygon points="500,1370 1060,1370 1060,1455 540,1455" fill="#6a6a6a"/>
<rect x="490" y="1250" width="400" height="130" fill="#3a3a4a"/>
<!-- tower -->
<rect x="300" y="10" width="110" height="40" fill="#4e5684"/>
<rect x="295" y="40" width="115" height="125" fill="#e8d48c"/>
<circle cx="360" cy="110" r="30" fill="#8a7040"/>
<circle cx="360" cy="110" r="20" fill="#d8c080"/>
<polygon points="250,165 470,165 500,270 210,270" fill="#4e5684"/>
<rect x="205" y="270" width="325" height="40" fill="#f0e0a0"/>
<rect x="215" y="300" width="290" height="210" fill="#e6c870"/>
<rect x="250" y="320" width="40" height="180" fill="#f0dca0"/>
<rect x="440" y="320" width="40" height="180" fill="#f0dca0"/>
<rect x="335" y="380" width="65" height="95" fill="#2e2e52"/>
<rect x="195" y="500" width="345" height="80" fill="#c8b070"/>
<rect x="235" y="570" width="255" height="330" fill="#e0bf72"/>
<rect x="240" y="580" width="45" height="310" fill="#f0dca0"/>
<rect x="450" y="580" width="40" height="310" fill="#f0dca0"/>
<rect x="330" y="610" width="75" height="200" fill="#34406a"/>
<rect x="295" y="820" width="145" height="45" fill="#d8bc80"/>
<rect x="230" y="880" width="265" height="60" fill="#f0d890"/>
<rect x="240" y="930" width="250" height="330" fill="#e2c478"/>
<rect x="305" y="955" width="110" height="40" fill="#5a5a8a"/>
<rect x="310" y="995" width="100" height="220" fill="#6c3a2c"/>
<polygon points="305,1225 480,1225 510,1380 290,1380" fill="#e0c080"/>
<rect x="270" y="1160" width="30" height="220" fill="#d8b870"/>
<rect x="470" y="1160" width="35" height="220" fill="#d8b870"/>
<rect x="130" y="1260" width="110" height="70" fill="#4e5a8e"/>
<!-- right wing -->
<rect x="600" y="230" width="100" height="110" fill="#e8d28c"/>
<circle cx="650" cy="300" r="28" fill="#8a7040"/>
<polygon points="490,360 820,360 850,560 490,560" fill="#5a6294"/>
<path d="M545,535 L545,460 Q590,410 635,460 L635,535 Z" fill="#e2c070"/>
<rect x="565" y="450" width="45" height="80" fill="#2c2c50"/>
<path d="M695,535 L695,460 Q740,410 785,460 L785,535 Z" fill="#e2c070"/>
<rect x="717" y="450" width="45" height="80" fill="#2c2c50"/>
<rect x="490" y="555" width="420" height="60" fill="#d4b27a"/>
<rect x="490" y="610" width="380" height="290" fill="#ddb36c"/>
<rect x="525" y="650" width="95" height="30" fill="#ecd8a0"/>
<rect x="530" y="680" width="75" height="150" fill="#ecd4a0"/>
<rect x="540" y="688" width="55" height="130" fill="#34406e"/>
<rect x="695" y="650" width="95" height="30" fill="#ecd8a0"/>
<rect x="705" y="680" width="75" height="150" fill="#ecd4a0"/>
<rect x="715" y="688" width="55" height="130" fill="#34406e"/>
<rect x="510" y="830" width="360" height="55" fill="#e4c890"/>
<rect x="490" y="890" width="410" height="60" fill="#d0b080"/>
<rect x="490" y="945" width="390" height="225" fill="#dcb46e"/>
<rect x="530" y="975" width="75" height="190" fill="#e8d2a0"/>
<rect x="540" y="985" width="55" height="175" fill="#34407a"/>
<rect x="710" y="975" width="75" height="190" fill="#e8d2a0"/>
<rect x="722" y="985" width="50" height="175" fill="#34407a"/>
<rect x="480" y="1160" width="400" height="90" fill="#d8b878"/>
<rect x="500" y="1245" width="390" height="35" fill="#4a5a98"/>
</svg>
</div>
<div class="cell" style="left:374px;top:741px"><svg style="position:absolute;left:48px;top:0;width:265px;height:362px" viewBox="0 0 1065 1455">
<defs><linearGradient id="i5sky" x1="0" y1="0" x2="0" y2="1"><stop offset="0" stop-color="#9ac2ea"/><stop offset="1" stop-color="#b6d2e6"/></linearGradient></defs>
<rect x="5" y="0" width="1055" height="1455" fill="url(#i5sky)"/>
<path d="M5,0 L330,0 Q290,200 300,400 Q260,700 280,1000 Q230,1200 200,1260 L5,1260 Z" fill="#8fb054"/>
<path d="M30,100 Q150,60 230,220 Q260,420 120,460 Q60,300 30,100 Z" fill="#b0c870"/>
<path d="M20,550 Q120,560 160,700 Q140,850 50,820 Z" fill="#6a8a48"/>
<path d="M120,880 Q230,860 250,1000 Q200,1100 110,1060 Z" fill="#7ca050"/>
<path d="M130,450 L190,450 L200,1250 L140,1250 Z" fill="#7a5a40" opacity="0.6"/>
<path d="M870,800 Q900,620 980,520 Q1030,440 1060,460 L1060,960 L870,960 Z" fill="#7ea452"/>
<polygon points="880,1010 920,910 1060,910 1060,1010" fill="#7a8494"/>
<rect x="875" y="1005" width="185" height="200" fill="#c88484"/>
<rect x="890" y="1180" width="100" height="90" fill="#3a5c40"/>
<rect x="1000" y="1185" width="60" height="75" fill="#e0e0e4"/>
<rect x="5" y="1020" width="125" height="280" fill="#c89088"/><defs><clipPath id="t5"><path d="M5,0 L330,0 Q290,200 300,400 Q260,700 280,1000 Q230,1200 200,1260 L5,1260 Z"/><path d="M870,800 Q900,620 980,520 Q1030,440 1060,460 L1060,960 L870,960 Z"/></clipPath></defs><g clip-path="url(#t5)"><ellipse cx="981" cy="1233" rx="42" ry="23" fill="#5a7a38" opacity="0.57"/><ellipse cx="405" cy="466" rx="37" ry="23" fill="#8ab050" opacity="0.54"/><ellipse cx="485" cy="32" rx="18" ry="15" fill="#c8d890" opacity="0.46"/><ellipse cx="667" cy="561" rx="38" ry="23" fill="#8ab050" opacity="0.69"/><ellipse cx="699" cy="807" rx="44" ry="30" fill="#4e6a34" opacity="0.79"/><ellipse cx="1027" cy="366" rx="44" ry="35" fill="#4e6a34" opacity="0.64"/><ellipse cx="762" cy="768" rx="28" ry="23" fill="#a8c868" opacity="0.77"/><ellipse cx="568" cy="875" rx="31" ry="24" fill="#8ab050" opacity="0.49"/><ellipse cx="46" cy="358" rx="32" ry="29" fill="#6a8a40" opacity="0.49"/><ellipse cx="955" cy="705" rx="42" ry="30" fill="#a8c868" opacity="0.55"/><ellipse cx="118" cy="1019" rx="36" ry="33" fill="#a8c868" opacity="0.58"/><ellipse cx="155" cy="969" rx="18" ry="12" fill="#c8d890" opacity="0.84"/><ellipse cx="64" cy="541" rx="16" ry="14" fill="#b8d078" opacity="0.46"/><ellipse cx="239" cy="963" rx="17" ry="16" fill="#c8d890" opacity="0.75"/><ellipse cx="370" cy="1267" rx="26" ry="16" fill="#8ab050" opacity="0.56"/><ellipse cx="583" cy="981" rx="29" ry="19" fill="#8ab050" opacity="0.49"/><ellipse cx="563" cy="221" rx="31" ry="28" fill="#6a8a40" opacity="0.49"/><ellipse cx="179" cy="15" rx="38" ry="31" fill="#c8d890" opacity="0.78"/><ellipse cx="949" cy="894" rx="27" ry="23" fill="#4e6a34" opacity="0.81"/><ellipse cx="792" cy="710" rx="28" ry="18" fill="#4e6a34" opacity="0.67"/><ellipse cx="585" cy="1075" rx="18" ry="15" fill="#6a8a40" opacity="0.84"/><ellipse cx="774" cy="560" rx="20" ry="17" fill="#6a8a40" opacity="0.67"/><ellipse cx="577" cy="306" rx="32" ry="23" fill="#c8d890" opacity="0.85"/><ellipse cx="292" cy="440" rx="16" ry="15" fill="#b8d078" opacity="0.80"/><ellipse cx="220" cy="885" rx="20" ry="15" fill="#c8d890" opacity="0.83"/><ellipse cx="448" cy="360" rx="33" ry="33" fill="#b8d078" opacity="0.67"/><ellipse cx="560" cy="387" rx="42" ry="23" fill="#8ab050" opacity="0.80"/><ellipse cx="530" cy="1010" rx="35" ry="28" fill="#6a8a40" opacity="0.72"/><ellipse cx="435" cy="1046" rx="23" ry="22" fill="#a8c868" opacity="0.61"/><ellipse cx="448" cy="1061" rx="29" ry="23" fill="#6a8a40" opacity="0.67"/><ellipse cx="734" cy="499" rx="42" ry="42" fill="#a8c868" opacity="0.65"/><ellipse cx="121" cy="602" rx="19" ry="15" fill="#c8d890" opacity="0.45"/><ellipse cx="44" cy="1018" rx="18" ry="16" fill="#5a7a38" opacity="0.70"/><ellipse cx="50" cy="1049" rx="23" ry="16" fill="#a8c868" opacity="0.70"/><ellipse cx="828" cy="234" rx="30" ry="24" fill="#6a8a40" opacity="0.57"/><ellipse cx="88" cy="1190" rx="35" ry="20" fill="#8ab050" opacity="0.81"/><ellipse cx="198" cy="25" rx="33" ry="19" fill="#b8d078" opacity="0.57"/><ellipse cx="951" cy="384" rx="39" ry="20" fill="#8ab050" opacity="0.69"/><ellipse cx="629" cy="425" rx="19" ry="10" fill="#4e6a34" opacity="0.54"/><ellipse cx="1025" cy="1290" rx="38" ry="23" fill="#5a7a38" opacity="0.79"/><ellipse cx="465" cy="470" rx="35" ry="30" fill="#b8d078" opacity="0.57"/><ellipse cx="940" cy="1276" rx="44" ry="25" fill="#c8d890" opacity="0.84"/><ellipse cx="332" cy="1199" rx="30" ry="20" fill="#a8c868" opacity="0.75"/><ellipse cx="570" cy="274" rx="27" ry="14" fill="#6a8a40" opacity="0.74"/><ellipse cx="504" cy="208" rx="43" ry="29" fill="#6a8a40" opacity="0.46"/><ellipse cx="318" cy="1064" rx="27" ry="18" fill="#c8d890" opacity="0.84"/><ellipse cx="571" cy="810" rx="28" ry="22" fill="#c8d890" opacity="0.84"/><ellipse cx="702" cy="559" rx="17" ry="16" fill="#c8d890" opacity="0.70"/><ellipse cx="274" cy="958" rx="28" ry="19" fill="#b8d078" opacity="0.72"/><ellipse cx="1039" cy="1136" rx="37" ry="21" fill="#8ab050" opacity="0.75"/><ellipse cx="861" cy="603" rx="38" ry="36" fill="#c8d890" opacity="0.64"/><ellipse cx="159" cy="834" rx="24" ry="20" fill="#4e6a34" opacity="0.66"/><ellipse cx="225" cy="839" rx="41" ry="36" fill="#6a8a40" opacity="0.56"/><ellipse cx="305" cy="641" rx="31" ry="28" fill="#6a8a40" opacity="0.59"/><ellipse cx="785" cy="286" rx="35" ry="31" fill="#5a7a38" opacity="0.51"/><ellipse cx="732" cy="1231" rx="35" ry="19" fill="#6a8a40" opacity="0.84"/><ellipse cx="122" cy="1075" rx="17" ry="9" fill="#4e6a34" opacity="0.46"/><ellipse cx="508" cy="1217" rx="16" ry="10" fill="#5a7a38" opacity="0.68"/><ellipse cx="1052" cy="841" rx="41" ry="25" fill="#b8d078" opacity="0.71"/><ellipse cx="719" cy="854" rx="19" ry="17" fill="#c8d890" opacity="0.47"/><ellipse cx="704" cy="185" rx="44" ry="22" fill="#4e6a34" opacity="0.60"/><ellipse cx="53" cy="986" rx="28" ry="14" fill="#8ab050" opacity="0.51"/><ellipse cx="846" cy="460" rx="33" ry="25" fill="#c8d890" opacity="0.45"/><ellipse cx="529" cy="593" rx="24" ry="20" fill="#8ab050" opacity="0.78"/><ellipse cx="224" cy="1045" rx="39" ry="22" fill="#a8c868" opacity="0.78"/><ellipse cx="711" cy="144" rx="40" ry="35" fill="#a8c868" opacity="0.77"/><ellipse cx="556" cy="698" rx="33" ry="32" fill="#4e6a34" opacity="0.53"/><ellipse cx="73" cy="854" rx="18" ry="14" fill="#4e6a34" opacity="0.83"/><ellipse cx="971" cy="166" rx="30" ry="21" fill="#a8c868" opacity="0.72"/><ellipse cx="404" cy="435" rx="39" ry="34" fill="#a8c868" opacity="0.60"/><ellipse cx="939" cy="597" rx="20" ry="15" fill="#a8c868" opacity="0.58"/><ellipse cx="600" cy="1265" rx="18" ry="10" fill="#4e6a34" opacity="0.51"/><ellipse cx="598" cy="828" rx="38" ry="27" fill="#8ab050" opacity="0.52"/><ellipse cx="944" cy="454" rx="21" ry="18" fill="#b8d078" opacity="0.59"/><ellipse cx="103" cy="556" rx="29" ry="26" fill="#c8d890" opacity="0.66"/><ellipse cx="404" cy="834" rx="16" ry="12" fill="#b8d078" opacity="0.83"/><ellipse cx="30" cy="1116" rx="38" ry="32" fill="#8ab050" opacity="0.79"/><ellipse cx="710" cy="851" rx="40" ry="27" fill="#c8d890" opacity="0.70"/><ellipse cx="981" cy="187" rx="24" ry="18" fill="#5a7a38" opacity="0.67"/><ellipse cx="635" cy="1055" rx="32" ry="26" fill="#5a7a38" opacity="0.61"/><ellipse cx="785" cy="780" rx="27" ry="18" fill="#a8c868" opacity="0.78"/><ellipse cx="946" cy="1023" rx="31" ry="30" fill="#c8d890" opacity="0.59"/><ellipse cx="982" cy="1015" rx="35" ry="32" fill="#6a8a40" opacity="0.52"/><ellipse cx="25" cy="794" rx="42" ry="29" fill="#4e6a34" opacity="0.55"/><ellipse cx="104" cy="815" rx="36" ry="22" fill="#a8c868" opacity="0.84"/><ellipse cx="730" cy="1276" rx="44" ry="26" fill="#b8d078" opacity="0.58"/><ellipse cx="819" cy="531" rx="26" ry="16" fill="#c8d890" opacity="0.79"/><ellipse cx="59" cy="488" rx="24" ry="22" fill="#8ab050" opacity="0.48"/><ellipse cx="139" cy="239" rx="41" ry="26" fill="#a8c868" opacity="0.59"/><ellipse cx="112" cy="871" rx="25" ry="20" fill="#b8d078" opacity="0.77"/><ellipse cx="973" cy="1299" rx="21" ry="17" fill="#c8d890" opacity="0.81"/><ellipse cx="792" cy="367" rx="30" ry="27" fill="#4e6a34" opacity="0.52"/><ellipse cx="681" cy="49" rx="29" ry="20" fill="#b8d078" opacity="0.47"/><ellipse cx="509" cy="945" rx="42" ry="39" fill="#c8d890" opacity="0.76"/><ellipse cx="578" cy="183" rx="36" ry="31" fill="#6a8a40" opacity="0.80"/><ellipse cx="613" cy="142" rx="45" ry="35" fill="#4e6a34" opacity="0.45"/><ellipse cx="289" cy="630" rx="29" ry="27" fill="#c8d890" opacity="0.62"/><ellipse cx="217" cy="923" rx="43" ry="43" fill="#4e6a34" opacity="0.61"/><ellipse cx="1021" cy="1125" rx="20" ry="19" fill="#a8c868" opacity="0.54"/><ellipse cx="13" cy="890" rx="30" ry="22" fill="#a8c868" opacity="0.61"/><ellipse cx="214" cy="1260" rx="39" ry="37" fill="#8ab050" opacity="0.74"/><ellipse cx="8" cy="483" rx="37" ry="19" fill="#c8d890" opacity="0.73"/><ellipse cx="613" cy="1139" rx="38" ry="36" fill="#a8c868" opacity="0.56"/><ellipse cx="820" cy="173" rx="18" ry="11" fill="#8ab050" opacity="0.85"/><ellipse cx="1001" cy="1104" rx="36" ry="26" fill="#6a8a40" opacity="0.65"/><ellipse cx="541" cy="1054" rx="16" ry="9" fill="#b8d078" opacity="0.52"/><ellipse cx="343" cy="1070" rx="29" ry="27" fill="#5a7a38" opacity="0.61"/><ellipse cx="335" cy="754" rx="16" ry="14" fill="#5a7a38" opacity="0.67"/><ellipse cx="708" cy="1086" rx="40" ry="37" fill="#c8d890" opacity="0.60"/><ellipse cx="220" cy="372" rx="43" ry="39" fill="#b8d078" opacity="0.84"/><ellipse cx="662" cy="406" rx="39" ry="24" fill="#a8c868" opacity="0.71"/><ellipse cx="41" cy="97" rx="25" ry="20" fill="#c8d890" opacity="0.73"/><ellipse cx="957" cy="286" rx="18" ry="13" fill="#a8c868" opacity="0.53"/><ellipse cx="737" cy="704" rx="28" ry="24" fill="#c8d890" opacity="0.56"/><ellipse cx="415" cy="123" rx="39" ry="37" fill="#8ab050" opacity="0.59"/><ellipse cx="1017" cy="693" rx="27" ry="23" fill="#5a7a38" opacity="0.55"/><ellipse cx="179" cy="443" rx="41" ry="36" fill="#a8c868" opacity="0.78"/><ellipse cx="398" cy="931" rx="43" ry="32" fill="#4e6a34" opacity="0.74"/><ellipse cx="31" cy="249" rx="31" ry="19" fill="#a8c868" opacity="0.81"/><ellipse cx="160" cy="1206" rx="16" ry="15" fill="#5a7a38" opacity="0.74"/><ellipse cx="204" cy="1044" rx="38" ry="34" fill="#c8d890" opacity="0.76"/><ellipse cx="480" cy="131" rx="25" ry="23" fill="#5a7a38" opacity="0.81"/><ellipse cx="363" cy="983" rx="41" ry="40" fill="#b8d078" opacity="0.57"/><ellipse cx="928" cy="253" rx="26" ry="21" fill="#6a8a40" opacity="0.80"/><ellipse cx="660" cy="261" rx="20" ry="10" fill="#4e6a34" opacity="0.47"/><ellipse cx="1022" cy="103" rx="17" ry="9" fill="#c8d890" opacity="0.66"/><ellipse cx="367" cy="415" rx="36" ry="22" fill="#6a8a40" opacity="0.50"/><ellipse cx="266" cy="600" rx="36" ry="32" fill="#8ab050" opacity="0.58"/><ellipse cx="520" cy="1066" rx="20" ry="18" fill="#c8d890" opacity="0.66"/><ellipse cx="287" cy="252" rx="41" ry="34" fill="#b8d078" opacity="0.61"/><ellipse cx="832" cy="774" rx="27" ry="27" fill="#a8c868" opacity="0.61"/><ellipse cx="505" cy="770" rx="39" ry="31" fill="#4e6a34" opacity="0.49"/><ellipse cx="319" cy="809" rx="16" ry="11" fill="#c8d890" opacity="0.74"/><ellipse cx="416" cy="1181" rx="32" ry="29" fill="#6a8a40" opacity="0.76"/><ellipse cx="275" cy="456" rx="21" ry="15" fill="#b8d078" opacity="0.62"/><ellipse cx="341" cy="301" rx="18" ry="16" fill="#a8c868" opacity="0.73"/><ellipse cx="973" cy="500" rx="27" ry="21" fill="#b8d078" opacity="0.85"/><ellipse cx="796" cy="1047" rx="36" ry="18" fill="#6a8a40" opacity="0.48"/><ellipse cx="601" cy="193" rx="33" ry="21" fill="#8ab050" opacity="0.75"/><ellipse cx="252" cy="365" rx="18" ry="11" fill="#4e6a34" opacity="0.62"/><ellipse cx="498" cy="5" rx="21" ry="15" fill="#c8d890" opacity="0.84"/><ellipse cx="89" cy="537" rx="42" ry="35" fill="#6a8a40" opacity="0.67"/><ellipse cx="52" cy="927" rx="18" ry="18" fill="#b8d078" opacity="0.71"/><ellipse cx="891" cy="667" rx="43" ry="37" fill="#a8c868" opacity="0.82"/><ellipse cx="378" cy="610" rx="31" ry="31" fill="#6a8a40" opacity="0.50"/><ellipse cx="239" cy="899" rx="40" ry="20" fill="#6a8a40" opacity="0.60"/><ellipse cx="468" cy="925" rx="30" ry="18" fill="#b8d078" opacity="0.50"/><ellipse cx="889" cy="1034" rx="35" ry="27" fill="#4e6a34" opacity="0.71"/><ellipse cx="534" cy="522" rx="28" ry="23" fill="#c8d890" opacity="0.78"/><ellipse cx="363" cy="760" rx="35" ry="27" fill="#8ab050" opacity="0.60"/><ellipse cx="487" cy="262" rx="22" ry="16" fill="#6a8a40" opacity="0.65"/><ellipse cx="285" cy="1283" rx="39" ry="22" fill="#4e6a34" opacity="0.63"/><ellipse cx="948" cy="822" rx="26" ry="26" fill="#b8d078" opacity="0.54"/><ellipse cx="375" cy="1249" rx="35" ry="31" fill="#5a7a38" opacity="0.61"/><ellipse cx="955" cy="93" rx="43" ry="35" fill="#c8d890" opacity="0.47"/><ellipse cx="92" cy="651" rx="24" ry="19" fill="#b8d078" opacity="0.51"/><ellipse cx="322" cy="115" rx="15" ry="10" fill="#8ab050" opacity="0.65"/><ellipse cx="381" cy="1278" rx="37" ry="19" fill="#5a7a38" opacity="0.54"/><ellipse cx="576" cy="432" rx="17" ry="16" fill="#a8c868" opacity="0.54"/><ellipse cx="701" cy="761" rx="22" ry="17" fill="#6a8a40" opacity="0.61"/><ellipse cx="739" cy="599" rx="17" ry="16" fill="#8ab050" opacity="0.76"/><ellipse cx="355" cy="1296" rx="25" ry="23" fill="#6a8a40" opacity="0.58"/><ellipse cx="946" cy="39" rx="39" ry="37" fill="#5a7a38" opacity="0.59"/><ellipse cx="830" cy="1125" rx="19" ry="13" fill="#a8c868" opacity="0.77"/><ellipse cx="835" cy="529" rx="41" ry="26" fill="#5a7a38" opacity="0.81"/><ellipse cx="693" cy="989" rx="25" ry="16" fill="#c8d890" opacity="0.59"/><ellipse cx="305" cy="284" rx="40" ry="36" fill="#5a7a38" opacity="0.80"/><ellipse cx="525" cy="220" rx="41" ry="33" fill="#4e6a34" opacity="0.63"/><ellipse cx="156" cy="1156" rx="16" ry="15" fill="#4e6a34" opacity="0.73"/><ellipse cx="440" cy="575" rx="30" ry="24" fill="#c8d890" opacity="0.68"/><ellipse cx="406" cy="1111" rx="24" ry="19" fill="#8ab050" opacity="0.84"/><ellipse cx="280" cy="145" rx="23" ry="19" fill="#8ab050" opacity="0.74"/><ellipse cx="169" cy="706" rx="29" ry="24" fill="#6a8a40" opacity="0.58"/><ellipse cx="550" cy="386" rx="34" ry="20" fill="#8ab050" opacity="0.75"/><ellipse cx="194" cy="1018" rx="29" ry="17" fill="#6a8a40" opacity="0.69"/><ellipse cx="372" cy="783" rx="30" ry="30" fill="#c8d890" opacity="0.61"/><ellipse cx="780" cy="696" rx="26" ry="25" fill="#5a7a38" opacity="0.52"/><ellipse cx="144" cy="974" rx="16" ry="16" fill="#a8c868" opacity="0.51"/><ellipse cx="492" cy="2" rx="27" ry="16" fill="#5a7a38" opacity="0.47"/><ellipse cx="255" cy="152" rx="25" ry="18" fill="#4e6a34" opacity="0.75"/><ellipse cx="625" cy="670" rx="33" ry="29" fill="#6a8a40" opacity="0.84"/><ellipse cx="612" cy="72" rx="24" ry="17" fill="#b8d078" opacity="0.48"/><ellipse cx="773" cy="751" rx="41" ry="23" fill="#6a8a40" opacity="0.53"/><ellipse cx="621" cy="662" rx="31" ry="21" fill="#b8d078" opacity="0.57"/><ellipse cx="386" cy="210" rx="24" ry="13" fill="#b8d078" opacity="0.64"/><ellipse cx="510" cy="143" rx="25" ry="14" fill="#c8d890" opacity="0.74"/><ellipse cx="860" cy="845" rx="34" ry="29" fill="#6a8a40" opacity="0.79"/><ellipse cx="389" cy="931" rx="19" ry="12" fill="#4e6a34" opacity="0.53"/><ellipse cx="95" cy="32" rx="21" ry="12" fill="#5a7a38" opacity="0.69"/><ellipse cx="249" cy="1119" rx="32" ry="22" fill="#8ab050" opacity="0.75"/><ellipse cx="813" cy="192" rx="24" ry="20" fill="#b8d078" opacity="0.58"/><ellipse cx="6" cy="469" rx="34" ry="17" fill="#b8d078" opacity="0.51"/><ellipse cx="402" cy="1199" rx="20" ry="12" fill="#4e6a34" opacity="0.72"/><ellipse cx="185" cy="316" rx="38" ry="20" fill="#c8d890" opacity="0.56"/><ellipse cx="471" cy="1207" rx="30" ry="21" fill="#6a8a40" opacity="0.57"/><ellipse cx="97" cy="1016" rx="39" ry="22" fill="#b8d078" opacity="0.61"/><ellipse cx="180" cy="778" rx="20" ry="15" fill="#c8d890" opacity="0.72"/><ellipse cx="990" cy="1142" rx="39" ry="32" fill="#6a8a40" opacity="0.55"/><ellipse cx="260" cy="925" rx="31" ry="17" fill="#4e6a34" opacity="0.46"/><ellipse cx="617" cy="892" rx="33" ry="27" fill="#a8c868" opacity="0.51"/><ellipse cx="824" cy="286" rx="29" ry="15" fill="#8ab050" opacity="0.46"/><ellipse cx="212" cy="880" rx="30" ry="16" fill="#a8c868" opacity="0.46"/><ellipse cx="788" cy="1046" rx="27" ry="24" fill="#a8c868" opacity="0.77"/><ellipse cx="888" cy="840" rx="34" ry="30" fill="#4e6a34" opacity="0.80"/><ellipse cx="273" cy="41" rx="20" ry="18" fill="#5a7a38" opacity="0.56"/><ellipse cx="578" cy="556" rx="25" ry="15" fill="#4e6a34" opacity="0.68"/><ellipse cx="526" cy="1150" rx="29" ry="22" fill="#4e6a34" opacity="0.57"/><ellipse cx="516" cy="503" rx="35" ry="26" fill="#6a8a40" opacity="0.66"/><ellipse cx="315" cy="2" rx="40" ry="35" fill="#6a8a40" opacity="0.76"/><ellipse cx="433" cy="1188" rx="22" ry="14" fill="#c8d890" opacity="0.45"/><ellipse cx="891" cy="1119" rx="36" ry="18" fill="#5a7a38" opacity="0.75"/><ellipse cx="500" cy="1248" rx="41" ry="30" fill="#5a7a38" opacity="0.50"/><ellipse cx="1041" cy="646" rx="15" ry="12" fill="#4e6a34" opacity="0.85"/><ellipse cx="219" cy="317" rx="16" ry="9" fill="#8ab050" opacity="0.78"/><ellipse cx="314" cy="580" rx="44" ry="33" fill="#6a8a40" opacity="0.47"/><ellipse cx="285" cy="518" rx="23" ry="18" fill="#8ab050" opacity="0.49"/><ellipse cx="46" cy="982" rx="30" ry="17" fill="#c8d890" opacity="0.85"/><ellipse cx="641" cy="1012" rx="40" ry="31" fill="#5a7a38" opacity="0.70"/><ellipse cx="505" cy="816" rx="26" ry="25" fill="#6a8a40" opacity="0.52"/><ellipse cx="617" cy="944" rx="30" ry="23" fill="#4e6a34" opacity="0.45"/><ellipse cx="848" cy="1185" rx="19" ry="11" fill="#a8c868" opacity="0.72"/><ellipse cx="428" cy="419" rx="30" ry="19" fill="#b8d078" opacity="0.67"/><ellipse cx="730" cy="1072" rx="44" ry="38" fill="#c8d890" opacity="0.73"/><ellipse cx="371" cy="502" rx="44" ry="41" fill="#a8c868" opacity="0.50"/><ellipse cx="362" cy="548" rx="34" ry="33" fill="#6a8a40" opacity="0.62"/><ellipse cx="679" cy="1202" rx="43" ry="33" fill="#8ab050" opacity="0.68"/><ellipse cx="764" cy="981" rx="27" ry="19" fill="#5a7a38" opacity="0.79"/><ellipse cx="442" cy="585" rx="33" ry="24" fill="#c8d890" opacity="0.60"/><ellipse cx="344" cy="84" rx="17" ry="10" fill="#8ab050" opacity="0.51"/><ellipse cx="752" cy="194" rx="42" ry="22" fill="#c8d890" opacity="0.71"/><ellipse cx="1015" cy="1046" rx="17" ry="9" fill="#b8d078" opacity="0.59"/><ellipse cx="695" cy="1239" rx="45" ry="34" fill="#6a8a40" opacity="0.65"/><ellipse cx="35" cy="1043" rx="28" ry="15" fill="#8ab050" opacity="0.61"/><ellipse cx="895" cy="1153" rx="41" ry="38" fill="#c8d890" opacity="0.48"/><ellipse cx="536" cy="1286" rx="21" ry="13" fill="#c8d890" opacity="0.64"/><ellipse cx="25" cy="744" rx="17" ry="13" fill="#8ab050" opacity="0.58"/><ellipse cx="270" cy="330" rx="37" ry="23" fill="#4e6a34" opacity="0.50"/><ellipse cx="369" cy="1001" rx="37" ry="24" fill="#4e6a34" opacity="0.46"/><ellipse cx="733" cy="935" rx="42" ry="40" fill="#c8d890" opacity="0.79"/><ellipse cx="845" cy="70" rx="39" ry="36" fill="#6a8a40" opacity="0.78"/><ellipse cx="346" cy="993" rx="15" ry="12" fill="#6a8a40" opacity="0.55"/><ellipse cx="1014" cy="11" rx="43" ry="34" fill="#a8c868" opacity="0.85"/><ellipse cx="433" cy="1170" rx="32" ry="25" fill="#b8d078" opacity="0.79"/><ellipse cx="333" cy="882" rx="32" ry="28" fill="#8ab050" opacity="0.68"/><ellipse cx="323" cy="382" rx="45" ry="22" fill="#a8c868" opacity="0.59"/><ellipse cx="738" cy="235" rx="22" ry="14" fill="#6a8a40" opacity="0.81"/><ellipse cx="413" cy="1245" rx="43" ry="25" fill="#5a7a38" opacity="0.70"/><ellipse cx="384" cy="552" rx="29" ry="17" fill="#b8d078" opacity="0.54"/><ellipse cx="355" cy="183" rx="23" ry="20" fill="#6a8a40" opacity="0.85"/><ellipse cx="987" cy="870" rx="30" ry="23" fill="#6a8a40" opacity="0.63"/><ellipse cx="1012" cy="151" rx="34" ry="20" fill="#4e6a34" opacity="0.59"/><ellipse cx="607" cy="468" rx="38" ry="30" fill="#c8d890" opacity="0.62"/><ellipse cx="943" cy="73" rx="19" ry="18" fill="#8ab050" opacity="0.61"/><ellipse cx="82" cy="259" rx="43" ry="24" fill="#c8d890" opacity="0.79"/><ellipse cx="127" cy="1253" rx="42" ry="35" fill="#a8c868" opacity="0.65"/><ellipse cx="886" cy="876" rx="29" ry="26" fill="#8ab050" opacity="0.53"/><ellipse cx="619" cy="565" rx="39" ry="26" fill="#8ab050" opacity="0.79"/><ellipse cx="271" cy="230" rx="24" ry="22" fill="#5a7a38" opacity="0.60"/><ellipse cx="336" cy="800" rx="32" ry="22" fill="#c8d890" opacity="0.65"/><ellipse cx="560" cy="612" rx="29" ry="17" fill="#5a7a38" opacity="0.82"/></g>
<!-- ground -->
<rect x="5" y="1260" width="1055" height="195" fill="#7fa45c"/>
<polygon points="300,1375 530,1375 640,1455 330,1455" fill="#d6dce4"/>
<polygon points="530,1345 1060,1345 1060,1380 560,1380" fill="#a64234"/>
<polygon points="640,1380 1060,1380 1060,1455 720,1455" fill="#8aaa80"/>
<rect x="520" y="1280" width="420" height="60" fill="#6a9a58"/>
<rect x="5" y="1270" width="110" height="40" fill="#b04a38"/>
<!-- tower -->
<rect x="300" y="30" width="110" height="75" fill="#7e2a26"/>
<path d="M240,110 L490,110 Q470,200 500,290 L210,290 Q260,200 240,110 Z" fill="#8c2c26"/>
<path d="M295,290 Q365,200 435,290 Z" fill="#c85a40"/>
<rect x="205" y="285" width="295" height="225" fill="#8a2e28"/>
<rect x="310" y="295" width="105" height="200" fill="#f0f0f0"/>
<rect x="328" y="310" width="70" height="175" fill="#e6ebc2"/>
<rect x="190" y="500" width="350" height="80" fill="#b8402e"/>
<rect x="200" y="575" width="300" height="315" fill="#8a3a2e"/>
<rect x="235" y="585" width="40" height="300" fill="#c0503c"/>
<rect x="460" y="585" width="40" height="300" fill="#b8483a"/>
<rect x="308" y="612" width="115" height="210" fill="#f0f0f0"/>
<rect x="326" y="628" width="80" height="185" fill="#eaf0c4"/>
<rect x="270" y="805" width="65" height="85" fill="#dadada"/>
<rect x="225" y="880" width="280" height="40" fill="#be4a36"/>
<rect x="225" y="915" width="275" height="325" fill="#9a3c30"/>
<rect x="293" y="915" width="145" height="325" fill="#eeeeea"/>
<rect x="315" y="980" width="102" height="260" fill="#3a1418"/>
<polygon points="295,1240 485,1240 500,1370 290,1370" fill="#9e3430"/>
<rect x="295" y="1265" width="200" height="12" fill="#e6e6e6"/>
<rect x="295" y="1300" width="200" height="12" fill="#e6e6e6"/>
<rect x="295" y="1335" width="200" height="12" fill="#e6e6e6"/>
<rect x="250" y="1170" width="45" height="200" fill="#b03026"/>
<rect x="460" y="1170" width="50" height="200" fill="#b03026"/>
<rect x="125" y="1230" width="125" height="100" fill="#b8402e"/>
<!-- right wing -->
<rect x="500" y="362" width="330" height="25" fill="#5a2c2c"/>
<path d="M500,385 L830,385 Q840,500 900,580 L495,580 Z" fill="#7a2a28"/>
<path d="M555,540 L555,460 Q590,410 630,460 L630,540 Z" fill="#f0f0f0"/>
<path d="M568,530 L568,468 Q590,435 618,468 L618,530 Z" fill="#e8edc4"/>
<path d="M698,540 L698,460 Q735,410 775,460 L775,540 Z" fill="#f0f0f0"/>
<path d="M712,530 L712,468 Q735,435 762,468 L762,530 Z" fill="#e8edc4"/>
<rect x="495" y="565" width="420" height="60" fill="#b84836"/>
<rect x="495" y="620" width="365" height="230" fill="#7a3228"/>
<rect x="515" y="655" width="100" height="185" fill="#f0f0f0"/>
<rect x="530" y="670" width="72" height="165" fill="#e8ebc6"/>
<rect x="688" y="655" width="100" height="185" fill="#f0f0f0"/>
<rect x="703" y="670" width="72" height="165" fill="#e8ebc6"/>
<rect x="820" y="620" width="45" height="250" fill="#b84636"/>
<rect x="495" y="840" width="395" height="55" fill="#8a2c28"/>
<rect x="490" y="890" width="415" height="50" fill="#c04a38"/>
<rect x="495" y="935" width="385" height="235" fill="#6e3a30"/>
<rect x="515" y="965" width="100" height="205" fill="#f0f0f0"/>
<rect x="530" y="980" width="72" height="185" fill="#e8ebc0"/>
<rect x="688" y="965" width="100" height="205" fill="#f0f0f0"/>
<rect x="703" y="980" width="72" height="185" fill="#e8ebc0"/>
<rect x="840" y="935" width="40" height="300" fill="#b84434"/>
<rect x="500" y="1165" width="380" height="70" fill="#6a2422"/>
<rect x="500" y="1232" width="385" height="30" fill="#c8c0bc"/>
</svg>
</div>
</div>
</body></html>
